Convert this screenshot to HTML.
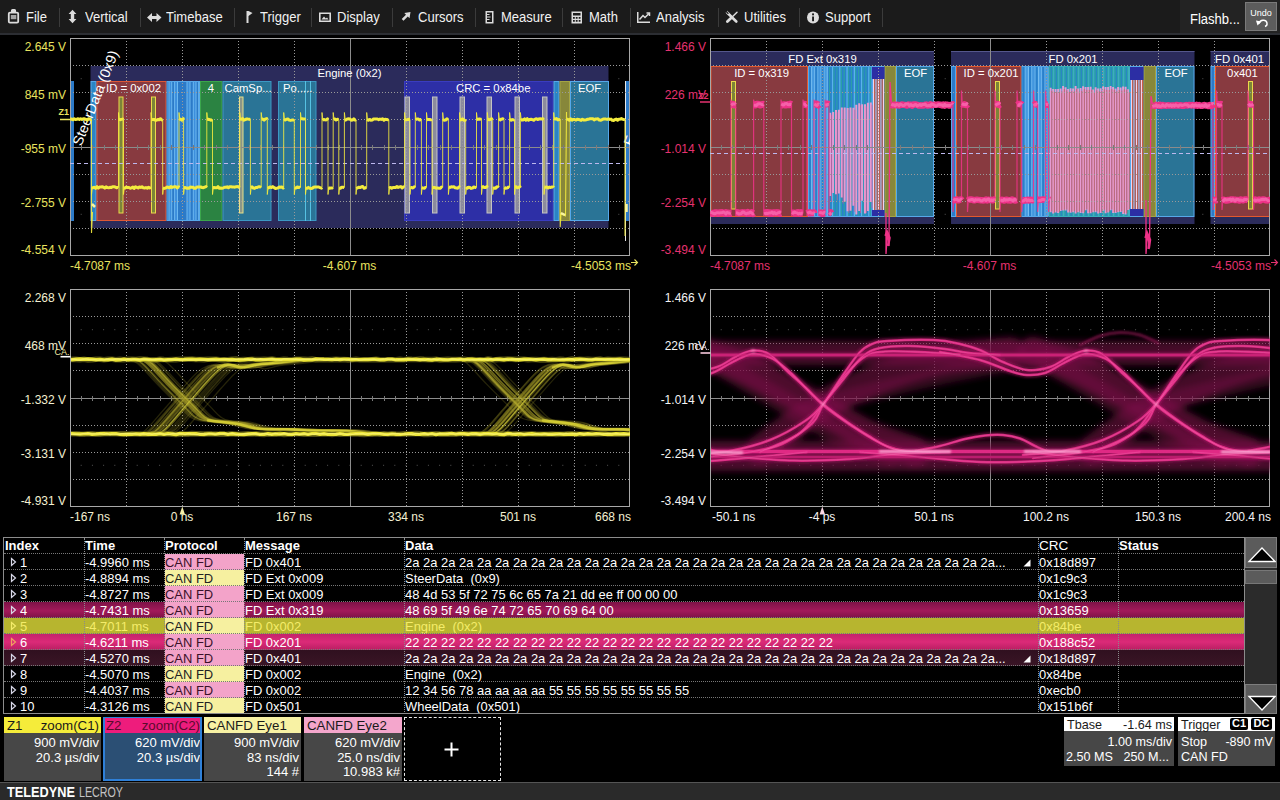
<!DOCTYPE html>
<html lang="en"><head><meta charset="utf-8"><title>Teledyne LeCroy - CAN FD Decode</title>
<style>
*{box-sizing:border-box;margin:0;padding:0}
html,body{width:1280px;height:800px;overflow:hidden;background:#000}
body{position:relative;font-family:"Liberation Sans",Arial,sans-serif;color:#fff;font-size:13px}
#menubar{position:absolute;left:0;top:0;width:1280px;height:35px;background:#1b1b1b;border-bottom:2px solid #2c2e33}
#menubar .mi{position:absolute;top:0;height:33px;line-height:34px;font-size:14px;color:#f2f2f2;white-space:nowrap;transform-origin:0 50%;transform:scaleX(.93)}
#menubar .sep{position:absolute;top:8px;width:1px;height:19px;background:#3b3b3b}
#menubar svg{position:absolute}
#mright{position:absolute;left:1180px;top:0;width:100px;height:33px;background:#232323}
#flash{position:absolute;left:1190px;top:0;line-height:38px;height:33px;font-size:14px;color:#fff;transform-origin:0 50%;transform:scaleX(.93)}
#undo{position:absolute;left:1245px;top:2px;width:32px;height:29px;background:#5c5c5c;border:1px solid #7a7a7a;font-size:9px;line-height:11px;text-align:center;color:#fff;padding-top:5px}
#plots{position:absolute;left:0;top:35px}
#tbl{position:absolute;left:3px;top:537px;width:1242px;height:177px;border:1px solid #8c8c8c;background:#000;overflow:hidden}
.row{position:absolute;left:0;width:1240px;height:16px}
.row span{position:absolute;top:0;height:16px;line-height:17px;font-size:12.95px;white-space:nowrap;overflow:hidden;color:#fff}
.hdr span{font-weight:bold;line-height:16px;font-size:13px}
.vl{position:absolute;top:0;width:0;height:176px;border-left:1px dotted #8a8a8a}
.hl{position:absolute;left:0;height:0;width:1240px;border-top:1px dotted #777}
.pk{background:#f3a3c9;color:#3a1028 !important}
.yl{background:#f6f0a0;color:#222 !important}
#sb{position:absolute;left:1245px;top:537px;width:32px;height:177px;background:#2b2b2b}
#sb .btn{position:absolute;left:0;width:32px;background:#5b5b5b;border:1px solid #7d7d7d}
#sb .thumb{position:absolute;left:0;top:33px;width:32px;height:14px;background:#5b5b5b;border:1px solid #777}
.box{position:absolute;top:717px;height:64px;background:#474747;font-size:13px;color:#fff}
.box .h{position:absolute;left:0;top:0;right:0;height:16px;line-height:17px;font-size:13.3px;color:#1a1a1a;white-space:nowrap}
.box .h i{font-style:normal;position:absolute;left:3px}
.box .h b{font-weight:normal;position:absolute;right:2px}
.box .l{position:absolute;right:2px;height:15px;line-height:15px;white-space:nowrap}
#footer{position:absolute;left:0;top:782px;width:1280px;height:18px;background:#2a2a2a;border-top:1px solid #555}
</style></head><body>

<div id="menubar">
<div class="mi" style="left:26px">File</div>
<div class="mi" style="left:85px">Vertical</div>
<div class="mi" style="left:166px">Timebase</div>
<div class="mi" style="left:260px">Trigger</div>
<div class="mi" style="left:337px">Display</div>
<div class="mi" style="left:418px">Cursors</div>
<div class="mi" style="left:501px">Measure</div>
<div class="mi" style="left:589px">Math</div>
<div class="mi" style="left:656px">Analysis</div>
<div class="mi" style="left:744px">Utilities</div>
<div class="mi" style="left:825px">Support</div>
<div class="sep" style="left:59px"></div>
<div class="sep" style="left:140px"></div>
<div class="sep" style="left:234px"></div>
<div class="sep" style="left:311px"></div>
<div class="sep" style="left:392px"></div>
<div class="sep" style="left:475px"></div>
<div class="sep" style="left:562px"></div>
<div class="sep" style="left:630px"></div>
<div class="sep" style="left:718px"></div>
<div class="sep" style="left:799px"></div>
<div class="sep" style="left:882px"></div>
<svg style="left:0;top:0" width="900" height="34" viewBox="0 0 900 34">
<g fill="none" stroke="#dcdcdc" stroke-width="1.6">
<!-- file (clipboard) -->
<rect x="8.800" y="12.600" width="9.400" height="10" rx="1.200" stroke-width="1.800"/><path d="M11 12.200v-2.200c0 -1.500 5 -1.500 5 0v2.200z" fill="#dcdcdc" stroke="none"/>
<rect x="10.800" y="15" width="5.500" height="4.200" fill="#a4a4a4" stroke="none"/>
</g>
<g fill="#dcdcdc">
<!-- vertical arrow -->
<path d="M72.500 9.800l3.900 4.300h-2.200v4.900h2.200l-3.900 4.300l-3.900 -4.300h2.200v-4.900h-2.200z"/>
<!-- horizontal arrow -->
<path d="M147 17.500l5 -4.500v3h4.500v-3l5 4.500l-5 4.500v-3h-4.500v3z"/>
<!-- trigger flag -->
<path d="M246.500 11h2v12h-2z M248.500 11l4 2l-4 3z"/>
<!-- display -->
<path d="M319 12.500h12v9.500h-12z M320.600 14.100v6.300h8.800v-6.300z" fill-rule="evenodd"/>
<path d="M321.500 19.500l2.500 -3l1.800 2l1.200 -1l1.500 2z"/>
<!-- cursors -->
<path d="M410.500 12l-1 6.200l-1.700 -1.700l-4.300 4.300l-1.800 -1.800l4.300 -4.300l-1.700 -1.700z"/>
<!-- measure -->
<path d="M485.500 11h8v12.500h-8z M487 12.500v9.500h5v-9.500z" fill-rule="evenodd"/>
<path d="M487 14h2.500v1h-2.500z M487 16.500h3.500v1h-3.500z M487 19h2.500v1h-2.500z"/>
<!-- math (calculator) -->
<path d="M571.500 11.500h10.500v12h-10.500z M573 13v2.500h7.500v-2.500z M573 17v1.800h1.800v-1.800z M575.800 17v1.800h1.800v-1.800z M578.700 17v1.800h1.800v-1.800z M573 20v1.800h1.800v-1.800z M575.800 20v1.800h1.800v-1.800z M578.700 20v1.800h1.800v-1.800z" fill-rule="evenodd"/>
<!-- analysis -->
<path d="M637 12h1.500v9.500h11.500v1.500h-13z"/>
<!-- support -->
<circle cx="813" cy="17.500" r="6"/>
</g>
<path d="M639.500 19.500l3.500 -4l2 2l4 -4" fill="none" stroke="#dcdcdc" stroke-width="1.500"/>
<path d="M646.500 13h3v3" fill="none" stroke="#dcdcdc" stroke-width="1.500"/>
<!-- utilities: crossed tools -->
<g stroke="#dcdcdc" stroke-linecap="round" fill="none"><path d="M727.800 13.300l8.500 8.200" stroke-width="2.600"/><path d="M726.600 13.600l1.600 -1.800" stroke-width="2.800" stroke-linecap="butt"/>
<path d="M737 12.300l-4.600 4.400" stroke-width="1.500"/><path d="M731.600 17.600l-4.200 4" stroke-width="2.800"/></g>
<path d="M726 11.300l2.400 2.400" stroke="#1b1b1b" stroke-width="1.300"/>
<!-- support i -->
<rect x="812.100" y="16.500" width="1.900" height="4.700" fill="#1b1b1b"/><rect x="812.100" y="13.400" width="1.900" height="1.900" fill="#1b1b1b"/>
</svg>
<div id="mright"></div><div id="flash">Flashb...</div>
<div id="undo">Undo<svg style="left:9px;top:13px" width="14" height="12" viewBox="0 0 14 12"><path d="M4 7.500c1 -4 7 -4.500 8 -.500c.300 1.800 -.600 3 -2 3.500" fill="none" stroke="#fff" stroke-width="1.400"/><path d="M1 4.500l5.500 1l-4 4z" fill="#fff"/></svg></div>
</div>
<svg id="plots" width="1280" height="502" viewBox="0 35 1280 502" font-family='"Liberation Sans", Arial, sans-serif' font-size="12">
<defs>
<filter id="bl1" filterUnits="userSpaceOnUse" x="640" y="280" width="640" height="240"><feGaussianBlur stdDeviation="0.6"/></filter>
<filter id="bl2" filterUnits="userSpaceOnUse" x="640" y="280" width="640" height="240"><feGaussianBlur stdDeviation="1.3"/></filter>
<filter id="bl3" filterUnits="userSpaceOnUse" x="640" y="280" width="640" height="240"><feGaussianBlur stdDeviation="3"/></filter>
</defs>
<clipPath id="c1"><rect x="70" y="38" width="560" height="218"/></clipPath>
<g id="p1">
<text x="66" y="51.0" text-anchor="end" fill="#e9e35f">2.645 V</text><text x="66" y="99.2" text-anchor="end" fill="#e9e35f">845 mV</text><text x="66" y="153.0" text-anchor="end" fill="#e9e35f">-955 mV</text><text x="66" y="207.2" text-anchor="end" fill="#e9e35f">-2.755 V</text><text x="66" y="253.5" text-anchor="end" fill="#e9e35f">-4.554 V</text>
<text x="70" y="270" fill="#e9e35f">-4.7087 ms</text><text x="349.500" y="270" text-anchor="middle" fill="#e9e35f">-4.607 ms</text><text x="631" y="270" text-anchor="end" fill="#e9e35f">-4.5053 ms</text>
<path d="M631 262.500h6.500m-3 -3l3 3l-3 3" stroke="#e9e35f" fill="none" stroke-width="1.100"/>
<g fill="#555"><rect x="80.7" y="78.2" width="1" height="1"/><rect x="91.9" y="78.2" width="1" height="1"/><rect x="103.1" y="78.2" width="1" height="1"/><rect x="114.3" y="78.2" width="1" height="1"/><rect x="125.5" y="78.2" width="1" height="1"/><rect x="136.7" y="78.2" width="1" height="1"/><rect x="147.9" y="78.2" width="1" height="1"/><rect x="159.1" y="78.2" width="1" height="1"/><rect x="170.3" y="78.2" width="1" height="1"/><rect x="181.5" y="78.2" width="1" height="1"/><rect x="192.7" y="78.2" width="1" height="1"/><rect x="203.9" y="78.2" width="1" height="1"/><rect x="215.1" y="78.2" width="1" height="1"/><rect x="226.3" y="78.2" width="1" height="1"/><rect x="237.5" y="78.2" width="1" height="1"/><rect x="248.7" y="78.2" width="1" height="1"/><rect x="259.9" y="78.2" width="1" height="1"/><rect x="271.1" y="78.2" width="1" height="1"/><rect x="282.3" y="78.2" width="1" height="1"/><rect x="293.5" y="78.2" width="1" height="1"/><rect x="304.7" y="78.2" width="1" height="1"/><rect x="315.9" y="78.2" width="1" height="1"/><rect x="327.1" y="78.2" width="1" height="1"/><rect x="338.3" y="78.2" width="1" height="1"/><rect x="349.5" y="78.2" width="1" height="1"/><rect x="360.7" y="78.2" width="1" height="1"/><rect x="371.9" y="78.2" width="1" height="1"/><rect x="383.1" y="78.2" width="1" height="1"/><rect x="394.3" y="78.2" width="1" height="1"/><rect x="405.5" y="78.2" width="1" height="1"/><rect x="416.7" y="78.2" width="1" height="1"/><rect x="427.9" y="78.2" width="1" height="1"/><rect x="439.1" y="78.2" width="1" height="1"/><rect x="450.3" y="78.2" width="1" height="1"/><rect x="461.5" y="78.2" width="1" height="1"/><rect x="472.7" y="78.2" width="1" height="1"/><rect x="483.9" y="78.2" width="1" height="1"/><rect x="495.1" y="78.2" width="1" height="1"/><rect x="506.3" y="78.2" width="1" height="1"/><rect x="517.5" y="78.2" width="1" height="1"/><rect x="528.7" y="78.2" width="1" height="1"/><rect x="539.9" y="78.2" width="1" height="1"/><rect x="551.1" y="78.2" width="1" height="1"/><rect x="562.3" y="78.2" width="1" height="1"/><rect x="573.5" y="78.2" width="1" height="1"/><rect x="584.7" y="78.2" width="1" height="1"/><rect x="595.9" y="78.2" width="1" height="1"/><rect x="607.1" y="78.2" width="1" height="1"/><rect x="618.3" y="78.2" width="1" height="1"/><rect x="80.7" y="213.8" width="1" height="1"/><rect x="91.9" y="213.8" width="1" height="1"/><rect x="103.1" y="213.8" width="1" height="1"/><rect x="114.3" y="213.8" width="1" height="1"/><rect x="125.5" y="213.8" width="1" height="1"/><rect x="136.7" y="213.8" width="1" height="1"/><rect x="147.9" y="213.8" width="1" height="1"/><rect x="159.1" y="213.8" width="1" height="1"/><rect x="170.3" y="213.8" width="1" height="1"/><rect x="181.5" y="213.8" width="1" height="1"/><rect x="192.7" y="213.8" width="1" height="1"/><rect x="203.9" y="213.8" width="1" height="1"/><rect x="215.1" y="213.8" width="1" height="1"/><rect x="226.3" y="213.8" width="1" height="1"/><rect x="237.5" y="213.8" width="1" height="1"/><rect x="248.7" y="213.8" width="1" height="1"/><rect x="259.9" y="213.8" width="1" height="1"/><rect x="271.1" y="213.8" width="1" height="1"/><rect x="282.3" y="213.8" width="1" height="1"/><rect x="293.5" y="213.8" width="1" height="1"/><rect x="304.7" y="213.8" width="1" height="1"/><rect x="315.9" y="213.8" width="1" height="1"/><rect x="327.1" y="213.8" width="1" height="1"/><rect x="338.3" y="213.8" width="1" height="1"/><rect x="349.5" y="213.8" width="1" height="1"/><rect x="360.7" y="213.8" width="1" height="1"/><rect x="371.9" y="213.8" width="1" height="1"/><rect x="383.1" y="213.8" width="1" height="1"/><rect x="394.3" y="213.8" width="1" height="1"/><rect x="405.5" y="213.8" width="1" height="1"/><rect x="416.7" y="213.8" width="1" height="1"/><rect x="427.9" y="213.8" width="1" height="1"/><rect x="439.1" y="213.8" width="1" height="1"/><rect x="450.3" y="213.8" width="1" height="1"/><rect x="461.5" y="213.8" width="1" height="1"/><rect x="472.7" y="213.8" width="1" height="1"/><rect x="483.9" y="213.8" width="1" height="1"/><rect x="495.1" y="213.8" width="1" height="1"/><rect x="506.3" y="213.8" width="1" height="1"/><rect x="517.5" y="213.8" width="1" height="1"/><rect x="528.7" y="213.8" width="1" height="1"/><rect x="539.9" y="213.8" width="1" height="1"/><rect x="551.1" y="213.8" width="1" height="1"/><rect x="562.3" y="213.8" width="1" height="1"/><rect x="573.5" y="213.8" width="1" height="1"/><rect x="584.7" y="213.8" width="1" height="1"/><rect x="595.9" y="213.8" width="1" height="1"/><rect x="607.1" y="213.8" width="1" height="1"/><rect x="618.3" y="213.8" width="1" height="1"/></g>
<g clip-path="url(#c1)">
<rect x="90.500" y="66" width="518" height="162" fill="#2b2b5b"/>
<rect x="70.5" y="81" width="3.5" height="140" fill="#2c7ac8"/>
<rect x="91.0" y="81.5" width="5.0" height="139" fill="#2a84c4" stroke="#56a8ea" stroke-width="1"/>
<rect x="97.0" y="81.5" width="69.0" height="139" fill="#883a40" stroke="#de5836" stroke-width="1"/>
<rect x="167.0" y="81.5" width="32.5" height="139" fill="#2c7ac8" stroke="#56a8ea" stroke-width="1"/>
<rect x="169" y="82" width="2.6999999999999886" height="138" fill="#3c8edc"/>
<rect x="174.6" y="82" width="2.9000000000000057" height="138" fill="#3c8edc"/>
<rect x="187" y="82" width="3" height="138" fill="#3c8edc"/>
<rect x="193.3" y="82" width="2.6999999999999886" height="138" fill="#3c8edc"/>
<path d="M169 82V220" stroke="#6cb8f0" stroke-width="1"/>
<path d="M171.7 82V220" stroke="#6cb8f0" stroke-width="1"/>
<path d="M174.6 82V220" stroke="#6cb8f0" stroke-width="1"/>
<path d="M177.5 82V220" stroke="#6cb8f0" stroke-width="1"/>
<path d="M187 82V220" stroke="#6cb8f0" stroke-width="1"/>
<path d="M190 82V220" stroke="#6cb8f0" stroke-width="1"/>
<path d="M193.3 82V220" stroke="#6cb8f0" stroke-width="1"/>
<path d="M196 82V220" stroke="#6cb8f0" stroke-width="1"/>
<path d="M198.7 82V220" stroke="#6cb8f0" stroke-width="1"/>
<rect x="200.5" y="81.5" width="21.5" height="139" fill="#2b8342" stroke="#3aa64c" stroke-width="1"/>
<rect x="223.0" y="81.5" width="48.0" height="139" fill="#2a7496" stroke="#3c98c4" stroke-width="1"/>
<rect x="278.5" y="81.5" width="37.5" height="139" fill="#2a7496" stroke="#3c98c4" stroke-width="1"/>
<path d="M305.500 81V221M310.500 81V221" stroke="#56c2e2" stroke-width="1"/>
<rect x="404.5" y="81.5" width="148.5" height="139" fill="#2d2fa6" stroke="#3a3cc0" stroke-width="1"/>
<rect x="554.0" y="81.5" width="5.0" height="139" fill="#2a84c4" stroke="#56a8ea" stroke-width="1"/>
<rect x="560.0" y="81.5" width="9.5" height="139" fill="#87873a" stroke="#a4a444" stroke-width="1"/>
<rect x="570.5" y="81.5" width="38" height="139" fill="#2a7496" stroke="#56a8ea" stroke-width="1"/>
<rect x="625.5" y="81" width="4.5" height="140" fill="#2c7ac8"/>
<path d="M625.500 81V241" stroke="#e8e8e8" stroke-width="1"/>
<rect x="119.0" y="97.0" width="4.0" height="116.0" fill="#7c8438" stroke="#ecd94a" stroke-width="1"/>
<rect x="151.5" y="97.0" width="4" height="116.0" fill="#7c8438" stroke="#ecd94a" stroke-width="1"/>
<rect x="239.5" y="97.0" width="3.5" height="116.0" fill="#8b9688" stroke="#e6e08a" stroke-width="1"/>
<rect x="405.0" y="97.0" width="4.5" height="116.0" fill="#8b8b9d" stroke="#c4c4c4" stroke-width="1"/>
<rect x="432.5" y="97.0" width="4.5" height="116.0" fill="#8b8b9d" stroke="#c4c4c4" stroke-width="1"/>
<rect x="460.0" y="97.0" width="4.5" height="116.0" fill="#8b8b9d" stroke="#c4c4c4" stroke-width="1"/>
<rect x="487.0" y="97.0" width="4.5" height="116.0" fill="#8b8b9d" stroke="#c4c4c4" stroke-width="1"/>
<rect x="515.0" y="97.0" width="4.5" height="116.0" fill="#8b8b9d" stroke="#c4c4c4" stroke-width="1"/>
<rect x="542.5" y="97.0" width="4.5" height="116.0" fill="#8b8b9d" stroke="#c4c4c4" stroke-width="1"/>
</g>
<g stroke="#9a9a9a" stroke-width="1" fill="none" shape-rendering="crispEdges">
<path d="M126.5 38V255" stroke-dasharray="1 2"/>
<path d="M182.5 38V255" stroke-dasharray="1 2"/>
<path d="M238.5 38V255" stroke-dasharray="1 2"/>
<path d="M294.5 38V255" stroke-dasharray="1 2"/>
<path d="M406.5 38V255" stroke-dasharray="1 2"/>
<path d="M462.5 38V255" stroke-dasharray="1 2"/>
<path d="M518.5 38V255" stroke-dasharray="1 2"/>
<path d="M574.5 38V255" stroke-dasharray="1 2"/>
<path d="M70 65.5H630" stroke-dasharray="1 2"/>
<path d="M70 92.5H630" stroke-dasharray="1 2"/>
<path d="M70 119.5H630" stroke-dasharray="1 2"/>
<path d="M70 174.5H630" stroke-dasharray="1 2"/>
<path d="M70 201.5H630" stroke-dasharray="1 2"/>
<path d="M70 228.5H630" stroke-dasharray="1 2"/>
</g>
<g stroke="#8c8c8c" stroke-width="1" fill="none" shape-rendering="crispEdges">
<path d="M350.5 38V255M70 147.5H630"/>
<path d="M81.5 145v5M92.5 145v5M104.5 145v5M115.5 145v5M137.5 145v5M148.5 145v5M160.5 145v5M171.5 145v5M193.5 145v5M204.5 145v5M216.5 145v5M227.5 145v5M249.5 145v5M260.5 145v5M272.5 145v5M283.5 145v5M305.5 145v5M316.5 145v5M328.5 145v5M339.5 145v5M361.5 145v5M372.5 145v5M384.5 145v5M395.5 145v5M417.5 145v5M428.5 145v5M440.5 145v5M451.5 145v5M473.5 145v5M484.5 145v5M496.5 145v5M507.5 145v5M529.5 145v5M540.5 145v5M552.5 145v5M563.5 145v5M585.5 145v5M596.5 145v5M608.5 145v5M619.5 145v5" stroke="#7a7a7a"/>
</g>
<rect x="70.5" y="38.5" width="559" height="217" fill="none" stroke="#a8a8a8" stroke-width="1" shape-rendering="crispEdges"/>
<path d="M70 163.500H630" stroke="#bdb8ee" stroke-width="1" stroke-dasharray="4 3" shape-rendering="crispEdges"/>
<g fill="#fff" font-size="11.300" clip-path="url(#c1)">
<text x="349.500" y="77" text-anchor="middle">Engine (0x2)</text>
<text x="106" y="91.500">ID = 0x002</text><text x="211" y="91.500" text-anchor="middle">4</text><text x="224.500" y="91.500">CamSp...</text><text x="283" y="91.500">Po.....</text><text x="456" y="91.500">CRC = 0x84be</text><text x="578" y="91.500">EOF</text>
<text transform="translate(81.300,146.700) rotate(-68.300)" font-size="14.300" fill="#fff">SteerData (0x9)</text>
<text transform="translate(632.500,147) rotate(-68.300)" font-size="14.300" fill="#fff">E</text>
</g>
<g clip-path="url(#c1)">
<path d="M70 119.5H91.5V194.5L92.3 187.5H118.5V112.5L119.3 119.5H123.5V194.5L124.3 187.5H151V112.5L151.8 119.5H162.7V194.5L163.5 187.5H179V112.5L179.8 119.5H183.6V194.5L184.4 187.5H206.8V112.5L207.60000000000002 119.5H212.5V194.5L213.3 187.5H239.8V112.5L240.60000000000002 119.5H250.4V194.5L251.20000000000002 187.5H261.2V112.5L262.0 119.5H267.3V194.5L268.1 187.5H283.7V112.5L284.5 119.5H294.3V194.5L295.1 187.5H300.5V112.5L301.3 119.5H305.5V194.5L306.3 187.5H322V112.5L322.8 119.5H328V194.5L328.8 187.5H333.2V112.5L334.0 119.5H338.8V194.5L339.6 187.5H344.4V112.5L345.2 119.5H356V194.5L356.8 187.5H366.7V112.5L367.5 119.5H388.8V194.5L389.6 187.5H404.5V112.5L405.3 119.5H410V194.5L410.8 187.5H415.3V112.5L416.1 119.5H421.4V194.5L422.2 187.5H426.5V112.5L427.3 119.5H432V194.5L432.8 187.5H442.7V112.5L443.5 119.5H448.4V194.5L449.2 187.5H459.6V112.5L460.40000000000003 119.5H465.7V194.5L466.5 187.5H476.5V112.5L477.3 119.5H481.5V194.5L482.3 187.5H487.3V112.5L488.1 119.5H492.7V194.5L493.5 187.5H498.6V112.5L499.40000000000003 119.5H504V194.5L504.8 187.5H509.6V112.5L510.40000000000003 119.5H514.5V194.5L515.3 187.5H520.4V112.5L521.1999999999999 119.5H544V194.5L544.8 187.5H553.7V112.5L554.5 119.5H560.2" fill="none" stroke="#f4ec3e" stroke-width="1" opacity=".85"/><path d="M70.3 119.2 L71.6 118.9 L72.9 119.8 L74.2 118.7 L75.5 119.6 L76.8 119.3 L78.1 118.7 L79.4 119.5 L80.7 118.7 L82.0 119.4 L83.3 118.7 L84.6 118.8 L85.9 119.4 L87.2 120.1 L88.5 118.8 L89.8 119.0 L91.1 119.7 L91.3 119.5M91.8 188.3 L93.1 187.6 L94.4 187.3 L95.7 188.4 L97.0 186.7 L98.3 188.1 L99.6 187.1 L100.9 186.9 L102.2 186.8 L103.5 187.2 L104.8 188.1 L106.1 186.9 L107.4 187.6 L108.7 187.8 L110.0 187.3 L111.3 187.6 L112.6 186.7 L113.9 186.7 L115.2 187.0 L116.5 187.8 L117.8 187.4 L118.3 187.5M118.8 119.2 L120.1 119.7 L121.4 119.4 L122.7 119.1 L123.3 119.5M123.8 188.0 L125.1 187.9 L126.4 187.0 L127.7 187.6 L129.0 187.5 L130.3 188.2 L131.6 187.9 L132.9 187.1 L134.2 188.4 L135.5 186.8 L136.8 187.4 L138.1 188.0 L139.4 186.9 L140.7 187.5 L142.0 186.7 L143.3 187.8 L144.6 188.0 L145.9 187.6 L147.2 188.2 L148.5 187.2 L149.8 187.9 L150.8 187.5M151.3 119.7 L152.6 119.6 L153.9 119.4 L155.2 120.1 L156.5 120.3 L157.8 119.5 L159.1 119.8 L160.4 118.7 L161.7 119.9 L162.5 119.5M163.0 187.8 L164.3 188.4 L165.6 188.1 L166.9 187.1 L168.2 187.3 L169.5 187.8 L170.8 186.6 L172.1 187.4 L173.4 186.9 L174.7 186.8 L176.0 186.7 L177.3 188.0 L178.6 186.8 L178.8 187.5M179.3 119.0 L180.6 119.3 L181.9 120.2 L183.2 118.7 L183.4 119.5M183.9 187.4 L185.2 187.6 L186.5 188.2 L187.8 188.1 L189.1 188.2 L190.4 187.1 L191.7 187.3 L193.0 187.2 L194.3 188.2 L195.6 188.3 L196.9 186.9 L198.2 186.9 L199.5 187.0 L200.8 187.0 L202.1 187.5 L203.4 187.7 L204.7 187.1 L206.0 186.6 L206.6 187.5M207.1 119.4 L208.4 119.3 L209.7 119.6 L211.0 120.3 L212.3 119.5M212.8 187.8 L214.1 187.5 L215.4 187.7 L216.7 187.8 L218.0 186.7 L219.3 188.2 L220.6 188.0 L221.9 188.2 L223.2 188.0 L224.5 187.3 L225.8 187.3 L227.1 186.8 L228.4 187.7 L229.7 186.7 L231.0 186.7 L232.3 187.0 L233.6 186.9 L234.9 187.2 L236.2 186.7 L237.5 186.6 L238.8 186.9 L239.6 187.5M240.1 118.8 L241.4 119.3 L242.7 118.6 L244.0 120.2 L245.3 119.7 L246.6 118.9 L247.9 119.1 L249.2 119.2 L250.2 119.5M250.7 187.3 L252.0 186.8 L253.3 188.1 L254.6 188.4 L255.9 187.4 L257.2 187.5 L258.5 186.8 L259.8 186.8 L261.0 187.5M261.5 119.2 L262.8 119.1 L264.1 120.1 L265.4 118.9 L266.7 118.6 L267.1 119.5M267.6 188.3 L268.9 187.6 L270.2 186.9 L271.5 187.6 L272.8 186.6 L274.1 187.6 L275.4 188.4 L276.7 188.2 L278.0 187.9 L279.3 187.1 L280.6 187.3 L281.9 186.9 L283.2 188.0 L283.5 187.5M284.0 119.6 L285.3 120.0 L286.6 119.2 L287.9 119.0 L289.2 120.1 L290.5 120.4 L291.8 120.1 L293.1 120.1 L294.1 119.5M294.6 188.1 L295.9 187.9 L297.2 187.0 L298.5 187.5 L299.8 187.2 L300.3 187.5M300.8 118.7 L302.1 118.7 L303.4 119.1 L304.7 119.1 L305.3 119.5M305.8 187.8 L307.1 188.3 L308.4 187.4 L309.7 188.3 L311.0 188.4 L312.3 188.3 L313.6 187.3 L314.9 187.0 L316.2 187.0 L317.5 187.0 L318.8 187.0 L320.1 187.7 L321.4 188.2 L321.8 187.5M322.3 120.1 L323.6 119.5 L324.9 119.8 L326.2 120.0 L327.5 118.8 L327.8 119.5M328.3 187.8 L329.6 188.2 L330.9 188.0 L332.2 188.0 L333.0 187.5M333.5 119.5 L334.8 118.9 L336.1 120.0 L337.4 119.2 L338.6 119.5M339.1 188.0 L340.4 188.3 L341.7 187.3 L343.0 187.3 L344.2 187.5M344.7 120.3 L346.0 119.9 L347.3 118.9 L348.6 118.8 L349.9 118.9 L351.2 120.2 L352.5 120.1 L353.8 118.9 L355.1 120.1 L355.8 119.5M356.3 188.4 L357.6 187.8 L358.9 187.2 L360.2 187.6 L361.5 186.8 L362.8 186.6 L364.1 188.3 L365.4 187.8 L366.5 187.5M367.0 119.5 L368.3 120.3 L369.6 119.4 L370.9 120.2 L372.2 120.1 L373.5 119.0 L374.8 119.1 L376.1 119.1 L377.4 119.0 L378.7 119.7 L380.0 119.1 L381.3 119.4 L382.6 118.8 L383.9 120.2 L385.2 119.2 L386.5 119.4 L387.8 119.7 L388.6 119.5M389.1 188.2 L390.4 187.4 L391.7 188.3 L393.0 187.5 L394.3 187.6 L395.6 187.5 L396.9 186.6 L398.2 187.4 L399.5 186.9 L400.8 186.6 L402.1 188.0 L403.4 186.9 L404.3 187.5M404.8 119.5 L406.1 119.9 L407.4 119.6 L408.7 119.2 L409.8 119.5M410.3 187.5 L411.6 187.6 L412.9 188.0 L414.2 186.8 L415.1 187.5M415.6 119.6 L416.9 119.0 L418.2 119.1 L419.5 120.0 L420.8 119.5 L421.2 119.5M421.7 187.6 L423.0 188.0 L424.3 188.2 L425.6 187.4 L426.3 187.5M426.8 119.7 L428.1 119.5 L429.4 119.5 L430.7 119.8 L431.8 119.5M432.3 187.4 L433.6 187.6 L434.9 187.5 L436.2 188.3 L437.5 187.9 L438.8 188.2 L440.1 188.3 L441.4 187.1 L442.5 187.5M443.0 119.6 L444.3 120.3 L445.6 120.1 L446.9 118.8 L448.2 119.5M448.7 186.8 L450.0 187.4 L451.3 186.7 L452.6 187.0 L453.9 186.7 L455.2 187.8 L456.5 188.0 L457.8 188.2 L459.1 186.9 L459.4 187.5M459.9 119.9 L461.2 119.8 L462.5 118.9 L463.8 120.2 L465.1 120.3 L465.5 119.5M466.0 187.0 L467.3 188.3 L468.6 187.3 L469.9 187.5 L471.2 188.4 L472.5 188.1 L473.8 186.9 L475.1 187.4 L476.3 187.5M476.8 119.5 L478.1 119.2 L479.4 119.0 L480.7 119.2 L481.3 119.5M481.8 187.9 L483.1 186.6 L484.4 187.6 L485.7 187.4 L487.0 186.6 L487.1 187.5M487.6 119.2 L488.9 119.7 L490.2 119.5 L491.5 118.7 L492.5 119.5M493.0 188.4 L494.3 188.0 L495.6 188.3 L496.9 186.8 L498.2 187.1 L498.4 187.5M498.9 118.7 L500.2 120.0 L501.5 119.1 L502.8 118.8 L503.8 119.5M504.3 187.4 L505.6 188.2 L506.9 188.1 L508.2 187.1 L509.4 187.5M509.9 118.9 L511.2 120.3 L512.5 119.6 L513.8 119.9 L514.3 119.5M514.8 186.8 L516.1 186.7 L517.4 187.8 L518.7 187.4 L520.0 186.7 L520.2 187.5M520.7 120.3 L522.0 119.7 L523.3 120.0 L524.6 118.8 L525.9 120.1 L527.2 118.7 L528.5 120.2 L529.8 119.4 L531.1 119.2 L532.4 119.6 L533.7 120.3 L535.0 119.1 L536.3 118.8 L537.6 119.5 L538.9 119.0 L540.2 118.8 L541.5 118.9 L542.8 118.7 L543.8 119.5M544.3 187.0 L545.6 187.2 L546.9 187.1 L548.2 188.0 L549.5 187.1 L550.8 187.5 L552.1 186.9 L553.4 187.2 L553.5 187.5M554.0 118.6 L555.3 119.1 L556.6 118.6 L557.9 119.9 L559.2 119.6 L560.0 119.5" fill="none" stroke="#f4ec3e" stroke-width="3" stroke-linejoin="round"/>
<path d="M566.5 119.5H625" fill="none" stroke="#f4ec3e" stroke-width="1" opacity=".85"/><path d="M566.8 118.9 L568.1 119.5 L569.4 120.3 L570.7 118.8 L572.0 120.1 L573.3 119.4 L574.6 119.5 L575.9 120.1 L577.2 119.3 L578.5 119.5 L579.8 119.8 L581.1 120.4 L582.4 119.2 L583.7 120.1 L585.0 119.9 L586.3 119.7 L587.6 119.3 L588.9 119.2 L590.2 118.7 L591.5 118.8 L592.8 118.7 L594.1 119.9 L595.4 119.1 L596.7 118.9 L598.0 118.8 L599.3 120.1 L600.6 120.2 L601.9 119.8 L603.2 119.1 L604.5 119.0 L605.8 119.1 L607.1 119.4 L608.4 118.9 L609.7 119.4 L611.0 119.1 L612.3 120.3 L613.6 120.4 L614.9 119.6 L616.2 119.0 L617.5 120.3 L618.8 119.2 L620.1 119.2 L621.4 118.6 L622.7 119.3 L624.0 119.5 L624.8 119.5" fill="none" stroke="#f4ec3e" stroke-width="3" stroke-linejoin="round"/>
<path d="M91.500 187V233L92.500 212M560.200 119V227L561 214L565.500 216L566.500 112V119M625 119V236" stroke="#f4ec3e" stroke-width="1.100" fill="none" opacity=".9"/>
<path d="M92 204l3 3M561 213l4 2M626.500 204v8" stroke="#f8f4a0" stroke-width="2.500" fill="none"/>
</g>
<text x="58.500" y="115" font-size="9" font-weight="bold" fill="#e9e35f">Z1</text><path d="M60 119.500h11" stroke="#e9e35f" stroke-width="1.500"/>
</g>
<clipPath id="c2"><rect x="710" y="38" width="560" height="218"/></clipPath>
<g id="p2">
<text x="706" y="51.0" text-anchor="end" fill="#e5326f">1.466 V</text><text x="706" y="99.2" text-anchor="end" fill="#e5326f">226 mV</text><text x="706" y="153.0" text-anchor="end" fill="#e5326f">-1.014 V</text><text x="706" y="207.2" text-anchor="end" fill="#e5326f">-2.254 V</text><text x="706" y="253.5" text-anchor="end" fill="#e5326f">-3.494 V</text>
<text x="710" y="270" fill="#e5326f">-4.7087 ms</text><text x="989.500" y="270" text-anchor="middle" fill="#e5326f">-4.607 ms</text><text x="1271" y="270" text-anchor="end" fill="#e5326f">-4.5053 ms</text>
<path d="M1271 262.500h6.500m-3 -3l3 3l-3 3" stroke="#e5326f" fill="none" stroke-width="1.100"/>
<g fill="#555"><rect x="720.7" y="78.2" width="1" height="1"/><rect x="731.9" y="78.2" width="1" height="1"/><rect x="743.1" y="78.2" width="1" height="1"/><rect x="754.3" y="78.2" width="1" height="1"/><rect x="765.5" y="78.2" width="1" height="1"/><rect x="776.7" y="78.2" width="1" height="1"/><rect x="787.9" y="78.2" width="1" height="1"/><rect x="799.1" y="78.2" width="1" height="1"/><rect x="810.3" y="78.2" width="1" height="1"/><rect x="821.5" y="78.2" width="1" height="1"/><rect x="832.7" y="78.2" width="1" height="1"/><rect x="843.9" y="78.2" width="1" height="1"/><rect x="855.1" y="78.2" width="1" height="1"/><rect x="866.3" y="78.2" width="1" height="1"/><rect x="877.5" y="78.2" width="1" height="1"/><rect x="888.7" y="78.2" width="1" height="1"/><rect x="899.9" y="78.2" width="1" height="1"/><rect x="911.1" y="78.2" width="1" height="1"/><rect x="922.3" y="78.2" width="1" height="1"/><rect x="933.5" y="78.2" width="1" height="1"/><rect x="944.7" y="78.2" width="1" height="1"/><rect x="955.9" y="78.2" width="1" height="1"/><rect x="967.1" y="78.2" width="1" height="1"/><rect x="978.3" y="78.2" width="1" height="1"/><rect x="989.5" y="78.2" width="1" height="1"/><rect x="1000.7" y="78.2" width="1" height="1"/><rect x="1011.9" y="78.2" width="1" height="1"/><rect x="1023.1" y="78.2" width="1" height="1"/><rect x="1034.3" y="78.2" width="1" height="1"/><rect x="1045.5" y="78.2" width="1" height="1"/><rect x="1056.7" y="78.2" width="1" height="1"/><rect x="1067.9" y="78.2" width="1" height="1"/><rect x="1079.1" y="78.2" width="1" height="1"/><rect x="1090.3" y="78.2" width="1" height="1"/><rect x="1101.5" y="78.2" width="1" height="1"/><rect x="1112.7" y="78.2" width="1" height="1"/><rect x="1123.9" y="78.2" width="1" height="1"/><rect x="1135.1" y="78.2" width="1" height="1"/><rect x="1146.3" y="78.2" width="1" height="1"/><rect x="1157.5" y="78.2" width="1" height="1"/><rect x="1168.7" y="78.2" width="1" height="1"/><rect x="1179.9" y="78.2" width="1" height="1"/><rect x="1191.1" y="78.2" width="1" height="1"/><rect x="1202.3" y="78.2" width="1" height="1"/><rect x="1213.5" y="78.2" width="1" height="1"/><rect x="1224.7" y="78.2" width="1" height="1"/><rect x="1235.9" y="78.2" width="1" height="1"/><rect x="1247.1" y="78.2" width="1" height="1"/><rect x="1258.3" y="78.2" width="1" height="1"/><rect x="720.7" y="213.8" width="1" height="1"/><rect x="731.9" y="213.8" width="1" height="1"/><rect x="743.1" y="213.8" width="1" height="1"/><rect x="754.3" y="213.8" width="1" height="1"/><rect x="765.5" y="213.8" width="1" height="1"/><rect x="776.7" y="213.8" width="1" height="1"/><rect x="787.9" y="213.8" width="1" height="1"/><rect x="799.1" y="213.8" width="1" height="1"/><rect x="810.3" y="213.8" width="1" height="1"/><rect x="821.5" y="213.8" width="1" height="1"/><rect x="832.7" y="213.8" width="1" height="1"/><rect x="843.9" y="213.8" width="1" height="1"/><rect x="855.1" y="213.8" width="1" height="1"/><rect x="866.3" y="213.8" width="1" height="1"/><rect x="877.5" y="213.8" width="1" height="1"/><rect x="888.7" y="213.8" width="1" height="1"/><rect x="899.9" y="213.8" width="1" height="1"/><rect x="911.1" y="213.8" width="1" height="1"/><rect x="922.3" y="213.8" width="1" height="1"/><rect x="933.5" y="213.8" width="1" height="1"/><rect x="944.7" y="213.8" width="1" height="1"/><rect x="955.9" y="213.8" width="1" height="1"/><rect x="967.1" y="213.8" width="1" height="1"/><rect x="978.3" y="213.8" width="1" height="1"/><rect x="989.5" y="213.8" width="1" height="1"/><rect x="1000.7" y="213.8" width="1" height="1"/><rect x="1011.9" y="213.8" width="1" height="1"/><rect x="1023.1" y="213.8" width="1" height="1"/><rect x="1034.3" y="213.8" width="1" height="1"/><rect x="1045.5" y="213.8" width="1" height="1"/><rect x="1056.7" y="213.8" width="1" height="1"/><rect x="1067.9" y="213.8" width="1" height="1"/><rect x="1079.1" y="213.8" width="1" height="1"/><rect x="1090.3" y="213.8" width="1" height="1"/><rect x="1101.5" y="213.8" width="1" height="1"/><rect x="1112.7" y="213.8" width="1" height="1"/><rect x="1123.9" y="213.8" width="1" height="1"/><rect x="1135.1" y="213.8" width="1" height="1"/><rect x="1146.3" y="213.8" width="1" height="1"/><rect x="1157.5" y="213.8" width="1" height="1"/><rect x="1168.7" y="213.8" width="1" height="1"/><rect x="1179.9" y="213.8" width="1" height="1"/><rect x="1191.1" y="213.8" width="1" height="1"/><rect x="1202.3" y="213.8" width="1" height="1"/><rect x="1213.5" y="213.8" width="1" height="1"/><rect x="1224.7" y="213.8" width="1" height="1"/><rect x="1235.9" y="213.8" width="1" height="1"/><rect x="1247.1" y="213.8" width="1" height="1"/><rect x="1258.3" y="213.8" width="1" height="1"/></g>
<g clip-path="url(#c2)">
<rect x="710.5" y="51" width="223.5" height="173" fill="#2b2b5b"/>
<path d="M710.5 51.500H934" stroke="#55578c" stroke-width="1"/>
<rect x="951" y="51" width="243.5" height="173" fill="#2b2b5b"/>
<path d="M951 51.500H1194.5" stroke="#55578c" stroke-width="1"/>
<rect x="1210.5" y="51" width="59.5" height="173" fill="#2b2b5b"/>
<path d="M1210.5 51.500H1270" stroke="#55578c" stroke-width="1"/>
<rect x="711.0" y="66.5" width="96.5" height="150" fill="#883a40" stroke="#e4582e" stroke-width="1"/>
<rect x="808.5" y="66.5" width="63" height="150" fill="#2a80cc" stroke="#56a8ea" stroke-width="1"/>
<rect x="872.5" y="66.5" width="11.5" height="150" fill="#2a80cc" stroke="#56a8ea" stroke-width="1"/>
<rect x="885.0" y="66.5" width="10.5" height="150" fill="#87873a" stroke="#a4a444" stroke-width="1"/>
<rect x="896.5" y="66.5" width="37" height="150" fill="#2a7496" stroke="#56a8ea" stroke-width="1"/>
<rect x="951.5" y="66.5" width="4" height="150" fill="#2c7ac8" stroke="#56a8ea" stroke-width="1"/>
<rect x="956.5" y="66.5" width="64.5" height="150" fill="#883a40" stroke="#e4582e" stroke-width="1"/>
<rect x="1022.0" y="66.5" width="26.0" height="150" fill="#2a80cc" stroke="#56a8ea" stroke-width="1"/>
<rect x="1049.0" y="66.5" width="80.5" height="150" fill="#2a9aa8" stroke="#36b0bc" stroke-width="1"/>
<rect x="1130.5" y="66.5" width="12.5" height="150" fill="#2a80cc" stroke="#56a8ea" stroke-width="1"/>
<rect x="1144.0" y="66.5" width="11.5" height="150" fill="#87873a" stroke="#a4a444" stroke-width="1"/>
<rect x="1156.5" y="66.5" width="37.5" height="150" fill="#2a7496" stroke="#56a8ea" stroke-width="1"/>
<rect x="1211.0" y="66.5" width="3.5" height="150" fill="#2c7ac8" stroke="#56a8ea" stroke-width="1"/>
<rect x="1215.5" y="66.5" width="54" height="150" fill="#883a40" stroke="#e4582e" stroke-width="1"/>
<rect x="809.0" y="67" width="1.1" height="149" fill="#2a80cc"/><rect x="810.0" y="67" width="1.1" height="149" fill="#2a80cc"/><rect x="811.1" y="67" width="1.1" height="149" fill="#76bef2"/><rect x="812.1" y="67" width="1.1" height="149" fill="#4a9ee4"/><rect x="813.2" y="67" width="1.1" height="149" fill="#4a9ee4"/><rect x="814.2" y="67" width="1.1" height="149" fill="#76bef2"/><rect x="815.3" y="67" width="1.1" height="149" fill="#2a80cc"/><rect x="816.3" y="67" width="1.1" height="149" fill="#2a80cc"/><rect x="817.4" y="67" width="1.1" height="149" fill="#76bef2"/><rect x="818.4" y="67" width="1.1" height="149" fill="#4a9ee4"/><rect x="819.5" y="67" width="1.1" height="149" fill="#4a9ee4"/><rect x="820.5" y="67" width="1.1" height="149" fill="#76bef2"/><rect x="821.6" y="67" width="1.1" height="149" fill="#2a80cc"/><rect x="822.6" y="67" width="1.1" height="149" fill="#2a80cc"/><rect x="823.7" y="67" width="1.1" height="149" fill="#76bef2"/><rect x="824.7" y="67" width="1.1" height="149" fill="#4a9ee4"/><rect x="825.8" y="67" width="1.1" height="149" fill="#4a9ee4"/><rect x="826.8" y="67" width="1.1" height="149" fill="#76bef2"/><rect x="827.9" y="67" width="1.1" height="149" fill="#2a80cc"/>
<rect x="829.0" y="67" width="1.4" height="149" fill="#2a9ea8"/><rect x="830.5" y="67" width="1.4" height="149" fill="#2a80cc"/><rect x="831.9" y="67" width="1.4" height="149" fill="#5ab2ec"/><rect x="833.4" y="67" width="1.4" height="149" fill="#2a9ea8"/><rect x="834.8" y="67" width="1.4" height="149" fill="#2a80cc"/><rect x="836.3" y="67" width="1.4" height="149" fill="#2a9ea8"/><rect x="837.7" y="67" width="1.4" height="149" fill="#2a80cc"/><rect x="839.2" y="67" width="1.4" height="149" fill="#5ab2ec"/><rect x="840.6" y="67" width="1.4" height="149" fill="#2a9ea8"/><rect x="842.1" y="67" width="1.4" height="149" fill="#2a80cc"/><rect x="843.5" y="67" width="1.4" height="149" fill="#2a9ea8"/><rect x="845.0" y="67" width="1.4" height="149" fill="#2a80cc"/><rect x="846.4" y="67" width="1.4" height="149" fill="#5ab2ec"/><rect x="847.9" y="67" width="1.4" height="149" fill="#2a9ea8"/><rect x="849.3" y="67" width="1.4" height="149" fill="#2a80cc"/><rect x="850.8" y="67" width="1.4" height="149" fill="#2a9ea8"/><rect x="852.2" y="67" width="1.4" height="149" fill="#2a80cc"/><rect x="853.7" y="67" width="1.4" height="149" fill="#5ab2ec"/><rect x="855.1" y="67" width="1.4" height="149" fill="#2a9ea8"/><rect x="856.6" y="67" width="1.4" height="149" fill="#2a80cc"/><rect x="858.0" y="67" width="1.4" height="149" fill="#2a9ea8"/><rect x="859.5" y="67" width="1.4" height="149" fill="#2a80cc"/><rect x="860.9" y="67" width="1.4" height="149" fill="#5ab2ec"/><rect x="862.4" y="67" width="1.4" height="149" fill="#2a9ea8"/><rect x="863.8" y="67" width="1.4" height="149" fill="#2a80cc"/><rect x="865.3" y="67" width="1.4" height="149" fill="#2a9ea8"/><rect x="866.7" y="67" width="1.4" height="149" fill="#2a80cc"/><rect x="868.2" y="67" width="1.4" height="149" fill="#5ab2ec"/><rect x="869.6" y="67" width="1.4" height="149" fill="#2a9ea8"/><rect x="871.1" y="67" width="0.4" height="149" fill="#2a80cc"/>
<path d="M830.2 112.7V196.0M833.1 111.9V193.1M836.0 110.1V194.3M838.9 109.8V193.6M841.8 107.5V197.6M844.7 107.5V201.8M847.6 107.9V211.3M850.5 107.6V210.7M853.4 107.7V205.8M856.3 104.7V214.5M859.2 103.2V210.9M862.1 104.3V200.7M865.0 104.3V213.4M867.9 102.7V211.0M870.8 102.6V202.1" stroke="#e59ad0" stroke-width="2" fill="none"/>
<path d="M831.5 114.7V202.0M837.3 112.1V200.3M843.1 109.5V203.6M848.9 109.9V213.0M854.7 109.7V211.8M860.5 105.2V213.0M866.3 106.3V213.0M872.1 104.6V208.1" stroke="#e4508c" stroke-width=".8" fill="none" opacity=".8"/>
<rect x="872" y="67" width="12.5" height="12" fill="#2c2ea4"/>
<rect x="872" y="210" width="12.5" height="6" fill="#2c2ea4"/>
<path d="M873.5 79V210" stroke="#f0d4ec" stroke-width="1"/>
<path d="M876 79V210" stroke="#f0d4ec" stroke-width="1"/>
<path d="M878.5 79V210" stroke="#f0d4ec" stroke-width="1"/>
<path d="M881 79V210" stroke="#f0d4ec" stroke-width="1"/>
<path d="M883.5 79V210" stroke="#f0d4ec" stroke-width="1"/>
<path d="M874.7 79V210" stroke="#de5836" stroke-width="1"/>
<path d="M877.2 79V210" stroke="#de5836" stroke-width="1"/>
<path d="M879.7 79V210" stroke="#de5836" stroke-width="1"/>
<path d="M882.2 79V210" stroke="#de5836" stroke-width="1"/>
<rect x="1022.5" y="67" width="1.1" height="149" fill="#2a80cc"/><rect x="1023.6" y="67" width="1.1" height="149" fill="#2a80cc"/><rect x="1024.7" y="67" width="1.1" height="149" fill="#76bef2"/><rect x="1025.8" y="67" width="1.1" height="149" fill="#4a9ee4"/><rect x="1026.9" y="67" width="1.1" height="149" fill="#4a9ee4"/><rect x="1028.0" y="67" width="1.1" height="149" fill="#76bef2"/><rect x="1029.1" y="67" width="1.1" height="149" fill="#2a80cc"/><rect x="1030.2" y="67" width="1.1" height="149" fill="#2a80cc"/><rect x="1031.3" y="67" width="1.1" height="149" fill="#76bef2"/><rect x="1032.4" y="67" width="1.1" height="149" fill="#4a9ee4"/><rect x="1033.5" y="67" width="1.1" height="149" fill="#4a9ee4"/><rect x="1034.6" y="67" width="1.1" height="149" fill="#76bef2"/><rect x="1035.7" y="67" width="1.1" height="149" fill="#2a80cc"/><rect x="1036.8" y="67" width="1.1" height="149" fill="#2a80cc"/><rect x="1037.9" y="67" width="1.1" height="149" fill="#76bef2"/><rect x="1039.0" y="67" width="1.1" height="149" fill="#4a9ee4"/><rect x="1040.1" y="67" width="1.1" height="149" fill="#4a9ee4"/><rect x="1041.2" y="67" width="1.1" height="149" fill="#76bef2"/><rect x="1042.3" y="67" width="1.1" height="149" fill="#2a80cc"/><rect x="1043.4" y="67" width="1.1" height="149" fill="#2a80cc"/><rect x="1044.5" y="67" width="1.1" height="149" fill="#76bef2"/><rect x="1045.6" y="67" width="1.1" height="149" fill="#4a9ee4"/><rect x="1046.7" y="67" width="1.1" height="149" fill="#4a9ee4"/><rect x="1047.8" y="67" width="0.7" height="149" fill="#76bef2"/>
<rect x="1049.5" y="67" width="1.2" height="149" fill="#2aa2aa"/><rect x="1050.8" y="67" width="1.2" height="149" fill="#2a86c4"/><rect x="1052.0" y="67" width="1.2" height="149" fill="#2aa2aa"/><rect x="1053.2" y="67" width="1.2" height="149" fill="#46b0c8"/><rect x="1054.5" y="67" width="1.2" height="149" fill="#2aa2aa"/><rect x="1055.8" y="67" width="1.2" height="149" fill="#2a86c4"/><rect x="1057.0" y="67" width="1.2" height="149" fill="#2aa2aa"/><rect x="1058.2" y="67" width="1.2" height="149" fill="#46b0c8"/><rect x="1059.5" y="67" width="1.2" height="149" fill="#2aa2aa"/><rect x="1060.8" y="67" width="1.2" height="149" fill="#2a86c4"/><rect x="1062.0" y="67" width="1.2" height="149" fill="#2aa2aa"/><rect x="1063.2" y="67" width="1.2" height="149" fill="#46b0c8"/><rect x="1064.5" y="67" width="1.2" height="149" fill="#2aa2aa"/><rect x="1065.8" y="67" width="1.2" height="149" fill="#2a86c4"/><rect x="1067.0" y="67" width="1.2" height="149" fill="#2aa2aa"/><rect x="1068.2" y="67" width="1.2" height="149" fill="#46b0c8"/><rect x="1069.5" y="67" width="1.2" height="149" fill="#2aa2aa"/><rect x="1070.8" y="67" width="1.2" height="149" fill="#2a86c4"/><rect x="1072.0" y="67" width="1.2" height="149" fill="#2aa2aa"/><rect x="1073.2" y="67" width="1.2" height="149" fill="#46b0c8"/><rect x="1074.5" y="67" width="1.2" height="149" fill="#2aa2aa"/><rect x="1075.8" y="67" width="1.2" height="149" fill="#2a86c4"/><rect x="1077.0" y="67" width="1.2" height="149" fill="#2aa2aa"/><rect x="1078.2" y="67" width="1.2" height="149" fill="#46b0c8"/><rect x="1079.5" y="67" width="1.2" height="149" fill="#2aa2aa"/><rect x="1080.8" y="67" width="1.2" height="149" fill="#2a86c4"/><rect x="1082.0" y="67" width="1.2" height="149" fill="#2aa2aa"/><rect x="1083.2" y="67" width="1.2" height="149" fill="#46b0c8"/><rect x="1084.5" y="67" width="1.2" height="149" fill="#2aa2aa"/><rect x="1085.8" y="67" width="1.2" height="149" fill="#2a86c4"/><rect x="1087.0" y="67" width="1.2" height="149" fill="#2aa2aa"/><rect x="1088.2" y="67" width="1.2" height="149" fill="#46b0c8"/><rect x="1089.5" y="67" width="1.2" height="149" fill="#2aa2aa"/><rect x="1090.8" y="67" width="1.2" height="149" fill="#2a86c4"/><rect x="1092.0" y="67" width="1.2" height="149" fill="#2aa2aa"/><rect x="1093.2" y="67" width="1.2" height="149" fill="#46b0c8"/><rect x="1094.5" y="67" width="1.2" height="149" fill="#2aa2aa"/><rect x="1095.8" y="67" width="1.2" height="149" fill="#2a86c4"/><rect x="1097.0" y="67" width="1.2" height="149" fill="#2aa2aa"/><rect x="1098.2" y="67" width="1.2" height="149" fill="#46b0c8"/><rect x="1099.5" y="67" width="1.2" height="149" fill="#2aa2aa"/><rect x="1100.8" y="67" width="1.2" height="149" fill="#2a86c4"/><rect x="1102.0" y="67" width="1.2" height="149" fill="#2aa2aa"/><rect x="1103.2" y="67" width="1.2" height="149" fill="#46b0c8"/><rect x="1104.5" y="67" width="1.2" height="149" fill="#2aa2aa"/><rect x="1105.8" y="67" width="1.2" height="149" fill="#2a86c4"/><rect x="1107.0" y="67" width="1.2" height="149" fill="#2aa2aa"/><rect x="1108.2" y="67" width="1.2" height="149" fill="#46b0c8"/><rect x="1109.5" y="67" width="1.2" height="149" fill="#2aa2aa"/><rect x="1110.8" y="67" width="1.2" height="149" fill="#2a86c4"/><rect x="1112.0" y="67" width="1.2" height="149" fill="#2aa2aa"/><rect x="1113.2" y="67" width="1.2" height="149" fill="#46b0c8"/><rect x="1114.5" y="67" width="1.2" height="149" fill="#2aa2aa"/><rect x="1115.8" y="67" width="1.2" height="149" fill="#2a86c4"/><rect x="1117.0" y="67" width="1.2" height="149" fill="#2aa2aa"/><rect x="1118.2" y="67" width="1.2" height="149" fill="#46b0c8"/><rect x="1119.5" y="67" width="1.2" height="149" fill="#2aa2aa"/><rect x="1120.8" y="67" width="1.2" height="149" fill="#2a86c4"/><rect x="1122.0" y="67" width="1.2" height="149" fill="#2aa2aa"/><rect x="1123.2" y="67" width="1.2" height="149" fill="#46b0c8"/><rect x="1124.5" y="67" width="1.2" height="149" fill="#2aa2aa"/><rect x="1125.8" y="67" width="1.2" height="149" fill="#2a86c4"/><rect x="1127.0" y="67" width="1.2" height="149" fill="#2aa2aa"/><rect x="1128.2" y="67" width="1.2" height="149" fill="#46b0c8"/>
<path d="M1050.6 87.8V212.3M1053.1 88.9V213.6M1055.6 88.9V212.6M1058.1 89.1V213.1M1060.6 88.4V211.0M1063.1 86.1V210.6M1065.6 87.3V210.5M1068.1 88.9V212.5M1070.6 88.2V212.8M1073.1 88.4V212.2M1075.6 86.0V213.6M1078.1 88.6V212.3M1080.6 87.9V213.0M1083.1 86.2V213.3M1085.6 86.9V210.3M1088.1 86.9V213.3M1090.6 86.7V213.3M1093.1 89.4V212.2M1095.6 87.3V212.2M1098.1 88.4V213.5M1100.6 88.2V212.9M1103.1 86.3V210.7M1105.6 86.9V213.3M1108.1 87.1V212.6M1110.6 86.0V210.3M1113.1 86.9V213.0M1115.6 88.4V213.0M1118.1 87.0V212.3M1120.6 87.6V212.1M1123.1 86.4V214.0M1125.6 86.7V214.4M1128.1 89.3V210.1" stroke="#e59cd2" stroke-width="1.900" fill="none"/>
<path d="M1051.8 90.8V211.3M1054.3 91.9V212.6M1056.8 91.9V211.6M1059.3 92.1V212.1M1061.8 91.4V210.0M1064.3 89.1V209.6M1066.8 90.3V209.5M1069.3 91.9V211.5M1071.8 91.2V211.8M1074.3 91.4V211.2M1076.8 89.0V212.6M1079.3 91.6V211.3M1081.8 90.9V212.0M1084.3 89.2V212.3M1086.8 89.9V209.3M1089.3 89.9V212.3M1091.8 89.7V212.3M1094.3 92.4V211.2M1096.8 90.3V211.2M1099.3 91.4V212.5M1101.8 91.2V211.9M1104.3 89.3V209.7M1106.8 89.9V212.3M1109.3 90.1V211.6M1111.8 89.0V209.3M1114.3 89.9V212.0M1116.8 91.4V212.0M1119.3 90.0V211.3M1121.8 90.6V211.1M1124.3 89.4V213.0M1126.8 89.7V213.4M1129.3 92.3V209.1" stroke="#e0505a" stroke-width=".9" fill="none" opacity=".9"/>
<rect x="1130" y="67" width="13.5" height="13" fill="#2c2ea4"/>
<rect x="1130" y="209" width="13.5" height="7" fill="#2c2ea4"/>
<path d="M1131.5 80V209" stroke="#f0d4ec" stroke-width="1"/>
<path d="M1134 80V209" stroke="#f0d4ec" stroke-width="1"/>
<path d="M1136.5 80V209" stroke="#f0d4ec" stroke-width="1"/>
<path d="M1139 80V209" stroke="#f0d4ec" stroke-width="1"/>
<path d="M1141.5 80V209" stroke="#f0d4ec" stroke-width="1"/>
<path d="M1132.7 80V209" stroke="#de5836" stroke-width="1"/>
<path d="M1135.2 80V209" stroke="#de5836" stroke-width="1"/>
<path d="M1137.7 80V209" stroke="#de5836" stroke-width="1"/>
<path d="M1140.2 80V209" stroke="#de5836" stroke-width="1"/>
<path d="M1142.6 80V209" stroke="#de5836" stroke-width="1"/>
<rect x="731.5" y="81.5" width="4" height="127.5" fill="#7c8438" stroke="#ecd94a" stroke-width="1"/>
<rect x="995.5" y="81.5" width="4" height="127.5" fill="#7c8438" stroke="#ecd94a" stroke-width="1"/>
<rect x="1248.5" y="81.5" width="4" height="127.5" fill="#7c8438" stroke="#ecd94a" stroke-width="1"/>
</g>
<g stroke="#9a9a9a" stroke-width="1" fill="none" shape-rendering="crispEdges">
<path d="M766.5 38V255" stroke-dasharray="1 2"/>
<path d="M822.5 38V255" stroke-dasharray="1 2"/>
<path d="M878.5 38V255" stroke-dasharray="1 2"/>
<path d="M934.5 38V255" stroke-dasharray="1 2"/>
<path d="M1046.5 38V255" stroke-dasharray="1 2"/>
<path d="M1102.5 38V255" stroke-dasharray="1 2"/>
<path d="M1158.5 38V255" stroke-dasharray="1 2"/>
<path d="M1214.5 38V255" stroke-dasharray="1 2"/>
<path d="M710 65.5H1270" stroke-dasharray="1 2"/>
<path d="M710 92.5H1270" stroke-dasharray="1 2"/>
<path d="M710 119.5H1270" stroke-dasharray="1 2"/>
<path d="M710 174.5H1270" stroke-dasharray="1 2"/>
<path d="M710 201.5H1270" stroke-dasharray="1 2"/>
<path d="M710 228.5H1270" stroke-dasharray="1 2"/>
</g>
<g stroke="#8c8c8c" stroke-width="1" fill="none" shape-rendering="crispEdges">
<path d="M990.5 38V255M710 147.5H1270"/>
<path d="M721.5 145v5M732.5 145v5M744.5 145v5M755.5 145v5M777.5 145v5M788.5 145v5M800.5 145v5M811.5 145v5M833.5 145v5M844.5 145v5M856.5 145v5M867.5 145v5M889.5 145v5M900.5 145v5M912.5 145v5M923.5 145v5M945.5 145v5M956.5 145v5M968.5 145v5M979.5 145v5M1001.5 145v5M1012.5 145v5M1024.5 145v5M1035.5 145v5M1057.5 145v5M1068.5 145v5M1080.5 145v5M1091.5 145v5M1113.5 145v5M1124.5 145v5M1136.5 145v5M1147.5 145v5M1169.5 145v5M1180.5 145v5M1192.5 145v5M1203.5 145v5M1225.5 145v5M1236.5 145v5M1248.5 145v5M1259.5 145v5" stroke="#7a7a7a"/>
</g>
<rect x="710.5" y="38.5" width="559" height="217" fill="none" stroke="#a8a8a8" stroke-width="1" shape-rendering="crispEdges"/>
<path d="M710 153.500H1270" stroke="#bdb8ee" stroke-width="1" stroke-dasharray="4 3" shape-rendering="crispEdges"/>
<g fill="#fff" font-size="11.300" clip-path="url(#c2)">
<text x="822.500" y="62.500" text-anchor="middle">FD Ext 0x319</text><text x="1073" y="62.500" text-anchor="middle">FD 0x201</text><text x="1239.500" y="62.500" text-anchor="middle">FD 0x401</text>
<text x="734.200" y="77">ID = 0x319</text><text x="904" y="77">EOF</text><text x="963.500" y="77">ID = 0x201</text><text x="1164.500" y="77">EOF</text><text x="1242.500" y="77" text-anchor="middle">0x401</text>
</g>
<g clip-path="url(#c2)">
<path d="M710 213H731V99.5L731.8 104.5H735.7V216L736.5 213H753.6V99.5L754.4 104.5H763.8V216L764.5999999999999 213H781V99.5L781.8 104.5H791.5V216L792.3 213H803V99.5L803.8 104.5H807V216L807.8 213H814V99.5L814.8 104.5H818.8V216L819.5999999999999 213H825V99.5L825.8 104.5H829V216L829.8 213H831" fill="none" stroke="#ee3288" stroke-width="1.2" opacity=".85"/><path d="M710.3 213.0 L711.6 213.4 L712.9 213.6 L714.2 212.9 L715.5 212.7 L716.8 212.7 L718.1 213.5 L719.4 212.7 L720.7 213.1 L722.0 212.6 L723.3 213.0 L724.6 213.5 L725.9 212.6 L727.2 213.4 L728.5 213.0 L729.8 213.5 L730.8 213.0M731.3 104.7 L732.6 104.2 L733.9 105.0 L735.2 104.5 L735.5 104.5M736.0 212.4 L737.3 212.4 L738.6 213.0 L739.9 212.9 L741.2 212.8 L742.5 212.6 L743.8 212.8 L745.1 212.8 L746.4 213.4 L747.7 212.4 L749.0 213.3 L750.3 213.4 L751.6 212.5 L752.9 213.5 L753.4 213.0M753.9 104.8 L755.2 105.0 L756.5 104.2 L757.8 104.3 L759.1 104.4 L760.4 105.1 L761.7 104.6 L763.0 104.3 L763.6 104.5M764.1 212.9 L765.4 212.7 L766.7 212.5 L768.0 212.5 L769.3 213.4 L770.6 212.7 L771.9 213.5 L773.2 212.7 L774.5 212.7 L775.8 213.0 L777.1 212.6 L778.4 212.8 L779.7 213.5 L780.8 213.0M781.3 105.0 L782.6 104.9 L783.9 104.7 L785.2 105.0 L786.5 105.0 L787.8 104.6 L789.1 104.8 L790.4 104.0 L791.3 104.5M791.8 213.3 L793.1 212.9 L794.4 213.3 L795.7 213.2 L797.0 212.7 L798.3 212.5 L799.6 213.5 L800.9 212.6 L802.2 213.0 L802.8 213.0M803.3 104.3 L804.6 104.3 L805.9 104.8 L806.8 104.5M807.3 213.6 L808.6 212.7 L809.9 213.2 L811.2 212.8 L812.5 213.1 L813.8 212.9 L813.8 213.0M814.3 104.1 L815.6 104.1 L816.9 104.1 L818.2 105.0 L818.6 104.5M819.1 213.0 L820.4 212.7 L821.7 213.5 L823.0 213.6 L824.3 212.9 L824.8 213.0M825.3 104.1 L826.6 104.1 L827.9 104.0 L828.8 104.5M829.3 212.8 L830.6 212.5 L830.8 213.0" fill="none" stroke="#ee3288" stroke-width="7" stroke-linejoin="round"/>
<path d="M710 213H731V97.5L731.8 104.5H735.7V220L736.5 213H753.6V97.5L754.4 104.5H763.8V220L764.5999999999999 213H781V97.5L781.8 104.5H791.5V220L792.3 213H803V97.5L803.8 104.5H807V220L807.8 213H814V97.5L814.8 104.5H818.8V220L819.5999999999999 213H825V97.5L825.8 104.5H829V220L829.8 213H831" fill="none" stroke="none" stroke-width="1" opacity=".85"/><path d="M710.3 212.5 L711.6 212.5 L712.9 213.1 L714.2 213.8 L715.5 213.5 L716.8 212.8 L718.1 212.8 L719.4 213.0 L720.7 212.8 L722.0 212.7 L723.3 212.1 L724.6 212.6 L725.9 213.9 L727.2 212.3 L728.5 213.0 L729.8 213.3 L730.8 213.0M731.3 105.2 L732.6 103.9 L733.9 104.0 L735.2 104.0 L735.5 104.5M736.0 212.8 L737.3 212.9 L738.6 213.9 L739.9 213.7 L741.2 213.7 L742.5 212.0 L743.8 212.1 L745.1 213.4 L746.4 213.8 L747.7 212.9 L749.0 213.2 L750.3 212.0 L751.6 212.8 L752.9 213.9 L753.4 213.0M753.9 105.2 L755.2 105.2 L756.5 105.4 L757.8 104.0 L759.1 103.7 L760.4 103.8 L761.7 104.5 L763.0 104.9 L763.6 104.5M764.1 213.9 L765.4 213.4 L766.7 213.3 L768.0 213.5 L769.3 212.9 L770.6 213.1 L771.9 212.1 L773.2 213.6 L774.5 212.5 L775.8 213.8 L777.1 213.3 L778.4 212.6 L779.7 212.3 L780.8 213.0M781.3 104.0 L782.6 104.8 L783.9 104.9 L785.2 103.7 L786.5 103.6 L787.8 104.5 L789.1 104.7 L790.4 104.3 L791.3 104.5M791.8 212.4 L793.1 213.2 L794.4 212.0 L795.7 212.6 L797.0 212.9 L798.3 213.9 L799.6 213.3 L800.9 213.8 L802.2 213.0 L802.8 213.0M803.3 104.0 L804.6 104.0 L805.9 105.4 L806.8 104.5M807.3 213.4 L808.6 212.6 L809.9 212.0 L811.2 213.0 L812.5 213.3 L813.8 212.8 L813.8 213.0M814.3 104.0 L815.6 104.8 L816.9 105.4 L818.2 104.0 L818.6 104.5M819.1 212.1 L820.4 212.7 L821.7 212.8 L823.0 213.4 L824.3 212.4 L824.8 213.0M825.3 105.1 L826.6 105.0 L827.9 104.5 L828.8 104.5M829.3 212.4 L830.6 213.9 L830.8 213.0" fill="none" stroke="#f660a8" stroke-width="3" stroke-linejoin="round"/>
<path d="M886 213V254L887.500 232L889 246L890 82L891.500 104" stroke="#ee3288" stroke-width="1.300" fill="none"/>
<path d="M885.500 236L887 232L889.500 238L888 246" stroke="#ee3288" stroke-width="2.500" fill="none"/>
<path d="M891 105H952" fill="none" stroke="#ee3288" stroke-width="1" opacity=".85"/><path d="M891.3 104.8 L892.6 105.4 L893.9 104.7 L895.2 104.7 L896.5 105.3 L897.8 104.8 L899.1 105.5 L900.4 105.0 L901.7 104.6 L903.0 104.7 L904.3 104.9 L905.6 105.2 L906.9 105.5 L908.2 104.6 L909.5 104.9 L910.8 104.7 L912.1 105.6 L913.4 104.6 L914.7 104.5 L916.0 104.5 L917.3 104.9 L918.6 105.5 L919.9 105.5 L921.2 105.3 L922.5 105.6 L923.8 105.5 L925.1 104.8 L926.4 104.6 L927.7 105.5 L929.0 105.3 L930.3 104.4 L931.6 105.2 L932.9 104.9 L934.2 104.8 L935.5 104.8 L936.8 104.6 L938.1 104.4 L939.4 104.7 L940.7 104.8 L942.0 105.5 L943.3 104.5 L944.6 105.6 L945.9 104.6 L947.2 104.8 L948.5 105.4 L949.8 105.4 L951.1 104.9 L951.8 105.0" fill="none" stroke="#ee3288" stroke-width="6.5" stroke-linejoin="round"/>
<path d="M891 105H952" fill="none" stroke="none" stroke-width="1" opacity=".85"/><path d="M891.3 104.1 L892.6 104.9 L893.9 104.7 L895.2 105.8 L896.5 104.4 L897.8 104.7 L899.1 105.8 L900.4 104.1 L901.7 104.8 L903.0 105.6 L904.3 105.5 L905.6 104.1 L906.9 104.1 L908.2 104.1 L909.5 105.8 L910.8 104.5 L912.1 105.5 L913.4 105.8 L914.7 104.7 L916.0 104.5 L917.3 105.9 L918.6 105.2 L919.9 104.5 L921.2 105.4 L922.5 104.6 L923.8 104.6 L925.1 104.0 L926.4 105.5 L927.7 105.8 L929.0 105.3 L930.3 105.9 L931.6 104.0 L932.9 104.5 L934.2 105.0 L935.5 105.9 L936.8 105.9 L938.1 104.8 L939.4 104.5 L940.7 104.9 L942.0 105.0 L943.3 105.9 L944.6 104.4 L945.9 105.6 L947.2 105.5 L948.5 105.6 L949.8 105.5 L951.1 105.2 L951.8 105.0" fill="none" stroke="#f660a8" stroke-width="3" stroke-linejoin="round"/>
<path d="M951 104.5H953V212L953.8 200H961.5V90.5L962.3 104.5H967.5V212L968.3 200H995V90.5L995.8 104.5H1000V212L1000.8 200H1017V90.5L1017.8 104.5H1021.7V212L1022.5 200H1033.5V90.5L1034.3 104.5H1037.7V212L1038.5 200H1045.5V90.5L1046.3 104.5H1048.5V212L1049.3 200H1050" fill="none" stroke="#ee3288" stroke-width="1.2" opacity=".85"/><path d="M951.3 104.3 L952.6 104.3 L952.8 104.5M953.3 199.8 L954.6 200.3 L955.9 199.5 L957.2 199.6 L958.5 200.3 L959.8 199.7 L961.1 199.5 L961.3 200.0M961.8 103.9 L963.1 104.6 L964.4 104.3 L965.7 105.1 L967.0 105.0 L967.3 104.5M967.8 200.6 L969.1 199.7 L970.4 199.5 L971.7 199.5 L973.0 200.0 L974.3 200.3 L975.6 199.9 L976.9 199.7 L978.2 199.9 L979.5 200.1 L980.8 200.2 L982.1 200.3 L983.4 200.4 L984.7 200.2 L986.0 199.5 L987.3 200.4 L988.6 199.8 L989.9 200.1 L991.2 199.8 L992.5 200.3 L993.8 199.6 L994.8 200.0M995.3 104.2 L996.6 104.2 L997.9 104.1 L999.2 105.0 L999.8 104.5M1000.3 200.1 L1001.6 199.8 L1002.9 199.9 L1004.2 200.6 L1005.5 200.0 L1006.8 199.7 L1008.1 200.4 L1009.4 200.2 L1010.7 200.6 L1012.0 199.5 L1013.3 200.0 L1014.6 200.4 L1015.9 200.4 L1016.8 200.0M1017.3 105.0 L1018.6 103.9 L1019.9 104.3 L1021.2 104.0 L1021.5 104.5M1022.0 199.6 L1023.3 200.6 L1024.6 200.1 L1025.9 200.5 L1027.2 199.8 L1028.5 200.4 L1029.8 199.9 L1031.1 199.7 L1032.4 200.3 L1033.3 200.0M1033.8 105.0 L1035.1 104.0 L1036.4 104.6 L1037.5 104.5M1038.0 200.1 L1039.3 199.7 L1040.6 199.8 L1041.9 199.6 L1043.2 199.6 L1044.5 199.7 L1045.3 200.0M1045.8 104.6 L1047.1 104.7 L1048.3 104.5M1048.8 199.6 L1049.8 200.0" fill="none" stroke="#ee3288" stroke-width="6.5" stroke-linejoin="round"/>
<path d="M951 104.5H953V207L953.8 200H961.5V97.5L962.3 104.5H967.5V207L968.3 200H995V97.5L995.8 104.5H1000V207L1000.8 200H1017V97.5L1017.8 104.5H1021.7V207L1022.5 200H1033.5V97.5L1034.3 104.5H1037.7V207L1038.5 200H1045.5V97.5L1046.3 104.5H1048.5V207L1049.3 200H1050" fill="none" stroke="none" stroke-width="1" opacity=".85"/><path d="M951.3 103.5 L952.6 104.2 L952.8 104.5M953.3 200.4 L954.6 199.4 L955.9 199.6 L957.2 199.4 L958.5 200.6 L959.8 200.1 L961.1 199.1 L961.3 200.0M961.8 103.7 L963.1 104.3 L964.4 104.6 L965.7 104.8 L967.0 103.7 L967.3 104.5M967.8 199.3 L969.1 200.4 L970.4 199.8 L971.7 199.6 L973.0 199.6 L974.3 200.9 L975.6 199.6 L976.9 200.1 L978.2 199.7 L979.5 199.8 L980.8 200.7 L982.1 201.0 L983.4 199.7 L984.7 199.4 L986.0 200.5 L987.3 199.4 L988.6 199.0 L989.9 200.8 L991.2 199.8 L992.5 200.6 L993.8 199.8 L994.8 200.0M995.3 105.3 L996.6 104.4 L997.9 103.8 L999.2 103.5 L999.8 104.5M1000.3 200.1 L1001.6 200.3 L1002.9 200.8 L1004.2 199.2 L1005.5 200.2 L1006.8 199.7 L1008.1 200.0 L1009.4 199.3 L1010.7 199.6 L1012.0 200.0 L1013.3 200.9 L1014.6 199.2 L1015.9 200.0 L1016.8 200.0M1017.3 105.1 L1018.6 105.4 L1019.9 103.9 L1021.2 103.8 L1021.5 104.5M1022.0 200.9 L1023.3 201.0 L1024.6 200.0 L1025.9 199.1 L1027.2 200.9 L1028.5 199.8 L1029.8 200.8 L1031.1 200.2 L1032.4 200.6 L1033.3 200.0M1033.8 103.8 L1035.1 105.1 L1036.4 103.9 L1037.5 104.5M1038.0 199.8 L1039.3 200.7 L1040.6 200.7 L1041.9 199.4 L1043.2 199.4 L1044.5 199.8 L1045.3 200.0M1045.8 104.5 L1047.1 104.3 L1048.3 104.5M1048.8 199.2 L1049.8 200.0" fill="none" stroke="#f660a8" stroke-width="3" stroke-linejoin="round"/>
<path d="M1146 200V254L1147.500 234L1149.500 248L1151 96L1152.500 104" stroke="#ee3288" stroke-width="1.300" fill="none"/>
<path d="M1145.500 238L1147 233L1150 240L1148.500 249" stroke="#ee3288" stroke-width="2.500" fill="none"/>
<path d="M1152 105.5H1212" fill="none" stroke="#ee3288" stroke-width="1" opacity=".85"/><path d="M1152.3 105.2 L1153.6 105.8 L1154.9 106.0 L1156.2 104.9 L1157.5 105.6 L1158.8 105.8 L1160.1 104.9 L1161.4 105.9 L1162.7 105.0 L1164.0 105.6 L1165.3 105.6 L1166.6 105.7 L1167.9 105.3 L1169.2 105.4 L1170.5 105.6 L1171.8 105.4 L1173.1 105.7 L1174.4 105.4 L1175.7 105.4 L1177.0 104.9 L1178.3 105.6 L1179.6 105.5 L1180.9 105.2 L1182.2 105.8 L1183.5 105.8 L1184.8 105.4 L1186.1 105.1 L1187.4 105.5 L1188.7 105.0 L1190.0 105.1 L1191.3 105.4 L1192.6 105.0 L1193.9 105.4 L1195.2 105.5 L1196.5 104.9 L1197.8 105.7 L1199.1 105.0 L1200.4 105.8 L1201.7 105.8 L1203.0 105.5 L1204.3 105.0 L1205.6 105.5 L1206.9 105.4 L1208.2 106.0 L1209.5 105.1 L1210.8 105.9 L1211.8 105.5" fill="none" stroke="#ee3288" stroke-width="6.5" stroke-linejoin="round"/>
<path d="M1152 105.5H1212" fill="none" stroke="none" stroke-width="1" opacity=".85"/><path d="M1152.3 106.5 L1153.6 106.0 L1154.9 106.1 L1156.2 104.9 L1157.5 106.5 L1158.8 105.5 L1160.1 106.4 L1161.4 106.3 L1162.7 104.8 L1164.0 106.1 L1165.3 106.4 L1166.6 104.6 L1167.9 105.2 L1169.2 106.0 L1170.5 104.8 L1171.8 106.3 L1173.1 105.0 L1174.4 106.1 L1175.7 104.8 L1177.0 105.5 L1178.3 106.3 L1179.6 104.9 L1180.9 105.0 L1182.2 105.5 L1183.5 105.1 L1184.8 104.6 L1186.1 104.9 L1187.4 104.8 L1188.7 106.4 L1190.0 105.9 L1191.3 106.3 L1192.6 104.8 L1193.9 106.1 L1195.2 104.7 L1196.5 105.6 L1197.8 105.8 L1199.1 105.2 L1200.4 106.2 L1201.7 105.6 L1203.0 105.7 L1204.3 106.3 L1205.6 104.7 L1206.9 106.5 L1208.2 105.8 L1209.5 105.3 L1210.8 106.1 L1211.8 105.5" fill="none" stroke="#f660a8" stroke-width="3" stroke-linejoin="round"/>
<path d="M1211 104.5H1213V210L1213.8 200H1216.5V90.5L1217.3 104.5H1222V210L1222.8 200H1248V90.5L1248.8 104.5H1253.5V210L1254.3 200H1270" fill="none" stroke="#ee3288" stroke-width="1.2" opacity=".85"/><path d="M1211.3 104.2 L1212.6 105.1 L1212.8 104.5M1213.3 200.1 L1214.6 199.8 L1215.9 200.3 L1216.3 200.0M1216.8 104.4 L1218.1 104.1 L1219.4 104.8 L1220.7 104.0 L1221.8 104.5M1222.3 200.4 L1223.6 199.7 L1224.9 200.2 L1226.2 200.6 L1227.5 200.1 L1228.8 200.2 L1230.1 199.8 L1231.4 199.4 L1232.7 199.4 L1234.0 199.6 L1235.3 200.1 L1236.6 199.9 L1237.9 200.0 L1239.2 200.5 L1240.5 199.6 L1241.8 199.7 L1243.1 200.2 L1244.4 199.4 L1245.7 199.4 L1247.0 199.8 L1247.8 200.0M1248.3 104.0 L1249.6 104.3 L1250.9 104.2 L1252.2 104.6 L1253.3 104.5M1253.8 200.1 L1255.1 199.6 L1256.4 200.1 L1257.7 200.0 L1259.0 199.6 L1260.3 200.5 L1261.6 199.7 L1262.9 199.6 L1264.2 199.5 L1265.5 200.2 L1266.8 200.4 L1268.1 200.3 L1269.4 199.9 L1269.8 200.0" fill="none" stroke="#ee3288" stroke-width="6.5" stroke-linejoin="round"/>
<path d="M1211 104.5H1213V207L1213.8 200H1216.5V97.5L1217.3 104.5H1222V207L1222.8 200H1248V97.5L1248.8 104.5H1253.5V207L1254.3 200H1270" fill="none" stroke="none" stroke-width="1" opacity=".85"/><path d="M1211.3 104.0 L1212.6 103.5 L1212.8 104.5M1213.3 200.3 L1214.6 200.1 L1215.9 199.7 L1216.3 200.0M1216.8 104.8 L1218.1 104.4 L1219.4 105.4 L1220.7 105.0 L1221.8 104.5M1222.3 199.5 L1223.6 200.8 L1224.9 199.1 L1226.2 200.1 L1227.5 199.8 L1228.8 199.5 L1230.1 199.1 L1231.4 200.6 L1232.7 199.0 L1234.0 200.1 L1235.3 200.9 L1236.6 199.3 L1237.9 199.4 L1239.2 200.2 L1240.5 200.0 L1241.8 200.3 L1243.1 200.6 L1244.4 199.3 L1245.7 199.6 L1247.0 199.6 L1247.8 200.0M1248.3 103.6 L1249.6 105.3 L1250.9 105.1 L1252.2 104.9 L1253.3 104.5M1253.8 199.0 L1255.1 200.7 L1256.4 200.5 L1257.7 199.9 L1259.0 200.5 L1260.3 199.9 L1261.6 199.5 L1262.9 199.2 L1264.2 199.5 L1265.5 199.1 L1266.8 199.7 L1268.1 200.5 L1269.4 200.4 L1269.8 200.0" fill="none" stroke="#f660a8" stroke-width="3" stroke-linejoin="round"/>
</g>
<text x="698" y="98.500" font-size="9" font-weight="bold" fill="#e5326f">Z2</text><path d="M700 102h10.500" stroke="#e5326f" stroke-width="1.500"/>
</g>
<g id="p3">
<text x="66" y="302.0" text-anchor="end" fill="#f3f0d2">2.268 V</text><text x="66" y="350.2" text-anchor="end" fill="#f3f0d2">468 mV</text><text x="66" y="404.0" text-anchor="end" fill="#f3f0d2">-1.332 V</text><text x="66" y="458.2" text-anchor="end" fill="#f3f0d2">-3.131 V</text><text x="66" y="504.5" text-anchor="end" fill="#f3f0d2">-4.931 V</text>
<text x="70" y="521" text-anchor="start" fill="#f3f0d2">-167 ns</text>
<text x="182" y="521" text-anchor="middle" fill="#f3f0d2">0 ns</text>
<text x="294" y="521" text-anchor="middle" fill="#f3f0d2">167 ns</text>
<text x="406" y="521" text-anchor="middle" fill="#f3f0d2">334 ns</text>
<text x="518" y="521" text-anchor="middle" fill="#f3f0d2">501 ns</text>
<text x="631" y="521" text-anchor="end" fill="#f3f0d2">668 ns</text>
<g fill="#555"><rect x="80.7" y="329.2" width="1" height="1"/><rect x="91.9" y="329.2" width="1" height="1"/><rect x="103.1" y="329.2" width="1" height="1"/><rect x="114.3" y="329.2" width="1" height="1"/><rect x="125.5" y="329.2" width="1" height="1"/><rect x="136.7" y="329.2" width="1" height="1"/><rect x="147.9" y="329.2" width="1" height="1"/><rect x="159.1" y="329.2" width="1" height="1"/><rect x="170.3" y="329.2" width="1" height="1"/><rect x="181.5" y="329.2" width="1" height="1"/><rect x="192.7" y="329.2" width="1" height="1"/><rect x="203.9" y="329.2" width="1" height="1"/><rect x="215.1" y="329.2" width="1" height="1"/><rect x="226.3" y="329.2" width="1" height="1"/><rect x="237.5" y="329.2" width="1" height="1"/><rect x="248.7" y="329.2" width="1" height="1"/><rect x="259.9" y="329.2" width="1" height="1"/><rect x="271.1" y="329.2" width="1" height="1"/><rect x="282.3" y="329.2" width="1" height="1"/><rect x="293.5" y="329.2" width="1" height="1"/><rect x="304.7" y="329.2" width="1" height="1"/><rect x="315.9" y="329.2" width="1" height="1"/><rect x="327.1" y="329.2" width="1" height="1"/><rect x="338.3" y="329.2" width="1" height="1"/><rect x="349.5" y="329.2" width="1" height="1"/><rect x="360.7" y="329.2" width="1" height="1"/><rect x="371.9" y="329.2" width="1" height="1"/><rect x="383.1" y="329.2" width="1" height="1"/><rect x="394.3" y="329.2" width="1" height="1"/><rect x="405.5" y="329.2" width="1" height="1"/><rect x="416.7" y="329.2" width="1" height="1"/><rect x="427.9" y="329.2" width="1" height="1"/><rect x="439.1" y="329.2" width="1" height="1"/><rect x="450.3" y="329.2" width="1" height="1"/><rect x="461.5" y="329.2" width="1" height="1"/><rect x="472.7" y="329.2" width="1" height="1"/><rect x="483.9" y="329.2" width="1" height="1"/><rect x="495.1" y="329.2" width="1" height="1"/><rect x="506.3" y="329.2" width="1" height="1"/><rect x="517.5" y="329.2" width="1" height="1"/><rect x="528.7" y="329.2" width="1" height="1"/><rect x="539.9" y="329.2" width="1" height="1"/><rect x="551.1" y="329.2" width="1" height="1"/><rect x="562.3" y="329.2" width="1" height="1"/><rect x="573.5" y="329.2" width="1" height="1"/><rect x="584.7" y="329.2" width="1" height="1"/><rect x="595.9" y="329.2" width="1" height="1"/><rect x="607.1" y="329.2" width="1" height="1"/><rect x="618.3" y="329.2" width="1" height="1"/><rect x="80.7" y="464.8" width="1" height="1"/><rect x="91.9" y="464.8" width="1" height="1"/><rect x="103.1" y="464.8" width="1" height="1"/><rect x="114.3" y="464.8" width="1" height="1"/><rect x="125.5" y="464.8" width="1" height="1"/><rect x="136.7" y="464.8" width="1" height="1"/><rect x="147.9" y="464.8" width="1" height="1"/><rect x="159.1" y="464.8" width="1" height="1"/><rect x="170.3" y="464.8" width="1" height="1"/><rect x="181.5" y="464.8" width="1" height="1"/><rect x="192.7" y="464.8" width="1" height="1"/><rect x="203.9" y="464.8" width="1" height="1"/><rect x="215.1" y="464.8" width="1" height="1"/><rect x="226.3" y="464.8" width="1" height="1"/><rect x="237.5" y="464.8" width="1" height="1"/><rect x="248.7" y="464.8" width="1" height="1"/><rect x="259.9" y="464.8" width="1" height="1"/><rect x="271.1" y="464.8" width="1" height="1"/><rect x="282.3" y="464.8" width="1" height="1"/><rect x="293.5" y="464.8" width="1" height="1"/><rect x="304.7" y="464.8" width="1" height="1"/><rect x="315.9" y="464.8" width="1" height="1"/><rect x="327.1" y="464.8" width="1" height="1"/><rect x="338.3" y="464.8" width="1" height="1"/><rect x="349.5" y="464.8" width="1" height="1"/><rect x="360.7" y="464.8" width="1" height="1"/><rect x="371.9" y="464.8" width="1" height="1"/><rect x="383.1" y="464.8" width="1" height="1"/><rect x="394.3" y="464.8" width="1" height="1"/><rect x="405.5" y="464.8" width="1" height="1"/><rect x="416.7" y="464.8" width="1" height="1"/><rect x="427.9" y="464.8" width="1" height="1"/><rect x="439.1" y="464.8" width="1" height="1"/><rect x="450.3" y="464.8" width="1" height="1"/><rect x="461.5" y="464.8" width="1" height="1"/><rect x="472.7" y="464.8" width="1" height="1"/><rect x="483.9" y="464.8" width="1" height="1"/><rect x="495.1" y="464.8" width="1" height="1"/><rect x="506.3" y="464.8" width="1" height="1"/><rect x="517.5" y="464.8" width="1" height="1"/><rect x="528.7" y="464.8" width="1" height="1"/><rect x="539.9" y="464.8" width="1" height="1"/><rect x="551.1" y="464.8" width="1" height="1"/><rect x="562.3" y="464.8" width="1" height="1"/><rect x="573.5" y="464.8" width="1" height="1"/><rect x="584.7" y="464.8" width="1" height="1"/><rect x="595.9" y="464.8" width="1" height="1"/><rect x="607.1" y="464.8" width="1" height="1"/><rect x="618.3" y="464.8" width="1" height="1"/></g>
<g stroke="#9a9a9a" stroke-width="1" fill="none" shape-rendering="crispEdges">
<path d="M126.5 289V506" stroke-dasharray="1 2"/>
<path d="M182.5 289V506" stroke-dasharray="1 2"/>
<path d="M238.5 289V506" stroke-dasharray="1 2"/>
<path d="M294.5 289V506" stroke-dasharray="1 2"/>
<path d="M406.5 289V506" stroke-dasharray="1 2"/>
<path d="M462.5 289V506" stroke-dasharray="1 2"/>
<path d="M518.5 289V506" stroke-dasharray="1 2"/>
<path d="M574.5 289V506" stroke-dasharray="1 2"/>
<path d="M70 316.5H630" stroke-dasharray="1 2"/>
<path d="M70 343.5H630" stroke-dasharray="1 2"/>
<path d="M70 370.5H630" stroke-dasharray="1 2"/>
<path d="M70 425.5H630" stroke-dasharray="1 2"/>
<path d="M70 452.5H630" stroke-dasharray="1 2"/>
<path d="M70 479.5H630" stroke-dasharray="1 2"/>
</g>
<g stroke="#8c8c8c" stroke-width="1" fill="none" shape-rendering="crispEdges">
<path d="M350.5 289V506M70 398.5H630"/>
<path d="M81.5 396v5M92.5 396v5M104.5 396v5M115.5 396v5M137.5 396v5M148.5 396v5M160.5 396v5M171.5 396v5M193.5 396v5M204.5 396v5M216.5 396v5M227.5 396v5M249.5 396v5M260.5 396v5M272.5 396v5M283.5 396v5M305.5 396v5M316.5 396v5M328.5 396v5M339.5 396v5M361.5 396v5M372.5 396v5M384.5 396v5M395.5 396v5M417.5 396v5M428.5 396v5M440.5 396v5M451.5 396v5M473.5 396v5M484.5 396v5M496.5 396v5M507.5 396v5M529.5 396v5M540.5 396v5M552.5 396v5M563.5 396v5M585.5 396v5M596.5 396v5M608.5 396v5M619.5 396v5" stroke="#7a7a7a"/>
</g>
<rect x="70.5" y="289.5" width="559" height="217" fill="none" stroke="#a8a8a8" stroke-width="1" shape-rendering="crispEdges"/>
</g>
<g id="p4">
<text x="706" y="302.0" text-anchor="end" fill="#f4f4f4">1.466 V</text><text x="706" y="350.2" text-anchor="end" fill="#f4f4f4">226 mV</text><text x="706" y="404.0" text-anchor="end" fill="#f4f4f4">-1.014 V</text><text x="706" y="458.2" text-anchor="end" fill="#f4f4f4">-2.254 V</text><text x="706" y="504.5" text-anchor="end" fill="#f4f4f4">-3.494 V</text>
<text x="712" y="521" text-anchor="start" fill="#f4f4f4">-50.1 ns</text>
<text x="822" y="521" text-anchor="middle" fill="#f4f4f4">-4 ps</text>
<text x="934" y="521" text-anchor="middle" fill="#f4f4f4">50.1 ns</text>
<text x="1046" y="521" text-anchor="middle" fill="#f4f4f4">100.2 ns</text>
<text x="1158" y="521" text-anchor="middle" fill="#f4f4f4">150.3 ns</text>
<text x="1271" y="521" text-anchor="end" fill="#f4f4f4">200.4 ns</text>
<g fill="#555"><rect x="720.7" y="329.2" width="1" height="1"/><rect x="731.9" y="329.2" width="1" height="1"/><rect x="743.1" y="329.2" width="1" height="1"/><rect x="754.3" y="329.2" width="1" height="1"/><rect x="765.5" y="329.2" width="1" height="1"/><rect x="776.7" y="329.2" width="1" height="1"/><rect x="787.9" y="329.2" width="1" height="1"/><rect x="799.1" y="329.2" width="1" height="1"/><rect x="810.3" y="329.2" width="1" height="1"/><rect x="821.5" y="329.2" width="1" height="1"/><rect x="832.7" y="329.2" width="1" height="1"/><rect x="843.9" y="329.2" width="1" height="1"/><rect x="855.1" y="329.2" width="1" height="1"/><rect x="866.3" y="329.2" width="1" height="1"/><rect x="877.5" y="329.2" width="1" height="1"/><rect x="888.7" y="329.2" width="1" height="1"/><rect x="899.9" y="329.2" width="1" height="1"/><rect x="911.1" y="329.2" width="1" height="1"/><rect x="922.3" y="329.2" width="1" height="1"/><rect x="933.5" y="329.2" width="1" height="1"/><rect x="944.7" y="329.2" width="1" height="1"/><rect x="955.9" y="329.2" width="1" height="1"/><rect x="967.1" y="329.2" width="1" height="1"/><rect x="978.3" y="329.2" width="1" height="1"/><rect x="989.5" y="329.2" width="1" height="1"/><rect x="1000.7" y="329.2" width="1" height="1"/><rect x="1011.9" y="329.2" width="1" height="1"/><rect x="1023.1" y="329.2" width="1" height="1"/><rect x="1034.3" y="329.2" width="1" height="1"/><rect x="1045.5" y="329.2" width="1" height="1"/><rect x="1056.7" y="329.2" width="1" height="1"/><rect x="1067.9" y="329.2" width="1" height="1"/><rect x="1079.1" y="329.2" width="1" height="1"/><rect x="1090.3" y="329.2" width="1" height="1"/><rect x="1101.5" y="329.2" width="1" height="1"/><rect x="1112.7" y="329.2" width="1" height="1"/><rect x="1123.9" y="329.2" width="1" height="1"/><rect x="1135.1" y="329.2" width="1" height="1"/><rect x="1146.3" y="329.2" width="1" height="1"/><rect x="1157.5" y="329.2" width="1" height="1"/><rect x="1168.7" y="329.2" width="1" height="1"/><rect x="1179.9" y="329.2" width="1" height="1"/><rect x="1191.1" y="329.2" width="1" height="1"/><rect x="1202.3" y="329.2" width="1" height="1"/><rect x="1213.5" y="329.2" width="1" height="1"/><rect x="1224.7" y="329.2" width="1" height="1"/><rect x="1235.9" y="329.2" width="1" height="1"/><rect x="1247.1" y="329.2" width="1" height="1"/><rect x="1258.3" y="329.2" width="1" height="1"/><rect x="720.7" y="464.8" width="1" height="1"/><rect x="731.9" y="464.8" width="1" height="1"/><rect x="743.1" y="464.8" width="1" height="1"/><rect x="754.3" y="464.8" width="1" height="1"/><rect x="765.5" y="464.8" width="1" height="1"/><rect x="776.7" y="464.8" width="1" height="1"/><rect x="787.9" y="464.8" width="1" height="1"/><rect x="799.1" y="464.8" width="1" height="1"/><rect x="810.3" y="464.8" width="1" height="1"/><rect x="821.5" y="464.8" width="1" height="1"/><rect x="832.7" y="464.8" width="1" height="1"/><rect x="843.9" y="464.8" width="1" height="1"/><rect x="855.1" y="464.8" width="1" height="1"/><rect x="866.3" y="464.8" width="1" height="1"/><rect x="877.5" y="464.8" width="1" height="1"/><rect x="888.7" y="464.8" width="1" height="1"/><rect x="899.9" y="464.8" width="1" height="1"/><rect x="911.1" y="464.8" width="1" height="1"/><rect x="922.3" y="464.8" width="1" height="1"/><rect x="933.5" y="464.8" width="1" height="1"/><rect x="944.7" y="464.8" width="1" height="1"/><rect x="955.9" y="464.8" width="1" height="1"/><rect x="967.1" y="464.8" width="1" height="1"/><rect x="978.3" y="464.8" width="1" height="1"/><rect x="989.5" y="464.8" width="1" height="1"/><rect x="1000.7" y="464.8" width="1" height="1"/><rect x="1011.9" y="464.8" width="1" height="1"/><rect x="1023.1" y="464.8" width="1" height="1"/><rect x="1034.3" y="464.8" width="1" height="1"/><rect x="1045.5" y="464.8" width="1" height="1"/><rect x="1056.7" y="464.8" width="1" height="1"/><rect x="1067.9" y="464.8" width="1" height="1"/><rect x="1079.1" y="464.8" width="1" height="1"/><rect x="1090.3" y="464.8" width="1" height="1"/><rect x="1101.5" y="464.8" width="1" height="1"/><rect x="1112.7" y="464.8" width="1" height="1"/><rect x="1123.9" y="464.8" width="1" height="1"/><rect x="1135.1" y="464.8" width="1" height="1"/><rect x="1146.3" y="464.8" width="1" height="1"/><rect x="1157.5" y="464.8" width="1" height="1"/><rect x="1168.7" y="464.8" width="1" height="1"/><rect x="1179.9" y="464.8" width="1" height="1"/><rect x="1191.1" y="464.8" width="1" height="1"/><rect x="1202.3" y="464.8" width="1" height="1"/><rect x="1213.5" y="464.8" width="1" height="1"/><rect x="1224.7" y="464.8" width="1" height="1"/><rect x="1235.9" y="464.8" width="1" height="1"/><rect x="1247.1" y="464.8" width="1" height="1"/><rect x="1258.3" y="464.8" width="1" height="1"/></g>
<g stroke="#9a9a9a" stroke-width="1" fill="none" shape-rendering="crispEdges">
<path d="M766.5 289V506" stroke-dasharray="1 2"/>
<path d="M822.5 289V506" stroke-dasharray="1 2"/>
<path d="M878.5 289V506" stroke-dasharray="1 2"/>
<path d="M934.5 289V506" stroke-dasharray="1 2"/>
<path d="M1046.5 289V506" stroke-dasharray="1 2"/>
<path d="M1102.5 289V506" stroke-dasharray="1 2"/>
<path d="M1158.5 289V506" stroke-dasharray="1 2"/>
<path d="M1214.5 289V506" stroke-dasharray="1 2"/>
<path d="M710 316.5H1270" stroke-dasharray="1 2"/>
<path d="M710 343.5H1270" stroke-dasharray="1 2"/>
<path d="M710 370.5H1270" stroke-dasharray="1 2"/>
<path d="M710 425.5H1270" stroke-dasharray="1 2"/>
<path d="M710 452.5H1270" stroke-dasharray="1 2"/>
<path d="M710 479.5H1270" stroke-dasharray="1 2"/>
</g>
<g stroke="#8c8c8c" stroke-width="1" fill="none" shape-rendering="crispEdges">
<path d="M990.5 289V506M710 398.5H1270"/>
<path d="M721.5 396v5M732.5 396v5M744.5 396v5M755.5 396v5M777.5 396v5M788.5 396v5M800.5 396v5M811.5 396v5M833.5 396v5M844.5 396v5M856.5 396v5M867.5 396v5M889.5 396v5M900.5 396v5M912.5 396v5M923.5 396v5M945.5 396v5M956.5 396v5M968.5 396v5M979.5 396v5M1001.5 396v5M1012.5 396v5M1024.5 396v5M1035.5 396v5M1057.5 396v5M1068.5 396v5M1080.5 396v5M1091.5 396v5M1113.5 396v5M1124.5 396v5M1136.5 396v5M1147.5 396v5M1169.5 396v5M1180.5 396v5M1192.5 396v5M1203.5 396v5M1225.5 396v5M1236.5 396v5M1248.5 396v5M1259.5 396v5" stroke="#7a7a7a"/>
</g>
<rect x="710.5" y="289.5" width="559" height="217" fill="none" stroke="#a8a8a8" stroke-width="1" shape-rendering="crispEdges"/>
</g>
<clipPath id="c3"><rect x="71" y="290" width="559" height="216"/></clipPath>
<g clip-path="url(#c3)" fill="none" stroke-linecap="round">
<path d="M105.0 359.4C109.0 359.5 123.4 359.3 129.0 359.9C134.7 360.6 134.0 359.3 139.0 363.4C144.0 367.5 152.2 377.4 159.0 384.4C165.9 391.4 174.7 400.1 180.0 405.4C185.4 410.8 187.5 413.9 191.0 416.4C194.5 418.9 194.4 419.0 201.0 420.4C207.7 421.8 222.7 423.4 231.0 424.8C239.4 426.2 242.7 428.0 251.0 428.7C259.4 429.5 271.9 428.9 281.0 429.2C290.2 429.5 296.2 430.2 306.0 430.4C315.9 430.7 330.9 430.2 340.0 430.8C349.2 431.4 357.5 433.4 361.0 433.9" stroke="#a39c2c" stroke-width="1.300" opacity=".23"/>
<path d="M115.5 359.7C119.5 359.8 133.8 359.5 139.5 360.2C145.1 360.8 144.5 359.6 149.5 363.7C154.5 367.8 162.6 377.7 169.5 384.7C176.3 391.7 185.1 400.3 190.5 405.7C195.8 411.0 198.0 414.2 201.5 416.7C205.0 419.2 204.8 419.4 211.5 420.7C218.1 421.9 233.1 422.8 241.5 424.2C249.8 425.6 253.1 428.1 261.5 429.0C269.8 429.9 282.3 429.2 291.5 429.5C300.6 429.8 306.6 430.4 316.5 430.7C326.3 430.9 341.3 430.5 350.5 431.1C359.6 431.7 368.0 433.7 371.5 434.2" stroke="#a39c2c" stroke-width="1.300" opacity=".23"/>
<path d="M116.1 360.1C120.1 360.2 134.4 359.9 140.1 360.6C145.8 361.3 145.1 360.0 150.1 364.1C155.1 368.2 163.3 378.1 170.1 385.1C176.9 392.1 185.8 400.8 191.1 406.1C196.4 411.4 198.6 414.6 202.1 417.1C205.6 419.6 205.4 419.8 212.1 421.1C218.8 422.4 233.8 423.5 242.1 424.8C250.4 426.2 253.8 428.5 262.1 429.4C270.4 430.2 282.9 429.6 292.1 429.9C301.3 430.2 307.3 430.8 317.1 431.1C326.9 431.4 341.9 430.9 351.1 431.5C360.3 432.1 368.6 434.1 372.1 434.6" stroke="#a39c2c" stroke-width="1.300" opacity=".23"/>
<path d="M120.1 359.1C124.1 359.2 138.5 358.9 144.1 359.6C149.8 360.3 149.1 359.0 154.1 363.1C159.1 367.2 167.3 377.1 174.1 384.1C181.0 391.1 189.8 399.8 195.1 405.1C200.5 410.4 202.6 413.6 206.1 416.1C209.6 418.6 209.5 419.0 216.1 420.1C222.8 421.2 237.8 421.4 246.1 422.8C254.5 424.2 257.8 427.4 266.1 428.4C274.5 429.4 287.0 428.6 296.1 428.9C305.3 429.2 311.3 429.8 321.1 430.1C331.0 430.4 346.0 429.9 355.1 430.5C364.3 431.1 372.6 433.1 376.1 433.6" stroke="#a39c2c" stroke-width="1.300" opacity=".23"/>
<path d="M123.0 358.6C127.0 358.7 141.3 358.4 147.0 359.1C152.6 359.8 152.0 358.5 157.0 362.6C162.0 366.7 170.1 376.6 177.0 383.6C183.8 390.6 192.6 399.3 198.0 404.6C203.3 409.9 205.5 413.1 209.0 415.6C212.5 418.1 212.3 418.3 219.0 419.6C225.6 420.9 240.6 422.1 249.0 423.5C257.3 424.9 260.6 427.1 269.0 427.9C277.3 428.7 289.8 428.1 299.0 428.4C308.1 428.7 314.1 429.3 324.0 429.6C333.8 429.9 348.8 429.4 358.0 430.0C367.1 430.6 375.5 432.6 379.0 433.1" stroke="#a39c2c" stroke-width="1.300" opacity=".23"/>
<path d="M119.4 360.4C123.4 360.5 137.7 360.3 143.4 360.9C149.1 361.6 148.4 360.3 153.4 364.4C158.4 368.5 166.6 378.4 173.4 385.4C180.2 392.4 189.1 401.1 194.4 406.4C199.7 411.8 201.9 414.9 205.4 417.4C208.9 419.9 208.7 420.0 215.4 421.4C222.1 422.8 237.1 424.5 245.4 425.9C253.7 427.3 257.1 429.0 265.4 429.7C273.7 430.5 286.2 429.9 295.4 430.2C304.6 430.5 310.6 431.2 320.4 431.4C330.2 431.7 345.2 431.2 354.4 431.8C363.6 432.4 371.9 434.4 375.4 434.9" stroke="#a39c2c" stroke-width="1.300" opacity=".23"/>
<path d="M107.9 358.5C111.9 358.6 126.2 358.4 131.9 359.0C137.6 359.7 136.9 358.4 141.9 362.5C146.9 366.6 155.1 376.5 161.9 383.5C168.7 390.5 177.6 399.2 182.9 404.5C188.2 409.9 190.4 413.0 193.9 415.5C197.4 418.0 197.2 418.4 203.9 419.5C210.6 420.7 225.6 421.0 233.9 422.3C242.2 423.7 245.6 426.8 253.9 427.8C262.2 428.8 274.7 428.0 283.9 428.3C293.1 428.6 299.1 429.3 308.9 429.5C318.7 429.8 333.7 429.3 342.9 429.9C352.1 430.5 360.4 432.5 363.9 433.0" stroke="#a39c2c" stroke-width="1.300" opacity=".23"/>
<path d="M105.6 358.6C109.6 358.7 123.9 358.5 129.6 359.1C135.3 359.8 134.6 358.5 139.6 362.6C144.6 366.7 152.8 376.6 159.6 383.6C166.4 390.6 175.3 399.3 180.6 404.6C185.9 410.0 188.1 413.1 191.6 415.6C195.1 418.1 194.9 418.4 201.6 419.6C208.3 420.9 223.3 421.8 231.6 423.2C239.9 424.6 243.3 427.0 251.6 427.9C259.9 428.8 272.4 428.1 281.6 428.4C290.8 428.7 296.8 429.4 306.6 429.6C316.4 429.9 331.4 429.4 340.6 430.0C349.8 430.6 358.1 432.6 361.6 433.1" stroke="#a39c2c" stroke-width="1.300" opacity=".23"/>
<path d="M114.8 359.4C118.8 359.5 133.1 359.3 138.8 359.9C144.4 360.6 143.8 359.3 148.8 363.4C153.8 367.5 161.9 377.4 168.8 384.4C175.6 391.4 184.4 400.1 189.8 405.4C195.1 410.8 197.3 413.9 200.8 416.4C204.3 418.9 204.1 419.3 210.8 420.4C217.4 421.5 232.4 421.6 240.8 423.0C249.1 424.4 252.4 427.7 260.8 428.7C269.1 429.8 281.6 428.9 290.8 429.2C299.9 429.5 305.9 430.2 315.8 430.4C325.6 430.7 340.6 430.2 349.8 430.8C358.9 431.4 367.3 433.4 370.8 433.9" stroke="#a39c2c" stroke-width="1.300" opacity=".23"/>
<path d="M117.5 360.2C121.5 360.3 135.8 360.0 141.5 360.7C147.2 361.4 146.5 360.1 151.5 364.2C156.5 368.3 164.7 378.2 171.5 385.2C178.3 392.2 187.2 400.9 192.5 406.2C197.8 411.5 200.0 414.7 203.5 417.2C207.0 419.7 206.8 420.0 213.5 421.2C220.2 422.4 235.2 423.2 243.5 424.6C251.8 425.9 255.2 428.6 263.5 429.5C271.8 430.4 284.3 429.7 293.5 430.0C302.7 430.3 308.7 430.9 318.5 431.2C328.3 431.5 343.3 431.0 352.5 431.6C361.7 432.2 370.0 434.2 373.5 434.7" stroke="#a39c2c" stroke-width="1.300" opacity=".23"/>
<path d="M103.8 359.8C107.8 359.9 122.1 359.7 127.8 360.3C133.4 361.0 132.8 359.7 137.8 363.8C142.8 367.9 150.9 377.8 157.8 384.8C164.6 391.8 173.4 400.5 178.8 405.8C184.1 411.2 186.3 414.3 189.8 416.8C193.3 419.3 193.1 419.6 199.8 420.8C206.4 422.1 221.4 422.9 229.8 424.3C238.1 425.7 241.4 428.2 249.8 429.1C258.1 430.0 270.6 429.3 279.8 429.6C288.9 429.9 294.9 430.6 304.8 430.8C314.6 431.1 329.6 430.6 338.8 431.2C347.9 431.8 356.3 433.8 359.8 434.3" stroke="#a39c2c" stroke-width="1.300" opacity=".23"/>
<path d="M111.9 359.1C115.9 359.1 130.2 358.9 135.9 359.6C141.6 360.2 140.9 359.0 145.9 363.1C150.9 367.1 159.1 377.1 165.9 384.1C172.7 391.1 181.6 399.7 186.9 405.1C192.2 410.4 194.4 413.6 197.9 416.1C201.4 418.6 201.2 418.8 207.9 420.1C214.6 421.3 229.6 422.1 237.9 423.5C246.2 424.9 249.6 427.5 257.9 428.4C266.2 429.3 278.7 428.6 287.9 428.9C297.1 429.1 303.1 429.8 312.9 430.1C322.7 430.3 337.7 429.9 346.9 430.5C356.1 431.0 364.4 433.0 367.9 433.6" stroke="#a39c2c" stroke-width="1.300" opacity=".23"/>
<path d="M134.5 359.9C138.5 360.0 152.8 359.7 158.5 360.4C164.1 361.1 163.5 359.8 168.5 363.9C173.5 368.0 181.6 377.9 188.5 384.9C195.3 391.9 204.1 400.6 209.5 405.9C214.8 411.2 217.0 414.4 220.5 416.9C224.0 419.4 223.8 419.6 230.5 420.9C237.1 422.3 252.1 423.7 260.5 425.1C268.8 426.5 272.1 428.4 280.5 429.2C288.8 430.0 301.3 429.4 310.5 429.7C319.6 430.0 325.6 430.6 335.5 430.9C345.3 431.2 360.3 430.7 369.5 431.3C378.6 431.9 387.0 433.9 390.5 434.4" stroke="#a39c2c" stroke-width="1.300" opacity=".23"/>
<path d="M112.7 359.0C116.7 359.0 131.0 358.8 136.7 359.5C142.4 360.1 141.7 358.9 146.7 363.0C151.7 367.0 159.9 377.0 166.7 384.0C173.5 391.0 182.4 399.6 187.7 405.0C193.0 410.3 195.2 413.5 198.7 416.0C202.2 418.5 202.0 418.8 208.7 420.0C215.4 421.1 230.4 421.7 238.7 423.1C247.0 424.5 250.4 427.3 258.7 428.3C267.0 429.2 279.5 428.5 288.7 428.8C297.9 429.0 303.9 429.7 313.7 430.0C323.5 430.2 338.5 429.8 347.7 430.4C356.9 430.9 365.2 432.9 368.7 433.5" stroke="#a39c2c" stroke-width="1.300" opacity=".23"/>
<path d="M112.4 359.3C116.4 359.4 130.7 359.1 136.4 359.8C142.1 360.5 141.4 359.2 146.4 363.3C151.4 367.4 159.6 377.3 166.4 384.3C173.2 391.3 182.1 400.0 187.4 405.3C192.7 410.6 194.9 413.8 198.4 416.3C201.9 418.8 201.7 419.0 208.4 420.3C215.1 421.6 230.1 423.0 238.4 424.3C246.7 425.7 250.1 427.8 258.4 428.6C266.7 429.4 279.2 428.8 288.4 429.1C297.6 429.4 303.6 430.0 313.4 430.3C323.2 430.6 338.2 430.1 347.4 430.7C356.6 431.3 364.9 433.3 368.4 433.8" stroke="#a39c2c" stroke-width="1.300" opacity=".23"/>
<path d="M115.4 359.3C119.4 359.4 133.7 359.1 139.4 359.8C145.1 360.4 144.4 359.2 149.4 363.3C154.4 367.4 162.6 377.3 169.4 384.3C176.2 391.3 185.1 399.9 190.4 405.3C195.7 410.6 197.9 413.8 201.4 416.3C204.9 418.8 204.7 418.9 211.4 420.3C218.1 421.6 233.1 423.1 241.4 424.5C249.7 425.8 253.1 427.8 261.4 428.6C269.7 429.3 282.2 428.8 291.4 429.1C300.6 429.4 306.6 430.0 316.4 430.3C326.2 430.5 341.2 430.1 350.4 430.7C359.6 431.3 367.9 433.3 371.4 433.8" stroke="#a39c2c" stroke-width="1.300" opacity=".23"/>
<path d="M125.2 358.9C129.2 359.0 143.5 358.8 149.2 359.4C154.8 360.1 154.2 358.8 159.2 362.9C164.2 367.0 172.3 376.9 179.2 383.9C186.0 390.9 194.8 399.6 200.2 404.9C205.5 410.3 207.7 413.4 211.2 415.9C214.7 418.4 214.5 418.8 221.2 419.9C227.8 421.0 242.8 421.0 251.2 422.4C259.5 423.8 262.8 427.2 271.2 428.2C279.5 429.3 292.0 428.4 301.2 428.7C310.3 429.0 316.3 429.7 326.2 429.9C336.0 430.2 351.0 429.7 360.2 430.3C369.3 430.9 377.7 432.9 381.2 433.4" stroke="#a39c2c" stroke-width="1.300" opacity=".23"/>
<path d="M109.7 359.4C113.7 359.5 128.0 359.3 133.7 359.9C139.4 360.6 138.7 359.4 143.7 363.4C148.7 367.5 156.9 377.4 163.7 384.4C170.5 391.4 179.4 400.1 184.7 405.4C190.0 410.8 192.2 413.9 195.7 416.4C199.2 418.9 199.0 419.1 205.7 420.4C212.4 421.8 227.4 423.4 235.7 424.8C244.0 426.1 247.4 428.0 255.7 428.7C264.0 429.5 276.5 429.0 285.7 429.2C294.9 429.5 300.9 430.2 310.7 430.4C320.5 430.7 335.5 430.3 344.7 430.8C353.9 431.4 362.2 433.4 365.7 433.9" stroke="#a39c2c" stroke-width="1.300" opacity=".23"/>
<path d="M119.5 359.8C123.5 359.8 137.8 359.6 143.5 360.3C149.2 360.9 148.5 359.7 153.5 363.8C158.5 367.8 166.7 377.8 173.5 384.8C180.3 391.8 189.2 400.4 194.5 405.8C199.8 411.1 202.0 414.3 205.5 416.8C209.0 419.3 208.8 419.7 215.5 420.8C222.2 421.9 237.2 422.0 245.5 423.4C253.8 424.8 257.2 428.0 265.5 429.1C273.8 430.1 286.3 429.3 295.5 429.6C304.7 429.8 310.7 430.5 320.5 430.8C330.3 431.0 345.3 430.6 354.5 431.2C363.7 431.7 372.0 433.7 375.5 434.3" stroke="#a39c2c" stroke-width="1.300" opacity=".23"/>
<path d="M112.2 359.0C116.2 359.1 130.5 358.9 136.2 359.5C141.9 360.2 141.2 359.0 146.2 363.0C151.2 367.1 159.4 377.0 166.2 384.0C173.0 391.0 181.9 399.7 187.2 405.0C192.5 410.4 194.7 413.5 198.2 416.0C201.7 418.5 201.5 418.7 208.2 420.0C214.9 421.4 229.9 422.7 238.2 424.1C246.5 425.5 249.9 427.5 258.2 428.3C266.5 429.1 279.0 428.6 288.2 428.8C297.4 429.1 303.4 429.8 313.2 430.0C323.0 430.3 338.0 429.9 347.2 430.4C356.4 431.0 364.7 433.0 368.2 433.5" stroke="#a39c2c" stroke-width="1.300" opacity=".23"/>
<path d="M118.0 360.0C122.0 360.1 136.3 359.8 142.0 360.5C147.7 361.2 147.0 359.9 152.0 364.0C157.0 368.1 165.2 378.0 172.0 385.0C178.8 392.0 187.7 400.7 193.0 406.0C198.3 411.3 200.5 414.5 204.0 417.0C207.5 419.5 207.3 419.6 214.0 421.0C220.7 422.4 235.7 424.1 244.0 425.4C252.3 426.8 255.7 428.6 264.0 429.3C272.3 430.0 284.8 429.5 294.0 429.8C303.2 430.1 309.2 430.7 319.0 431.0C328.8 431.3 343.8 430.8 353.0 431.4C362.2 432.0 370.5 434.0 374.0 434.5" stroke="#a39c2c" stroke-width="1.300" opacity=".23"/>
<path d="M116.0 359.0C120.0 359.1 134.4 358.8 140.0 359.5C145.7 360.2 145.0 358.9 150.0 363.0C155.0 367.1 163.2 377.0 170.0 384.0C176.9 391.0 185.7 399.7 191.0 405.0C196.4 410.3 198.5 413.5 202.0 416.0C205.5 418.5 205.4 418.9 212.0 420.0C218.7 421.1 233.7 421.3 242.0 422.7C250.4 424.1 253.7 427.3 262.0 428.3C270.4 429.3 282.9 428.5 292.0 428.8C301.2 429.1 307.2 429.7 317.0 430.0C326.9 430.3 341.9 429.8 351.0 430.4C360.2 431.0 368.5 433.0 372.0 433.5" stroke="#a39c2c" stroke-width="1.300" opacity=".23"/>
<path d="M114.8 358.9C118.8 358.9 133.2 358.7 138.8 359.4C144.5 360.0 143.8 358.8 148.8 362.9C153.8 366.9 162.0 376.9 168.8 383.9C175.7 390.9 184.5 399.5 189.8 404.9C195.2 410.2 197.3 413.4 200.8 415.9C204.3 418.4 204.2 418.5 210.8 419.9C217.5 421.2 232.5 422.6 240.8 423.9C249.2 425.3 252.5 427.4 260.8 428.2C269.2 428.9 281.7 428.4 290.8 428.7C300.0 428.9 306.0 429.6 315.8 429.9C325.7 430.1 340.7 429.7 349.8 430.3C359.0 430.8 367.3 432.8 370.8 433.4" stroke="#a39c2c" stroke-width="1.300" opacity=".23"/>
<path d="M114.4 359.4C118.4 359.5 132.7 359.2 138.4 359.9C144.0 360.6 143.4 359.3 148.4 363.4C153.4 367.5 161.5 377.4 168.4 384.4C175.2 391.4 184.0 400.1 189.4 405.4C194.7 410.7 196.9 413.9 200.4 416.4C203.9 418.9 203.7 419.1 210.4 420.4C217.0 421.7 232.0 422.6 240.4 424.0C248.7 425.4 252.0 427.8 260.4 428.7C268.7 429.6 281.2 428.9 290.4 429.2C299.5 429.5 305.5 430.1 315.4 430.4C325.2 430.7 340.2 430.2 349.4 430.8C358.5 431.4 366.9 433.4 370.4 433.9" stroke="#a39c2c" stroke-width="1.300" opacity=".23"/>
<path d="M116.8 359.8C120.8 359.9 135.2 359.6 140.8 360.3C146.5 361.0 145.8 359.7 150.8 363.8C155.8 367.9 164.0 377.8 170.8 384.8C177.7 391.8 186.5 400.5 191.8 405.8C197.2 411.1 199.3 414.3 202.8 416.8C206.3 419.3 206.2 419.7 212.8 420.8C219.5 421.9 234.5 422.2 242.8 423.5C251.2 424.9 254.5 428.1 262.8 429.1C271.2 430.1 283.7 429.3 292.8 429.6C302.0 429.9 308.0 430.5 317.8 430.8C327.7 431.1 342.7 430.6 351.8 431.2C361.0 431.8 369.3 433.8 372.8 434.3" stroke="#a39c2c" stroke-width="1.300" opacity=".23"/>
<path d="M122.8 359.3C126.8 359.4 141.2 359.2 146.8 359.8C152.5 360.5 151.8 359.3 156.8 363.3C161.8 367.4 170.0 377.3 176.8 384.3C183.7 391.3 192.5 400.0 197.8 405.3C203.2 410.7 205.3 413.8 208.8 416.3C212.3 418.8 212.2 419.2 218.8 420.3C225.5 421.5 240.5 421.7 248.8 423.1C257.2 424.5 260.5 427.6 268.8 428.6C277.2 429.7 289.7 428.9 298.8 429.1C308.0 429.4 314.0 430.1 323.8 430.3C333.7 430.6 348.7 430.2 357.8 430.7C367.0 431.3 375.3 433.3 378.8 433.8" stroke="#a39c2c" stroke-width="1.300" opacity=".23"/>
<path d="M114.2 360.1C118.2 360.2 132.5 359.9 138.2 360.6C143.9 361.3 143.2 360.0 148.2 364.1C153.2 368.2 161.4 378.1 168.2 385.1C175.0 392.1 183.9 400.8 189.2 406.1C194.5 411.4 196.7 414.6 200.2 417.1C203.7 419.6 203.5 419.7 210.2 421.1C216.9 422.5 231.9 424.2 240.2 425.5C248.5 426.9 251.9 428.7 260.2 429.4C268.5 430.1 281.0 429.6 290.2 429.9C299.4 430.2 305.4 430.8 315.2 431.1C325.0 431.4 340.0 430.9 349.2 431.5C358.4 432.1 366.7 434.1 370.2 434.6" stroke="#a39c2c" stroke-width="1.300" opacity=".23"/>
<path d="M118.0 360.3C122.0 360.4 136.3 360.1 142.0 360.8C147.7 361.4 147.0 360.2 152.0 364.3C157.0 368.4 165.2 378.3 172.0 385.3C178.8 392.3 187.7 400.9 193.0 406.3C198.3 411.6 200.5 414.8 204.0 417.3C207.5 419.8 207.3 420.1 214.0 421.3C220.7 422.5 235.7 423.0 244.0 424.4C252.3 425.8 255.7 428.6 264.0 429.6C272.3 430.5 284.8 429.8 294.0 430.1C303.2 430.4 309.2 431.0 319.0 431.3C328.8 431.5 343.8 431.1 353.0 431.7C362.2 432.3 370.5 434.3 374.0 434.8" stroke="#a39c2c" stroke-width="1.300" opacity=".23"/>
<path d="M114.6 359.8C118.6 359.9 132.9 359.6 138.6 360.3C144.3 361.0 143.6 359.7 148.6 363.8C153.6 367.9 161.8 377.8 168.6 384.8C175.4 391.8 184.3 400.5 189.6 405.8C194.9 411.1 197.1 414.3 200.6 416.8C204.1 419.3 203.9 419.4 210.6 420.8C217.3 422.2 232.3 423.6 240.6 425.0C248.9 426.4 252.3 428.3 260.6 429.1C268.9 429.8 281.4 429.3 290.6 429.6C299.8 429.9 305.8 430.5 315.6 430.8C325.4 431.1 340.4 430.6 349.6 431.2C358.8 431.8 367.1 433.8 370.6 434.3" stroke="#a39c2c" stroke-width="1.300" opacity=".23"/>
<path d="M119.3 360.5C123.3 360.6 137.6 360.3 143.3 361.0C149.0 361.6 148.3 360.4 153.3 364.5C158.3 368.6 166.5 378.5 173.3 385.5C180.1 392.5 189.0 401.1 194.3 406.5C199.6 411.8 201.8 415.0 205.3 417.5C208.8 420.0 208.6 420.4 215.3 421.5C222.0 422.6 237.0 422.8 245.3 424.2C253.6 425.6 257.0 428.8 265.3 429.8C273.6 430.8 286.1 430.0 295.3 430.3C304.5 430.6 310.5 431.2 320.3 431.5C330.1 431.7 345.1 431.3 354.3 431.9C363.5 432.5 371.8 434.5 375.3 435.0" stroke="#a39c2c" stroke-width="1.300" opacity=".23"/>
<path d="M114.2 359.2C118.2 359.2 132.5 359.0 138.2 359.7C143.8 360.3 143.2 359.1 148.2 363.2C153.2 367.2 161.3 377.2 168.2 384.2C175.0 391.2 183.8 399.8 189.2 405.2C194.5 410.5 196.7 413.7 200.2 416.2C203.7 418.7 203.5 418.8 210.2 420.2C216.8 421.5 231.8 422.8 240.2 424.2C248.5 425.6 251.8 427.7 260.2 428.5C268.5 429.3 281.0 428.7 290.2 429.0C299.3 429.2 305.3 429.9 315.2 430.2C325.0 430.4 340.0 430.0 349.2 430.6C358.3 431.1 366.7 433.1 370.2 433.7" stroke="#a39c2c" stroke-width="1.300" opacity=".23"/>
<path d="M117.9 358.6C121.9 358.7 136.2 358.5 141.9 359.1C147.6 359.8 146.9 358.6 151.9 362.6C156.9 366.7 165.1 376.6 171.9 383.6C178.7 390.6 187.6 399.3 192.9 404.6C198.2 410.0 200.4 413.1 203.9 415.6C207.4 418.1 207.2 418.5 213.9 419.6C220.6 420.8 235.6 421.4 243.9 422.7C252.2 424.1 255.6 427.0 263.9 427.9C272.2 428.9 284.7 428.2 293.9 428.4C303.1 428.7 309.1 429.4 318.9 429.6C328.7 429.9 343.7 429.5 352.9 430.0C362.1 430.6 370.4 432.6 373.9 433.1" stroke="#a39c2c" stroke-width="1.300" opacity=".23"/>
<path d="M120.3 359.7C124.3 359.8 138.6 359.5 144.3 360.2C149.9 360.9 149.3 359.6 154.3 363.7C159.3 367.8 167.4 377.7 174.3 384.7C181.1 391.7 189.9 400.4 195.3 405.7C200.6 411.0 202.8 414.2 206.3 416.7C209.8 419.2 209.6 419.5 216.3 420.7C222.9 421.9 237.9 422.3 246.3 423.7C254.6 425.1 257.9 428.0 266.3 429.0C274.6 430.0 287.1 429.2 296.3 429.5C305.4 429.8 311.4 430.4 321.3 430.7C331.1 431.0 346.1 430.5 355.3 431.1C364.4 431.7 372.8 433.7 376.3 434.2" stroke="#a39c2c" stroke-width="1.300" opacity=".23"/>
<path d="M117.6 359.4C121.6 359.5 135.9 359.2 141.6 359.9C147.3 360.6 146.6 359.3 151.6 363.4C156.6 367.5 164.8 377.4 171.6 384.4C178.4 391.4 187.3 400.1 192.6 405.4C197.9 410.7 200.1 413.9 203.6 416.4C207.1 418.9 206.9 419.2 213.6 420.4C220.3 421.6 235.3 422.3 243.6 423.6C251.9 425.0 255.3 427.8 263.6 428.7C271.9 429.6 284.4 428.9 293.6 429.2C302.8 429.5 308.8 430.1 318.6 430.4C328.4 430.7 343.4 430.2 352.6 430.8C361.8 431.4 370.1 433.4 373.6 433.9" stroke="#a39c2c" stroke-width="1.300" opacity=".23"/>
<path d="M134.2 434.7C138.2 434.6 152.6 434.9 158.2 434.2C163.9 433.6 163.6 434.6 168.2 430.7C172.9 426.8 179.9 417.9 186.2 410.7C192.6 403.6 200.9 393.7 206.2 387.7C211.6 381.7 214.9 378.0 218.2 374.7C221.6 371.5 223.2 369.8 226.2 368.2C229.2 366.6 232.4 365.2 236.2 365.2C240.1 365.3 244.6 368.3 249.2 368.4C253.9 368.4 257.6 366.3 264.2 365.4C270.9 364.5 281.2 363.8 289.2 362.9C297.2 362.1 308.4 360.7 312.2 360.2" stroke="#a39c2c" stroke-width="1.300" opacity=".23"/>
<path d="M125.1 433.3C129.1 433.2 143.4 433.5 149.1 432.8C154.8 432.1 154.4 433.2 159.1 429.3C163.8 425.4 170.8 416.5 177.1 409.3C183.4 402.1 191.8 392.3 197.1 386.3C202.4 380.3 205.8 376.6 209.1 373.3C212.4 370.1 214.1 368.4 217.1 366.8C220.1 365.2 223.3 363.9 227.1 363.8C230.9 363.7 235.4 366.1 240.1 366.2C244.8 366.2 248.4 364.8 255.1 364.0C261.8 363.2 272.1 362.4 280.1 361.5C288.1 360.6 299.3 359.3 303.1 358.8" stroke="#a39c2c" stroke-width="1.300" opacity=".23"/>
<path d="M137.1 433.4C141.1 433.3 155.4 433.5 161.1 432.9C166.7 432.2 166.4 433.3 171.1 429.4C175.7 425.5 182.7 416.5 189.1 409.4C195.4 402.2 203.7 392.4 209.1 386.4C214.4 380.4 217.7 376.6 221.1 373.4C224.4 370.1 226.1 368.5 229.1 366.9C232.1 365.3 235.2 364.0 239.1 363.9C242.9 363.8 247.4 366.3 252.1 366.4C256.7 366.4 260.4 364.9 267.1 364.1C273.7 363.3 284.1 362.4 292.1 361.6C300.1 360.7 311.2 359.3 315.1 358.9" stroke="#a39c2c" stroke-width="1.300" opacity=".23"/>
<path d="M120.5 434.9C124.5 434.8 138.8 435.0 144.5 434.4C150.1 433.7 149.8 434.8 154.5 430.9C159.1 427.0 166.1 418.0 172.5 410.9C178.8 403.7 187.1 393.9 192.5 387.9C197.8 381.9 201.1 378.1 204.5 374.9C207.8 371.6 209.5 370.0 212.5 368.4C215.5 366.8 218.6 365.3 222.5 365.4C226.3 365.5 230.8 368.8 235.5 368.9C240.1 368.9 243.8 366.5 250.5 365.6C257.1 364.6 267.5 363.9 275.5 363.1C283.5 362.2 294.6 360.8 298.5 360.4" stroke="#a39c2c" stroke-width="1.300" opacity=".23"/>
<path d="M132.2 434.2C136.2 434.1 150.6 434.4 156.2 433.7C161.9 433.0 161.6 434.1 166.2 430.2C170.9 426.3 177.9 417.4 184.2 410.2C190.6 403.0 198.9 393.2 204.2 387.2C209.6 381.2 212.9 377.5 216.2 374.2C219.6 371.0 221.2 369.3 224.2 367.7C227.2 366.1 230.4 364.6 234.2 364.7C238.1 364.8 242.6 368.4 247.2 368.5C251.9 368.5 255.6 365.9 262.2 364.9C268.9 363.9 279.2 363.3 287.2 362.4C295.2 361.5 306.4 360.2 310.2 359.7" stroke="#a39c2c" stroke-width="1.300" opacity=".23"/>
<path d="M142.0 433.2C146.0 433.1 160.4 433.4 166.0 432.7C171.7 432.0 171.4 433.1 176.0 429.2C180.7 425.3 187.7 416.4 194.0 409.2C200.4 402.0 208.7 392.2 214.0 386.2C219.4 380.2 222.7 376.5 226.0 373.2C229.4 370.0 231.0 368.3 234.0 366.7C237.0 365.1 240.2 363.7 244.0 363.7C247.9 363.7 252.4 366.5 257.0 366.6C261.7 366.6 265.4 364.8 272.0 363.9C278.7 363.1 289.0 362.3 297.0 361.4C305.0 360.5 316.2 359.2 320.0 358.7" stroke="#a39c2c" stroke-width="1.300" opacity=".23"/>
<path d="M143.2 434.4C147.2 434.3 161.5 434.6 167.2 433.9C172.8 433.2 172.5 434.3 177.2 430.4C181.8 426.5 188.8 417.6 195.2 410.4C201.5 403.2 209.8 393.4 215.2 387.4C220.5 381.4 223.8 377.7 227.2 374.4C230.5 371.2 232.2 369.5 235.2 367.9C238.2 366.3 241.3 365.0 245.2 364.9C249.0 364.8 253.5 367.4 258.2 367.4C262.8 367.4 266.5 365.9 273.2 365.1C279.8 364.3 290.2 363.5 298.2 362.6C306.2 361.7 317.3 360.4 321.2 359.9" stroke="#a39c2c" stroke-width="1.300" opacity=".23"/>
<path d="M131.0 434.6C135.0 434.6 149.3 434.8 155.0 434.1C160.7 433.5 160.3 434.6 165.0 430.6C169.7 426.7 176.7 417.8 183.0 410.6C189.3 403.5 197.7 393.6 203.0 387.6C208.3 381.6 211.7 377.9 215.0 374.6C218.3 371.4 220.0 369.7 223.0 368.1C226.0 366.6 229.2 365.2 233.0 365.1C236.8 365.1 241.3 367.6 246.0 367.7C250.7 367.7 254.3 366.1 261.0 365.3C267.7 364.5 278.0 363.7 286.0 362.8C294.0 362.0 305.2 360.6 309.0 360.1" stroke="#a39c2c" stroke-width="1.300" opacity=".23"/>
<path d="M122.5 434.4C126.5 434.4 140.9 434.6 146.5 433.9C152.2 433.3 151.9 434.4 156.5 430.4C161.2 426.5 168.2 417.6 174.5 410.4C180.9 403.3 189.2 393.4 194.5 387.4C199.9 381.4 203.2 377.7 206.5 374.4C209.9 371.2 211.5 369.5 214.5 367.9C217.5 366.4 220.7 365.0 224.5 364.9C228.4 364.8 232.9 367.3 237.5 367.3C242.2 367.3 245.9 365.9 252.5 365.1C259.2 364.4 269.5 363.5 277.5 362.6C285.5 361.8 296.7 360.4 300.5 359.9" stroke="#a39c2c" stroke-width="1.300" opacity=".23"/>
<path d="M123.9 433.5C127.9 433.4 142.2 433.6 147.9 433.0C153.6 432.3 153.2 433.4 157.9 429.5C162.6 425.5 169.6 416.6 175.9 409.5C182.2 402.3 190.6 392.5 195.9 386.5C201.2 380.5 204.6 376.7 207.9 373.5C211.2 370.2 212.9 368.5 215.9 367.0C218.9 365.4 222.1 364.1 225.9 364.0C229.7 363.8 234.2 366.1 238.9 366.1C243.6 366.1 247.2 364.9 253.9 364.2C260.6 363.4 270.9 362.5 278.9 361.7C286.9 360.8 298.1 359.4 301.9 359.0" stroke="#a39c2c" stroke-width="1.300" opacity=".23"/>
<path d="M115.2 433.6C119.2 433.5 133.5 433.7 139.2 433.1C144.8 432.4 144.5 433.5 149.2 429.6C153.8 425.6 160.8 416.7 167.2 409.6C173.5 402.4 181.8 392.6 187.2 386.6C192.5 380.6 195.8 376.8 199.2 373.6C202.5 370.3 204.2 368.6 207.2 367.1C210.2 365.5 213.3 364.0 217.2 364.1C221.0 364.1 225.5 367.3 230.2 367.3C234.8 367.3 238.5 365.2 245.2 364.3C251.8 363.3 262.2 362.6 270.2 361.8C278.2 360.9 289.3 359.5 293.2 359.1" stroke="#a39c2c" stroke-width="1.300" opacity=".23"/>
<path d="M122.4 433.4C126.4 433.3 140.7 433.6 146.4 432.9C152.0 432.2 151.7 433.3 156.4 429.4C161.0 425.5 168.0 416.6 174.4 409.4C180.7 402.2 189.0 392.4 194.4 386.4C199.7 380.4 203.0 376.7 206.4 373.4C209.7 370.2 211.4 368.5 214.4 366.9C217.4 365.3 220.5 363.8 224.4 363.9C228.2 364.0 232.7 367.7 237.4 367.7C242.0 367.8 245.7 365.1 252.4 364.1C259.0 363.1 269.4 362.5 277.4 361.6C285.4 360.7 296.5 359.4 300.4 358.9" stroke="#a39c2c" stroke-width="1.300" opacity=".23"/>
<path d="M132.1 433.1C136.1 433.0 150.5 433.3 156.1 432.6C161.8 432.0 161.5 433.0 166.1 429.1C170.8 425.2 177.8 416.3 184.1 409.1C190.5 402.0 198.8 392.1 204.1 386.1C209.5 380.1 212.8 376.4 216.1 373.1C219.5 369.9 221.1 368.2 224.1 366.6C227.1 365.0 230.3 363.6 234.1 363.6C238.0 363.6 242.5 366.5 247.1 366.5C251.8 366.5 255.5 364.7 262.1 363.8C268.8 363.0 279.1 362.2 287.1 361.3C295.1 360.5 306.3 359.1 310.1 358.6" stroke="#a39c2c" stroke-width="1.300" opacity=".23"/>
<path d="M127.5 433.7C131.5 433.7 145.9 433.9 151.5 433.2C157.2 432.6 156.9 433.7 161.5 429.7C166.2 425.8 173.2 416.9 179.5 409.7C185.9 402.6 194.2 392.7 199.5 386.7C204.9 380.7 208.2 377.0 211.5 373.7C214.9 370.5 216.5 368.8 219.5 367.2C222.5 365.7 225.7 364.3 229.5 364.2C233.4 364.1 237.9 366.6 242.5 366.6C247.2 366.6 250.9 365.2 257.5 364.4C264.2 363.7 274.5 362.8 282.5 361.9C290.5 361.1 301.7 359.7 305.5 359.2" stroke="#a39c2c" stroke-width="1.300" opacity=".23"/>
<path d="M123.9 434.8C127.9 434.7 142.2 434.9 147.9 434.3C153.6 433.6 153.2 434.7 157.9 430.8C162.6 426.9 169.6 417.9 175.9 410.8C182.2 403.6 190.6 393.8 195.9 387.8C201.2 381.8 204.6 378.0 207.9 374.8C211.2 371.5 212.9 369.9 215.9 368.3C218.9 366.7 222.1 365.3 225.9 365.3C229.7 365.2 234.2 368.0 238.9 368.0C243.6 368.0 247.2 366.3 253.9 365.5C260.6 364.6 270.9 363.8 278.9 363.0C286.9 362.1 298.1 360.7 301.9 360.3" stroke="#a39c2c" stroke-width="1.300" opacity=".23"/>
<path d="M125.5 434.3C129.5 434.2 143.8 434.5 149.5 433.8C155.2 433.1 154.8 434.2 159.5 430.3C164.2 426.4 171.2 417.5 177.5 410.3C183.8 403.1 192.2 393.3 197.5 387.3C202.8 381.3 206.2 377.6 209.5 374.3C212.8 371.1 214.5 369.4 217.5 367.8C220.5 366.2 223.7 364.7 227.5 364.8C231.3 365.0 235.8 368.7 240.5 368.8C245.2 368.8 248.8 366.1 255.5 365.0C262.2 364.0 272.5 363.4 280.5 362.5C288.5 361.6 299.7 360.3 303.5 359.8" stroke="#a39c2c" stroke-width="1.300" opacity=".23"/>
<path d="M123.9 433.1C127.9 433.0 142.2 433.2 147.9 432.6C153.6 431.9 153.2 433.0 157.9 429.1C162.6 425.2 169.6 416.2 175.9 409.1C182.2 401.9 190.6 392.1 195.9 386.1C201.2 380.1 204.6 376.3 207.9 373.1C211.2 369.8 212.9 368.2 215.9 366.6C218.9 365.0 222.1 363.7 225.9 363.6C229.7 363.5 234.2 365.8 238.9 365.9C243.6 365.9 247.2 364.5 253.9 363.8C260.6 363.0 270.9 362.1 278.9 361.3C286.9 360.4 298.1 359.0 301.9 358.6" stroke="#a39c2c" stroke-width="1.300" opacity=".23"/>
<path d="M119.0 434.8C123.0 434.7 137.3 435.0 143.0 434.3C148.6 433.7 148.3 434.7 153.0 430.8C157.6 426.9 164.6 418.0 171.0 410.8C177.3 403.7 185.6 393.8 191.0 387.8C196.3 381.8 199.6 378.1 203.0 374.8C206.3 371.6 208.0 369.9 211.0 368.3C214.0 366.7 217.1 365.5 221.0 365.3C224.8 365.2 229.3 367.3 234.0 367.4C238.6 367.4 242.3 366.2 249.0 365.5C255.6 364.8 266.0 363.9 274.0 363.0C282.0 362.2 293.1 360.8 297.0 360.3" stroke="#a39c2c" stroke-width="1.300" opacity=".23"/>
<path d="M121.9 434.3C125.9 434.2 140.3 434.4 145.9 433.8C151.6 433.1 151.3 434.2 155.9 430.3C160.6 426.4 167.6 417.4 173.9 410.3C180.3 403.1 188.6 393.3 193.9 387.3C199.3 381.3 202.6 377.5 205.9 374.3C209.3 371.0 210.9 369.4 213.9 367.8C216.9 366.2 220.1 364.9 223.9 364.8C227.8 364.6 232.3 366.8 236.9 366.8C241.6 366.8 245.3 365.7 251.9 365.0C258.6 364.2 268.9 363.3 276.9 362.5C284.9 361.6 296.1 360.2 299.9 359.8" stroke="#a39c2c" stroke-width="1.300" opacity=".23"/>
<path d="M111.1 434.5C115.1 434.4 129.4 434.6 135.1 434.0C140.8 433.3 140.4 434.4 145.1 430.5C149.8 426.5 156.8 417.6 163.1 410.5C169.4 403.3 177.8 393.5 183.1 387.5C188.4 381.5 191.8 377.7 195.1 374.5C198.4 371.2 200.1 369.5 203.1 368.0C206.1 366.4 209.3 365.0 213.1 365.0C216.9 365.0 221.4 367.9 226.1 367.9C230.8 368.0 234.4 366.0 241.1 365.2C247.8 364.3 258.1 363.5 266.1 362.7C274.1 361.8 285.3 360.4 289.1 360.0" stroke="#a39c2c" stroke-width="1.300" opacity=".23"/>
<path d="M116.5 434.1C120.5 434.0 134.9 434.3 140.5 433.6C146.2 432.9 145.9 434.0 150.5 430.1C155.2 426.2 162.2 417.3 168.5 410.1C174.9 402.9 183.2 393.1 188.5 387.1C193.9 381.1 197.2 377.3 200.5 374.1C203.9 370.8 205.5 369.2 208.5 367.6C211.5 366.0 214.7 364.7 218.5 364.6C222.4 364.5 226.9 366.7 231.5 366.7C236.2 366.8 239.9 365.5 246.5 364.8C253.2 364.1 263.5 363.2 271.5 362.3C279.5 361.4 290.7 360.0 294.5 359.6" stroke="#a39c2c" stroke-width="1.300" opacity=".23"/>
<path d="M149.6 434.8C153.6 434.7 168.0 435.0 173.6 434.3C179.3 433.6 179.0 434.7 183.6 430.8C188.3 426.9 195.3 418.0 201.6 410.8C208.0 403.6 216.3 393.8 221.6 387.8C227.0 381.8 230.3 378.1 233.6 374.8C237.0 371.6 238.6 369.9 241.6 368.3C244.6 366.7 247.8 365.2 251.6 365.3C255.5 365.4 260.0 368.7 264.6 368.8C269.3 368.8 273.0 366.5 279.6 365.5C286.3 364.5 296.6 363.9 304.6 363.0C312.6 362.1 323.8 360.8 327.6 360.3" stroke="#a39c2c" stroke-width="1.300" opacity=".23"/>
<path d="M126.2 434.8C130.2 434.7 144.5 435.0 150.2 434.3C155.8 433.7 155.5 434.7 160.2 430.8C164.8 426.9 171.8 418.0 178.2 410.8C184.5 403.7 192.8 393.8 198.2 387.8C203.5 381.8 206.8 378.1 210.2 374.8C213.5 371.6 215.2 369.9 218.2 368.3C221.2 366.7 224.3 365.2 228.2 365.3C232.0 365.4 236.5 368.9 241.2 368.9C245.8 368.9 249.5 366.5 256.2 365.5C262.8 364.5 273.2 363.9 281.2 363.0C289.2 362.2 300.3 360.8 304.2 360.3" stroke="#a39c2c" stroke-width="1.300" opacity=".23"/>
<path d="M116.9 434.4C120.9 434.3 135.2 434.5 140.9 433.9C146.6 433.2 146.2 434.3 150.9 430.4C155.6 426.5 162.6 417.5 168.9 410.4C175.2 403.2 183.6 393.4 188.9 387.4C194.2 381.4 197.6 377.6 200.9 374.4C204.2 371.1 205.9 369.5 208.9 367.9C211.9 366.3 215.1 364.9 218.9 364.9C222.7 364.8 227.2 367.5 231.9 367.6C236.6 367.6 240.2 365.9 246.9 365.1C253.6 364.2 263.9 363.4 271.9 362.6C279.9 361.7 291.1 360.3 294.9 359.9" stroke="#a39c2c" stroke-width="1.300" opacity=".23"/>
<path d="M137.7 434.6C141.7 434.5 156.0 434.7 161.7 434.1C167.4 433.4 167.0 434.5 171.7 430.6C176.4 426.7 183.4 417.7 189.7 410.6C196.0 403.4 204.4 393.6 209.7 387.6C215.0 381.6 218.4 377.8 221.7 374.6C225.0 371.3 226.7 369.7 229.7 368.1C232.7 366.5 235.9 365.1 239.7 365.1C243.5 365.1 248.0 367.9 252.7 367.9C257.4 367.9 261.0 366.1 267.7 365.3C274.4 364.4 284.7 363.6 292.7 362.8C300.7 361.9 311.9 360.5 315.7 360.1" stroke="#a39c2c" stroke-width="1.300" opacity=".23"/>
<path d="M119.3 434.1C123.3 434.1 137.7 434.3 143.3 433.6C149.0 433.0 148.7 434.1 153.3 430.1C158.0 426.2 165.0 417.3 171.3 410.1C177.7 403.0 186.0 393.1 191.3 387.1C196.7 381.1 200.0 377.4 203.3 374.1C206.7 370.9 208.3 369.2 211.3 367.6C214.3 366.1 217.5 364.5 221.3 364.6C225.2 364.8 229.7 368.3 234.3 368.4C239.0 368.4 242.7 365.9 249.3 364.8C256.0 363.8 266.3 363.2 274.3 362.3C282.3 361.5 293.5 360.1 297.3 359.6" stroke="#a39c2c" stroke-width="1.300" opacity=".23"/>
<path d="M122.5 434.2C126.5 434.1 140.8 434.4 146.5 433.7C152.2 433.1 151.8 434.1 156.5 430.2C161.2 426.3 168.2 417.4 174.5 410.2C180.8 403.1 189.2 393.2 194.5 387.2C199.8 381.2 203.2 377.5 206.5 374.2C209.8 371.0 211.5 369.3 214.5 367.7C217.5 366.1 220.7 364.7 224.5 364.7C228.3 364.7 232.8 367.8 237.5 367.9C242.2 367.9 245.8 365.8 252.5 364.9C259.2 364.0 269.5 363.3 277.5 362.4C285.5 361.6 296.7 360.2 300.5 359.7" stroke="#a39c2c" stroke-width="1.300" opacity=".23"/>
<path d="M122.5 434.3C126.5 434.2 140.8 434.4 146.5 433.8C152.2 433.1 151.8 434.2 156.5 430.3C161.2 426.4 168.2 417.4 174.5 410.3C180.8 403.1 189.2 393.3 194.5 387.3C199.8 381.3 203.2 377.5 206.5 374.3C209.8 371.0 211.5 369.4 214.5 367.8C217.5 366.2 220.7 364.9 224.5 364.8C228.3 364.6 232.8 366.9 237.5 366.9C242.2 367.0 245.8 365.7 252.5 365.0C259.2 364.2 269.5 363.3 277.5 362.5C285.5 361.6 296.7 360.2 300.5 359.8" stroke="#a39c2c" stroke-width="1.300" opacity=".23"/>
<path d="M140.4 433.8C144.4 433.7 158.7 433.9 164.4 433.3C170.0 432.6 169.7 433.7 174.4 429.8C179.0 425.9 186.0 416.9 192.4 409.8C198.7 402.6 207.0 392.8 212.4 386.8C217.7 380.8 221.0 377.0 224.4 373.8C227.7 370.5 229.4 368.9 232.4 367.3C235.4 365.7 238.5 364.2 242.4 364.3C246.2 364.4 250.7 367.7 255.4 367.7C260.0 367.8 263.7 365.4 270.4 364.5C277.0 363.5 287.4 362.8 295.4 362.0C303.4 361.1 314.5 359.7 318.4 359.3" stroke="#a39c2c" stroke-width="1.300" opacity=".23"/>
<path d="M126.4 434.2C130.4 434.1 144.8 434.3 150.4 433.7C156.1 433.0 155.8 434.1 160.4 430.2C165.1 426.2 172.1 417.3 178.4 410.2C184.8 403.0 193.1 393.2 198.4 387.2C203.8 381.2 207.1 377.4 210.4 374.2C213.8 370.9 215.4 369.2 218.4 367.7C221.4 366.1 224.6 364.6 228.4 364.7C232.3 364.7 236.8 368.1 241.4 368.1C246.1 368.2 249.8 365.8 256.4 364.9C263.1 363.9 273.4 363.2 281.4 362.4C289.4 361.5 300.6 360.1 304.4 359.7" stroke="#a39c2c" stroke-width="1.300" opacity=".23"/>
<path d="M115.4 434.5C119.4 434.4 133.8 434.7 139.4 434.0C145.1 433.3 144.8 434.4 149.4 430.5C154.1 426.6 161.1 417.7 167.4 410.5C173.8 403.3 182.1 393.5 187.4 387.5C192.8 381.5 196.1 377.8 199.4 374.5C202.8 371.3 204.4 369.6 207.4 368.0C210.4 366.4 213.6 365.1 217.4 365.0C221.3 364.9 225.8 367.1 230.4 367.2C235.1 367.2 238.8 365.9 245.4 365.2C252.1 364.5 262.4 363.6 270.4 362.7C278.4 361.8 289.6 360.5 293.4 360.0" stroke="#a39c2c" stroke-width="1.300" opacity=".23"/>
<path d="M131.5 434.2C135.5 434.1 149.9 434.4 155.5 433.7C161.2 433.0 160.9 434.1 165.5 430.2C170.2 426.3 177.2 417.4 183.5 410.2C189.9 403.0 198.2 393.2 203.5 387.2C208.9 381.2 212.2 377.5 215.5 374.2C218.9 371.0 220.5 369.3 223.5 367.7C226.5 366.1 229.7 364.9 233.5 364.7C237.4 364.5 241.9 366.7 246.5 366.8C251.2 366.8 254.9 365.6 261.5 364.9C268.2 364.2 278.5 363.3 286.5 362.4C294.5 361.5 305.7 360.2 309.5 359.7" stroke="#a39c2c" stroke-width="1.300" opacity=".23"/>
<path d="M122.3 434.0C126.3 433.9 140.7 434.2 146.3 433.5C152.0 432.8 151.7 433.9 156.3 430.0C161.0 426.1 168.0 417.2 174.3 410.0C180.7 402.8 189.0 393.0 194.3 387.0C199.7 381.0 203.0 377.2 206.3 374.0C209.7 370.7 211.3 369.1 214.3 367.5C217.3 365.9 220.5 364.4 224.3 364.5C228.2 364.6 232.7 367.9 237.3 367.9C242.0 367.9 245.7 365.6 252.3 364.7C259.0 363.7 269.3 363.1 277.3 362.2C285.3 361.3 296.5 359.9 300.3 359.5" stroke="#a39c2c" stroke-width="1.300" opacity=".23"/>
<path d="M127.6 434.8C131.6 434.8 145.9 435.0 151.6 434.3C157.2 433.7 156.9 434.8 161.6 430.8C166.2 426.9 173.2 418.0 179.6 410.8C185.9 403.7 194.2 393.8 199.6 387.8C204.9 381.8 208.2 378.1 211.6 374.8C214.9 371.6 216.6 369.9 219.6 368.3C222.6 366.8 225.7 365.3 229.6 365.3C233.4 365.4 237.9 368.5 242.6 368.6C247.2 368.6 250.9 366.5 257.6 365.5C264.2 364.6 274.6 363.9 282.6 363.0C290.6 362.2 301.7 360.8 305.6 360.3" stroke="#a39c2c" stroke-width="1.300" opacity=".23"/>
<path d="M130.0 434.0C134.0 433.9 148.3 434.2 154.0 433.5C159.7 432.8 159.3 433.9 164.0 430.0C168.7 426.1 175.7 417.2 182.0 410.0C188.3 402.8 196.7 393.0 202.0 387.0C207.3 381.0 210.7 377.2 214.0 374.0C217.3 370.8 219.0 369.1 222.0 367.5C225.0 365.9 228.2 364.5 232.0 364.5C235.8 364.5 240.3 367.5 245.0 367.5C249.7 367.5 253.3 365.6 260.0 364.7C266.7 363.8 277.0 363.1 285.0 362.2C293.0 361.3 304.2 359.9 308.0 359.5" stroke="#d6cf3a" stroke-width="1.300" opacity=".75"/>
<path d="M108.0 359.5C112.0 359.6 126.3 359.3 132.0 360.0C137.7 360.7 137.0 359.4 142.0 363.5C147.0 367.6 155.2 377.5 162.0 384.5C168.8 391.5 177.7 400.2 183.0 405.5C188.3 410.8 190.5 414.0 194.0 416.5C197.5 419.0 197.3 419.2 204.0 420.5C210.7 421.8 225.7 422.6 234.0 424.0C242.3 425.4 245.7 427.9 254.0 428.8C262.3 429.7 274.8 429.0 284.0 429.3C293.2 429.6 299.2 430.2 309.0 430.5C318.8 430.8 333.8 430.3 343.0 430.9C352.2 431.5 360.5 433.5 364.0 434.0" stroke="#c9c238" stroke-width="1.200" opacity=".5"/>
<path d="M118.0 359.5C122.0 359.6 136.3 359.3 142.0 360.0C147.7 360.7 147.0 359.4 152.0 363.5C157.0 367.6 165.2 377.5 172.0 384.5C178.8 391.5 187.7 400.2 193.0 405.5C198.3 410.8 200.5 414.0 204.0 416.5C207.5 419.0 207.3 419.2 214.0 420.5C220.7 421.8 235.7 422.6 244.0 424.0C252.3 425.4 255.7 427.9 264.0 428.8C272.3 429.7 284.8 429.0 294.0 429.3C303.2 429.6 309.2 430.2 319.0 430.5C328.8 430.8 343.8 430.3 353.0 430.9C362.2 431.5 370.5 433.5 374.0 434.0" stroke="#c9c238" stroke-width="1.200" opacity=".5"/>
<path d="M208.0 420.5C213.0 421.1 229.7 422.6 238.0 424.0C246.3 425.4 249.7 427.9 258.0 428.8C266.3 429.7 278.8 429.0 288.0 429.3C297.2 429.6 303.2 430.2 313.0 430.5C322.8 430.8 337.8 430.3 347.0 430.9C356.2 431.5 364.5 433.5 368.0 434.0" stroke="#dcd536" stroke-width="2.400" opacity=".75"/>
<path d="M218.0 367.5C219.7 367.0 224.2 364.5 228.0 364.5C231.8 364.5 236.3 367.5 241.0 367.5C245.7 367.5 249.3 365.6 256.0 364.7C262.7 363.8 273.0 363.1 281.0 362.2C289.0 361.3 300.2 359.9 304.0 359.5" stroke="#dcd536" stroke-width="2.400" opacity=".75"/>
<path d="M448.0 359.9C452.0 359.9 466.3 359.7 472.0 360.4C477.6 361.0 477.0 359.8 482.0 363.9C487.0 367.9 495.1 377.9 502.0 384.9C508.8 391.9 517.6 400.5 523.0 405.9C528.3 411.2 530.5 414.4 534.0 416.9C537.5 419.4 537.3 419.7 544.0 420.9C550.6 422.0 565.6 422.6 574.0 424.0C582.3 425.3 585.6 428.2 594.0 429.2C602.3 430.1 614.8 429.4 624.0 429.7C633.1 429.9 639.1 430.6 649.0 430.9C658.8 431.1 673.8 430.7 683.0 431.3C692.1 431.8 700.5 433.8 704.0 434.4" stroke="#a39c2c" stroke-width="1.300" opacity=".23"/>
<path d="M449.0 358.8C453.0 358.9 467.3 358.7 473.0 359.3C478.6 360.0 478.0 358.8 483.0 362.8C488.0 366.9 496.1 376.8 503.0 383.8C509.8 390.8 518.6 399.5 524.0 404.8C529.3 410.2 531.5 413.3 535.0 415.8C538.5 418.3 538.3 418.7 545.0 419.8C551.6 421.0 566.6 421.4 575.0 422.7C583.3 424.1 586.6 427.2 595.0 428.1C603.3 429.1 615.8 428.4 625.0 428.6C634.1 428.9 640.1 429.6 650.0 429.8C659.8 430.1 674.8 429.7 684.0 430.2C693.1 430.8 701.5 432.8 705.0 433.3" stroke="#a39c2c" stroke-width="1.300" opacity=".23"/>
<path d="M455.9 360.3C459.9 360.4 474.3 360.1 479.9 360.8C485.6 361.5 484.9 360.2 489.9 364.3C494.9 368.4 503.1 378.3 509.9 385.3C516.8 392.3 525.6 401.0 530.9 406.3C536.3 411.6 538.4 414.8 541.9 417.3C545.4 419.8 545.3 420.1 551.9 421.3C558.6 422.5 573.6 423.3 581.9 424.7C590.3 426.1 593.6 428.7 601.9 429.6C610.3 430.5 622.8 429.8 631.9 430.1C641.1 430.4 647.1 431.0 656.9 431.3C666.8 431.6 681.8 431.1 690.9 431.7C700.1 432.3 708.4 434.3 711.9 434.8" stroke="#a39c2c" stroke-width="1.300" opacity=".23"/>
<path d="M442.7 359.8C446.7 359.9 461.0 359.7 466.7 360.3C472.3 361.0 471.7 359.7 476.7 363.8C481.7 367.9 489.8 377.8 496.7 384.8C503.5 391.8 512.3 400.5 517.7 405.8C523.0 411.2 525.2 414.3 528.7 416.8C532.2 419.3 532.0 419.6 538.7 420.8C545.3 422.0 560.3 422.6 568.7 424.0C577.0 425.4 580.3 428.2 588.7 429.1C597.0 430.1 609.5 429.3 618.7 429.6C627.8 429.9 633.8 430.6 643.7 430.8C653.5 431.1 668.5 430.6 677.7 431.2C686.8 431.8 695.2 433.8 698.7 434.3" stroke="#a39c2c" stroke-width="1.300" opacity=".23"/>
<path d="M450.2 360.3C454.2 360.4 468.5 360.2 474.2 360.8C479.9 361.5 479.2 360.2 484.2 364.3C489.2 368.4 497.4 378.3 504.2 385.3C511.0 392.3 519.9 401.0 525.2 406.3C530.5 411.7 532.7 414.8 536.2 417.3C539.7 419.8 539.5 420.0 546.2 421.3C552.9 422.7 567.9 424.1 576.2 425.4C584.5 426.8 587.9 428.8 596.2 429.6C604.5 430.4 617.0 429.8 626.2 430.1C635.4 430.4 641.4 431.1 651.2 431.3C661.0 431.6 676.0 431.1 685.2 431.7C694.4 432.3 702.7 434.3 706.2 434.8" stroke="#a39c2c" stroke-width="1.300" opacity=".23"/>
<path d="M454.5 359.3C458.5 359.4 472.9 359.1 478.5 359.8C484.2 360.4 483.5 359.2 488.5 363.3C493.5 367.4 501.7 377.3 508.5 384.3C515.4 391.3 524.2 399.9 529.5 405.3C534.9 410.6 537.0 413.8 540.5 416.3C544.0 418.8 543.9 418.9 550.5 420.3C557.2 421.6 572.2 423.1 580.5 424.5C588.9 425.9 592.2 427.8 600.5 428.6C608.9 429.3 621.4 428.8 630.5 429.1C639.7 429.4 645.7 430.0 655.5 430.3C665.4 430.5 680.4 430.1 689.5 430.7C698.7 431.3 707.0 433.3 710.5 433.8" stroke="#a39c2c" stroke-width="1.300" opacity=".23"/>
<path d="M443.1 359.5C447.1 359.6 461.4 359.3 467.1 360.0C472.8 360.7 472.1 359.4 477.1 363.5C482.1 367.6 490.3 377.5 497.1 384.5C503.9 391.5 512.8 400.2 518.1 405.5C523.4 410.8 525.6 414.0 529.1 416.5C532.6 419.0 532.4 419.4 539.1 420.5C545.8 421.6 560.8 421.9 569.1 423.3C577.4 424.6 580.8 427.8 589.1 428.8C597.4 429.8 609.9 429.0 619.1 429.3C628.3 429.6 634.3 430.2 644.1 430.5C653.9 430.8 668.9 430.3 678.1 430.9C687.3 431.5 695.6 433.5 699.1 434.0" stroke="#a39c2c" stroke-width="1.300" opacity=".23"/>
<path d="M445.2 360.2C449.2 360.3 463.5 360.0 469.2 360.7C474.8 361.4 474.2 360.1 479.2 364.2C484.2 368.3 492.3 378.2 499.2 385.2C506.0 392.2 514.8 400.9 520.2 406.2C525.5 411.5 527.7 414.7 531.2 417.2C534.7 419.7 534.5 419.8 541.2 421.2C547.8 422.6 562.8 424.0 571.2 425.4C579.5 426.8 582.8 428.7 591.2 429.5C599.5 430.3 612.0 429.7 621.2 430.0C630.3 430.3 636.3 430.9 646.2 431.2C656.0 431.5 671.0 431.0 680.2 431.6C689.3 432.2 697.7 434.2 701.2 434.7" stroke="#a39c2c" stroke-width="1.300" opacity=".23"/>
<path d="M444.2 358.8C448.2 358.9 462.5 358.7 468.2 359.3C473.8 360.0 473.2 358.8 478.2 362.8C483.2 366.9 491.3 376.8 498.2 383.8C505.0 390.8 513.8 399.5 519.2 404.8C524.5 410.2 526.7 413.3 530.2 415.8C533.7 418.3 533.5 418.7 540.2 419.8C546.8 421.0 561.8 421.5 570.2 422.9C578.5 424.3 581.8 427.2 590.2 428.1C598.5 429.1 611.0 428.4 620.2 428.6C629.3 428.9 635.3 429.6 645.2 429.8C655.0 430.1 670.0 429.7 679.2 430.2C688.3 430.8 696.7 432.8 700.2 433.3" stroke="#a39c2c" stroke-width="1.300" opacity=".23"/>
<path d="M432.6 359.1C436.6 359.1 450.9 358.9 456.6 359.6C462.2 360.2 461.6 359.0 466.6 363.1C471.6 367.1 479.7 377.1 486.6 384.1C493.4 391.1 502.2 399.7 507.6 405.1C512.9 410.4 515.1 413.6 518.6 416.1C522.1 418.6 521.9 418.8 528.6 420.1C535.2 421.3 550.2 422.1 558.6 423.5C566.9 424.8 570.2 427.5 578.6 428.4C586.9 429.3 599.4 428.6 608.6 428.9C617.7 429.1 623.7 429.8 633.6 430.1C643.4 430.3 658.4 429.9 667.6 430.5C676.7 431.0 685.1 433.0 688.6 433.6" stroke="#a39c2c" stroke-width="1.300" opacity=".23"/>
<path d="M449.5 359.5C453.5 359.6 467.8 359.3 473.5 360.0C479.2 360.7 478.5 359.4 483.5 363.5C488.5 367.6 496.7 377.5 503.5 384.5C510.3 391.5 519.2 400.2 524.5 405.5C529.8 410.8 532.0 414.0 535.5 416.5C539.0 419.0 538.8 419.2 545.5 420.5C552.2 421.8 567.2 422.9 575.5 424.2C583.8 425.6 587.2 427.9 595.5 428.8C603.8 429.6 616.3 429.0 625.5 429.3C634.7 429.6 640.7 430.2 650.5 430.5C660.3 430.8 675.3 430.3 684.5 430.9C693.7 431.5 702.0 433.5 705.5 434.0" stroke="#a39c2c" stroke-width="1.300" opacity=".23"/>
<path d="M454.5 360.2C458.5 360.3 472.9 360.0 478.5 360.7C484.2 361.3 483.5 360.1 488.5 364.2C493.5 368.3 501.7 378.2 508.5 385.2C515.4 392.2 524.2 400.8 529.5 406.2C534.9 411.5 537.0 414.7 540.5 417.2C544.0 419.7 543.9 420.0 550.5 421.2C557.2 422.4 572.2 422.9 580.5 424.3C588.9 425.7 592.2 428.5 600.5 429.5C608.9 430.4 621.4 429.7 630.5 430.0C639.7 430.3 645.7 430.9 655.5 431.2C665.4 431.4 680.4 431.0 689.5 431.6C698.7 432.2 707.0 434.2 710.5 434.7" stroke="#a39c2c" stroke-width="1.300" opacity=".23"/>
<path d="M455.1 358.6C459.1 358.6 473.4 358.4 479.1 359.1C484.8 359.7 484.1 358.5 489.1 362.6C494.1 366.6 502.3 376.6 509.1 383.6C515.9 390.6 524.8 399.2 530.1 404.6C535.4 409.9 537.6 413.1 541.1 415.6C544.6 418.1 544.4 418.5 551.1 419.6C557.8 420.7 572.8 420.8 581.1 422.2C589.4 423.6 592.8 426.8 601.1 427.9C609.4 428.9 621.9 428.1 631.1 428.4C640.3 428.6 646.3 429.3 656.1 429.6C665.9 429.8 680.9 429.4 690.1 430.0C699.3 430.5 707.6 432.5 711.1 433.1" stroke="#a39c2c" stroke-width="1.300" opacity=".23"/>
<path d="M447.2 358.6C451.2 358.7 465.5 358.4 471.2 359.1C476.9 359.7 476.2 358.5 481.2 362.6C486.2 366.7 494.4 376.6 501.2 383.6C508.0 390.6 516.9 399.2 522.2 404.6C527.5 409.9 529.7 413.1 533.2 415.6C536.7 418.1 536.5 418.2 543.2 419.6C549.9 421.0 564.9 422.4 573.2 423.8C581.5 425.2 584.9 427.1 593.2 427.9C601.5 428.6 614.0 428.1 623.2 428.4C632.4 428.7 638.4 429.3 648.2 429.6C658.0 429.8 673.0 429.4 682.2 430.0C691.4 430.6 699.7 432.6 703.2 433.1" stroke="#a39c2c" stroke-width="1.300" opacity=".23"/>
<path d="M445.8 360.1C449.8 360.2 464.2 359.9 469.8 360.6C475.5 361.2 474.8 360.0 479.8 364.1C484.8 368.2 493.0 378.1 499.8 385.1C506.7 392.1 515.5 400.7 520.8 406.1C526.2 411.4 528.3 414.6 531.8 417.1C535.3 419.6 535.2 419.9 541.8 421.1C548.5 422.3 563.5 422.8 571.8 424.2C580.2 425.6 583.5 428.4 591.8 429.4C600.2 430.3 612.7 429.6 621.8 429.9C631.0 430.2 637.0 430.8 646.8 431.1C656.7 431.3 671.7 430.9 680.8 431.5C690.0 432.1 698.3 434.1 701.8 434.6" stroke="#a39c2c" stroke-width="1.300" opacity=".23"/>
<path d="M439.8 358.8C443.8 358.9 458.2 358.6 463.8 359.3C469.5 359.9 468.8 358.7 473.8 362.8C478.8 366.9 487.0 376.8 493.8 383.8C500.7 390.8 509.5 399.4 514.8 404.8C520.2 410.1 522.3 413.3 525.8 415.8C529.3 418.3 529.2 418.7 535.8 419.8C542.5 420.9 557.5 420.9 565.8 422.3C574.2 423.7 577.5 427.0 585.8 428.1C594.2 429.1 606.7 428.3 615.8 428.6C625.0 428.9 631.0 429.5 640.8 429.8C650.7 430.0 665.7 429.6 674.8 430.2C684.0 430.8 692.3 432.8 695.8 433.3" stroke="#a39c2c" stroke-width="1.300" opacity=".23"/>
<path d="M446.6 359.0C450.6 359.1 464.9 358.8 470.6 359.5C476.3 360.1 475.6 358.9 480.6 363.0C485.6 367.1 493.8 377.0 500.6 384.0C507.4 391.0 516.3 399.6 521.6 405.0C526.9 410.3 529.1 413.5 532.6 416.0C536.1 418.5 535.9 418.6 542.6 420.0C549.3 421.3 564.3 422.8 572.6 424.1C580.9 425.5 584.3 427.5 592.6 428.3C600.9 429.0 613.4 428.5 622.6 428.8C631.8 429.1 637.8 429.7 647.6 430.0C657.4 430.2 672.4 429.8 681.6 430.4C690.8 431.0 699.1 433.0 702.6 433.5" stroke="#a39c2c" stroke-width="1.300" opacity=".23"/>
<path d="M448.4 358.6C452.4 358.7 466.7 358.4 472.4 359.1C478.1 359.8 477.4 358.5 482.4 362.6C487.4 366.7 495.6 376.6 502.4 383.6C509.2 390.6 518.1 399.3 523.4 404.6C528.7 409.9 530.9 413.1 534.4 415.6C537.9 418.1 537.7 418.5 544.4 419.6C551.1 420.7 566.1 421.0 574.4 422.4C582.7 423.8 586.1 426.9 594.4 427.9C602.7 428.9 615.2 428.1 624.4 428.4C633.6 428.7 639.6 429.3 649.4 429.6C659.2 429.9 674.2 429.4 683.4 430.0C692.6 430.6 700.9 432.6 704.4 433.1" stroke="#a39c2c" stroke-width="1.300" opacity=".23"/>
<path d="M443.1 359.8C447.1 359.9 461.5 359.6 467.1 360.3C472.8 361.0 472.1 359.7 477.1 363.8C482.1 367.9 490.3 377.8 497.1 384.8C504.0 391.8 512.8 400.5 518.1 405.8C523.5 411.1 525.6 414.3 529.1 416.8C532.6 419.3 532.5 419.5 539.1 420.8C545.8 422.1 560.8 423.2 569.1 424.6C577.5 426.0 580.8 428.3 589.1 429.1C597.5 430.0 610.0 429.3 619.1 429.6C628.3 429.9 634.3 430.5 644.1 430.8C654.0 431.1 669.0 430.6 678.1 431.2C687.3 431.8 695.6 433.8 699.1 434.3" stroke="#a39c2c" stroke-width="1.300" opacity=".23"/>
<path d="M442.9 360.4C446.9 360.5 461.2 360.3 466.9 360.9C472.5 361.6 471.9 360.3 476.9 364.4C481.9 368.5 490.0 378.4 496.9 385.4C503.7 392.4 512.5 401.1 517.9 406.4C523.2 411.8 525.4 414.9 528.9 417.4C532.4 419.9 532.2 420.1 538.9 421.4C545.5 422.8 560.5 424.1 568.9 425.5C577.2 426.9 580.5 428.9 588.9 429.7C597.2 430.5 609.7 429.9 618.9 430.2C628.0 430.5 634.0 431.2 643.9 431.4C653.7 431.7 668.7 431.2 677.9 431.8C687.0 432.4 695.4 434.4 698.9 434.9" stroke="#a39c2c" stroke-width="1.300" opacity=".23"/>
<path d="M446.3 358.9C450.3 358.9 464.6 358.7 470.3 359.4C475.9 360.0 475.3 358.8 480.3 362.9C485.3 366.9 493.4 376.9 500.3 383.9C507.1 390.9 515.9 399.5 521.3 404.9C526.6 410.2 528.8 413.4 532.3 415.9C535.8 418.4 535.6 418.6 542.3 419.9C548.9 421.1 563.9 421.9 572.3 423.3C580.6 424.7 583.9 427.3 592.3 428.2C600.6 429.0 613.1 428.4 622.3 428.7C631.4 428.9 637.4 429.6 647.3 429.9C657.1 430.1 672.1 429.7 681.3 430.3C690.4 430.8 698.8 432.8 702.3 433.4" stroke="#a39c2c" stroke-width="1.300" opacity=".23"/>
<path d="M444.0 359.4C448.0 359.5 462.4 359.3 468.0 359.9C473.7 360.6 473.0 359.4 478.0 363.4C483.0 367.5 491.2 377.4 498.0 384.4C504.9 391.4 513.7 400.1 519.0 405.4C524.4 410.8 526.5 413.9 530.0 416.4C533.5 418.9 533.4 419.4 540.0 420.4C546.7 421.5 561.7 421.6 570.0 423.0C578.4 424.3 581.7 427.7 590.0 428.7C598.4 429.8 610.9 429.0 620.0 429.2C629.2 429.5 635.2 430.2 645.0 430.4C654.9 430.7 669.9 430.3 679.0 430.8C688.2 431.4 696.5 433.4 700.0 433.9" stroke="#a39c2c" stroke-width="1.300" opacity=".23"/>
<path d="M447.1 359.2C451.1 359.3 465.4 359.0 471.1 359.7C476.8 360.4 476.1 359.1 481.1 363.2C486.1 367.3 494.3 377.2 501.1 384.2C507.9 391.2 516.8 399.9 522.1 405.2C527.4 410.5 529.6 413.7 533.1 416.2C536.6 418.7 536.4 419.0 543.1 420.2C549.8 421.4 564.8 421.9 573.1 423.2C581.4 424.6 584.8 427.5 593.1 428.5C601.4 429.5 613.9 428.7 623.1 429.0C632.3 429.3 638.3 429.9 648.1 430.2C657.9 430.5 672.9 430.0 682.1 430.6C691.3 431.2 699.6 433.2 703.1 433.7" stroke="#a39c2c" stroke-width="1.300" opacity=".23"/>
<path d="M444.0 359.5C448.0 359.6 462.4 359.4 468.0 360.0C473.7 360.7 473.0 359.5 478.0 363.5C483.0 367.6 491.2 377.5 498.0 384.5C504.9 391.5 513.7 400.2 519.0 405.5C524.4 410.9 526.5 414.0 530.0 416.5C533.5 419.0 533.4 419.2 540.0 420.5C546.7 421.9 561.7 423.1 570.0 424.4C578.4 425.8 581.7 428.0 590.0 428.8C598.4 429.7 610.9 429.1 620.0 429.3C629.2 429.6 635.2 430.3 645.0 430.5C654.9 430.8 669.9 430.4 679.0 430.9C688.2 431.5 696.5 433.5 700.0 434.0" stroke="#a39c2c" stroke-width="1.300" opacity=".23"/>
<path d="M439.8 360.1C443.8 360.2 458.1 359.9 463.8 360.6C469.4 361.3 468.8 360.0 473.8 364.1C478.8 368.2 486.9 378.1 493.8 385.1C500.6 392.1 509.4 400.8 514.8 406.1C520.1 411.4 522.3 414.6 525.8 417.1C529.3 419.6 529.1 419.9 535.8 421.1C542.4 422.3 557.4 423.0 565.8 424.4C574.1 425.8 577.4 428.5 585.8 429.4C594.1 430.3 606.6 429.6 615.8 429.9C624.9 430.2 630.9 430.8 640.8 431.1C650.6 431.4 665.6 430.9 674.8 431.5C683.9 432.1 692.3 434.1 695.8 434.6" stroke="#a39c2c" stroke-width="1.300" opacity=".23"/>
<path d="M440.8 358.7C444.8 358.8 459.1 358.5 464.8 359.2C470.5 359.8 469.8 358.6 474.8 362.7C479.8 366.8 488.0 376.7 494.8 383.7C501.6 390.7 510.5 399.3 515.8 404.7C521.1 410.0 523.3 413.2 526.8 415.7C530.3 418.2 530.1 418.3 536.8 419.7C543.5 421.1 558.5 422.6 566.8 424.0C575.1 425.4 578.5 427.2 586.8 428.0C595.1 428.7 607.6 428.2 616.8 428.5C626.0 428.8 632.0 429.4 641.8 429.7C651.6 429.9 666.6 429.5 675.8 430.1C685.0 430.7 693.3 432.7 696.8 433.2" stroke="#a39c2c" stroke-width="1.300" opacity=".23"/>
<path d="M457.5 359.4C461.5 359.5 475.8 359.2 481.5 359.9C487.2 360.6 486.5 359.3 491.5 363.4C496.5 367.5 504.7 377.4 511.5 384.4C518.3 391.4 527.2 400.1 532.5 405.4C537.8 410.7 540.0 413.9 543.5 416.4C547.0 418.9 546.8 419.3 553.5 420.4C560.2 421.5 575.2 421.8 583.5 423.2C591.8 424.6 595.2 427.7 603.5 428.7C611.8 429.7 624.3 428.9 633.5 429.2C642.7 429.5 648.7 430.1 658.5 430.4C668.3 430.7 683.3 430.2 692.5 430.8C701.7 431.4 710.0 433.4 713.5 433.9" stroke="#a39c2c" stroke-width="1.300" opacity=".23"/>
<path d="M443.7 360.3C447.7 360.4 462.1 360.2 467.7 360.8C473.4 361.5 472.7 360.2 477.7 364.3C482.7 368.4 490.9 378.3 497.7 385.3C504.6 392.3 513.4 401.0 518.7 406.3C524.1 411.7 526.2 414.8 529.7 417.3C533.2 419.8 533.1 420.0 539.7 421.3C546.4 422.6 561.4 423.7 569.7 425.1C578.1 426.5 581.4 428.8 589.7 429.6C598.1 430.5 610.6 429.8 619.7 430.1C628.9 430.4 634.9 431.1 644.7 431.3C654.6 431.6 669.6 431.1 678.7 431.7C687.9 432.3 696.2 434.3 699.7 434.8" stroke="#a39c2c" stroke-width="1.300" opacity=".23"/>
<path d="M442.0 360.1C446.0 360.2 460.3 359.9 466.0 360.6C471.6 361.3 471.0 360.0 476.0 364.1C481.0 368.2 489.1 378.1 496.0 385.1C502.8 392.1 511.6 400.8 517.0 406.1C522.3 411.4 524.5 414.6 528.0 417.1C531.5 419.6 531.3 419.7 538.0 421.1C544.6 422.5 559.6 424.0 568.0 425.4C576.3 426.7 579.6 428.6 588.0 429.4C596.3 430.2 608.8 429.6 618.0 429.9C627.1 430.2 633.1 430.8 643.0 431.1C652.8 431.4 667.8 430.9 677.0 431.5C686.1 432.1 694.5 434.1 698.0 434.6" stroke="#a39c2c" stroke-width="1.300" opacity=".23"/>
<path d="M453.9 359.4C457.9 359.5 472.2 359.3 477.9 359.9C483.6 360.6 482.9 359.3 487.9 363.4C492.9 367.5 501.1 377.4 507.9 384.4C514.7 391.4 523.6 400.1 528.9 405.4C534.2 410.8 536.4 413.9 539.9 416.4C543.4 418.9 543.2 419.0 549.9 420.4C556.6 421.8 571.6 423.4 579.9 424.8C588.2 426.2 591.6 428.0 599.9 428.7C608.2 429.5 620.7 428.9 629.9 429.2C639.1 429.5 645.1 430.2 654.9 430.4C664.7 430.7 679.7 430.2 688.9 430.8C698.1 431.4 706.4 433.4 709.9 433.9" stroke="#a39c2c" stroke-width="1.300" opacity=".23"/>
<path d="M445.4 360.1C449.4 360.2 463.8 360.0 469.4 360.6C475.1 361.3 474.4 360.1 479.4 364.1C484.4 368.2 492.6 378.1 499.4 385.1C506.3 392.1 515.1 400.8 520.4 406.1C525.8 411.5 527.9 414.6 531.4 417.1C534.9 419.6 534.8 419.8 541.4 421.1C548.1 422.5 563.1 423.7 571.4 425.1C579.8 426.5 583.1 428.6 591.4 429.4C599.8 430.2 612.3 429.7 621.4 429.9C630.6 430.2 636.6 430.9 646.4 431.1C656.3 431.4 671.3 431.0 680.4 431.5C689.6 432.1 697.9 434.1 701.4 434.6" stroke="#a39c2c" stroke-width="1.300" opacity=".23"/>
<path d="M444.4 359.9C448.4 360.0 462.8 359.8 468.4 360.4C474.1 361.1 473.4 359.9 478.4 363.9C483.4 368.0 491.6 377.9 498.4 384.9C505.3 391.9 514.1 400.6 519.4 405.9C524.8 411.3 526.9 414.4 530.4 416.9C533.9 419.4 533.8 419.6 540.4 420.9C547.1 422.2 562.1 423.3 570.4 424.7C578.8 426.1 582.1 428.4 590.4 429.2C598.8 430.1 611.3 429.5 620.4 429.7C629.6 430.0 635.6 430.7 645.4 430.9C655.3 431.2 670.3 430.8 679.4 431.3C688.6 431.9 696.9 433.9 700.4 434.4" stroke="#a39c2c" stroke-width="1.300" opacity=".23"/>
<path d="M451.2 360.5C455.2 360.5 469.5 360.3 475.2 361.0C480.9 361.6 480.2 360.4 485.2 364.5C490.2 368.5 498.4 378.5 505.2 385.5C512.0 392.5 520.9 401.1 526.2 406.5C531.5 411.8 533.7 415.0 537.2 417.5C540.7 420.0 540.5 420.0 547.2 421.5C553.9 422.9 568.9 424.5 577.2 425.9C585.5 427.3 588.9 429.0 597.2 429.8C605.5 430.5 618.0 430.0 627.2 430.3C636.4 430.5 642.4 431.2 652.2 431.5C662.0 431.7 677.0 431.3 686.2 431.9C695.4 432.4 703.7 434.4 707.2 435.0" stroke="#a39c2c" stroke-width="1.300" opacity=".23"/>
<path d="M461.6 360.1C465.6 360.2 479.9 359.9 485.6 360.6C491.2 361.2 490.6 360.0 495.6 364.1C500.6 368.2 508.7 378.1 515.6 385.1C522.4 392.1 531.2 400.7 536.6 406.1C541.9 411.4 544.1 414.6 547.6 417.1C551.1 419.6 550.9 419.8 557.6 421.1C564.2 422.3 579.2 423.3 587.6 424.7C595.9 426.0 599.2 428.5 607.6 429.4C615.9 430.3 628.4 429.6 637.6 429.9C646.7 430.2 652.7 430.8 662.6 431.1C672.4 431.3 687.4 430.9 696.6 431.5C705.7 432.1 714.1 434.1 717.6 434.6" stroke="#a39c2c" stroke-width="1.300" opacity=".23"/>
<path d="M455.9 433.7C459.9 433.6 474.2 433.9 479.9 433.2C485.6 432.5 485.2 433.6 489.9 429.7C494.6 425.8 501.6 416.9 507.9 409.7C514.2 402.5 522.6 392.7 527.9 386.7C533.2 380.7 536.6 376.9 539.9 373.7C543.2 370.4 544.9 368.8 547.9 367.2C550.9 365.6 554.1 364.1 557.9 364.2C561.7 364.3 566.2 367.9 570.9 367.9C575.6 367.9 579.2 365.4 585.9 364.4C592.6 363.4 602.9 362.8 610.9 361.9C618.9 361.0 630.1 359.6 633.9 359.2" stroke="#a39c2c" stroke-width="1.300" opacity=".23"/>
<path d="M474.9 433.9C478.9 433.8 493.2 434.0 498.9 433.4C504.6 432.7 504.2 433.8 508.9 429.9C513.6 426.0 520.6 417.0 526.9 409.9C533.2 402.7 541.6 392.9 546.9 386.9C552.2 380.9 555.6 377.1 558.9 373.9C562.2 370.6 563.9 369.0 566.9 367.4C569.9 365.8 573.1 364.5 576.9 364.4C580.7 364.2 585.2 366.5 589.9 366.5C594.6 366.6 598.2 365.3 604.9 364.6C611.6 363.8 621.9 362.9 629.9 362.1C637.9 361.2 649.1 359.8 652.9 359.4" stroke="#a39c2c" stroke-width="1.300" opacity=".23"/>
<path d="M451.4 433.1C455.4 433.0 469.8 433.2 475.4 432.6C481.1 431.9 480.8 433.0 485.4 429.1C490.1 425.1 497.1 416.2 503.4 409.1C509.8 401.9 518.1 392.1 523.4 386.1C528.8 380.1 532.1 376.3 535.4 373.1C538.8 369.8 540.4 368.1 543.4 366.6C546.4 365.0 549.6 363.6 553.4 363.6C557.3 363.6 561.8 366.5 566.4 366.5C571.1 366.6 574.8 364.6 581.4 363.8C588.1 362.9 598.4 362.1 606.4 361.3C614.4 360.4 625.6 359.0 629.4 358.6" stroke="#a39c2c" stroke-width="1.300" opacity=".23"/>
<path d="M458.5 433.1C462.5 433.0 476.9 433.3 482.5 432.6C488.2 432.0 487.9 433.0 492.5 429.1C497.2 425.2 504.2 416.3 510.5 409.1C516.9 402.0 525.2 392.1 530.5 386.1C535.9 380.1 539.2 376.4 542.5 373.1C545.9 369.9 547.5 368.2 550.5 366.6C553.5 365.0 556.7 363.5 560.5 363.6C564.4 363.7 568.9 367.2 573.5 367.2C578.2 367.3 581.9 364.8 588.5 363.8C595.2 362.8 605.5 362.2 613.5 361.3C621.5 360.5 632.7 359.1 636.5 358.6" stroke="#a39c2c" stroke-width="1.300" opacity=".23"/>
<path d="M463.2 434.6C467.2 434.5 481.6 434.7 487.2 434.1C492.9 433.4 492.6 434.5 497.2 430.6C501.9 426.7 508.9 417.7 515.2 410.6C521.6 403.4 529.9 393.6 535.2 387.6C540.6 381.6 543.9 377.8 547.2 374.6C550.6 371.3 552.2 369.7 555.2 368.1C558.2 366.5 561.4 365.1 565.2 365.1C569.1 365.0 573.6 367.7 578.2 367.7C582.9 367.8 586.6 366.1 593.2 365.3C599.9 364.4 610.2 363.6 618.2 362.8C626.2 361.9 637.4 360.5 641.2 360.1" stroke="#a39c2c" stroke-width="1.300" opacity=".23"/>
<path d="M458.2 433.3C462.2 433.2 476.5 433.5 482.2 432.8C487.9 432.1 487.5 433.2 492.2 429.3C496.9 425.4 503.9 416.5 510.2 409.3C516.5 402.1 524.9 392.3 530.2 386.3C535.5 380.3 538.9 376.5 542.2 373.3C545.5 370.0 547.2 368.4 550.2 366.8C553.2 365.2 556.4 363.9 560.2 363.8C564.0 363.7 568.5 366.0 573.2 366.1C577.9 366.1 581.5 364.8 588.2 364.0C594.9 363.2 605.2 362.4 613.2 361.5C621.2 360.6 632.4 359.2 636.2 358.8" stroke="#a39c2c" stroke-width="1.300" opacity=".23"/>
<path d="M451.6 434.4C455.6 434.3 470.0 434.5 475.6 433.9C481.3 433.2 481.0 434.3 485.6 430.4C490.3 426.5 497.3 417.5 503.6 410.4C510.0 403.2 518.3 393.4 523.6 387.4C529.0 381.4 532.3 377.6 535.6 374.4C539.0 371.1 540.6 369.5 543.6 367.9C546.6 366.3 549.8 364.8 553.6 364.9C557.5 365.0 562.0 368.5 566.6 368.6C571.3 368.6 575.0 366.1 581.6 365.1C588.3 364.1 598.6 363.4 606.6 362.6C614.6 361.7 625.8 360.3 629.6 359.9" stroke="#a39c2c" stroke-width="1.300" opacity=".23"/>
<path d="M460.9 434.0C464.9 433.9 479.3 434.2 484.9 433.5C490.6 432.8 490.3 433.9 494.9 430.0C499.6 426.1 506.6 417.2 512.9 410.0C519.3 402.8 527.6 393.0 532.9 387.0C538.3 381.0 541.6 377.2 544.9 374.0C548.3 370.7 549.9 369.1 552.9 367.5C555.9 365.9 559.1 364.3 562.9 364.5C566.8 364.6 571.3 368.3 575.9 368.4C580.6 368.4 584.3 365.7 590.9 364.7C597.6 363.7 607.9 363.1 615.9 362.2C623.9 361.3 635.1 359.9 638.9 359.5" stroke="#a39c2c" stroke-width="1.300" opacity=".23"/>
<path d="M464.6 434.1C468.6 434.0 483.0 434.2 488.6 433.6C494.3 432.9 494.0 434.0 498.6 430.1C503.3 426.1 510.3 417.2 516.6 410.1C523.0 402.9 531.3 393.1 536.6 387.1C542.0 381.1 545.3 377.3 548.6 374.1C552.0 370.8 553.6 369.1 556.6 367.6C559.6 366.0 562.8 364.6 566.6 364.6C570.5 364.5 575.0 367.0 579.6 367.0C584.3 367.0 588.0 365.5 594.6 364.8C601.3 364.0 611.6 363.1 619.6 362.3C627.6 361.4 638.8 360.0 642.6 359.6" stroke="#a39c2c" stroke-width="1.300" opacity=".23"/>
<path d="M461.1 434.5C465.1 434.4 479.5 434.6 485.1 434.0C490.8 433.3 490.5 434.4 495.1 430.5C499.8 426.5 506.8 417.6 513.1 410.5C519.5 403.3 527.8 393.5 533.1 387.5C538.5 381.5 541.8 377.7 545.1 374.5C548.5 371.2 550.1 369.5 553.1 368.0C556.1 366.4 559.3 365.0 563.1 365.0C567.0 364.9 571.5 367.5 576.1 367.5C580.8 367.6 584.5 366.0 591.1 365.2C597.8 364.3 608.1 363.5 616.1 362.7C624.1 361.8 635.3 360.4 639.1 360.0" stroke="#a39c2c" stroke-width="1.300" opacity=".23"/>
<path d="M456.9 434.1C460.9 434.0 475.3 434.3 480.9 433.6C486.6 433.0 486.3 434.0 490.9 430.1C495.6 426.2 502.6 417.3 508.9 410.1C515.3 403.0 523.6 393.1 528.9 387.1C534.3 381.1 537.6 377.4 540.9 374.1C544.3 370.9 545.9 369.2 548.9 367.6C551.9 366.0 555.1 364.5 558.9 364.6C562.8 364.7 567.3 368.3 571.9 368.3C576.6 368.3 580.3 365.8 586.9 364.8C593.6 363.8 603.9 363.2 611.9 362.3C619.9 361.5 631.1 360.1 634.9 359.6" stroke="#a39c2c" stroke-width="1.300" opacity=".23"/>
<path d="M455.9 433.8C459.9 433.7 474.3 433.9 479.9 433.3C485.6 432.6 485.3 433.7 489.9 429.8C494.6 425.8 501.6 416.9 507.9 409.8C514.3 402.6 522.6 392.8 527.9 386.8C533.3 380.8 536.6 377.0 539.9 373.8C543.3 370.5 544.9 368.8 547.9 367.3C550.9 365.7 554.1 364.3 557.9 364.3C561.8 364.2 566.3 366.9 570.9 366.9C575.6 366.9 579.3 365.3 585.9 364.5C592.6 363.6 602.9 362.8 610.9 362.0C618.9 361.1 630.1 359.7 633.9 359.3" stroke="#a39c2c" stroke-width="1.300" opacity=".23"/>
<path d="M469.9 434.7C473.9 434.6 488.2 434.9 493.9 434.2C499.5 433.5 499.2 434.6 503.9 430.7C508.5 426.8 515.5 417.9 521.9 410.7C528.2 403.5 536.5 393.7 541.9 387.7C547.2 381.7 550.5 378.0 553.9 374.7C557.2 371.5 558.9 369.8 561.9 368.2C564.9 366.6 568.0 365.3 571.9 365.2C575.7 365.1 580.2 367.6 584.9 367.6C589.5 367.7 593.2 366.2 599.9 365.4C606.5 364.6 616.9 363.8 624.9 362.9C632.9 362.0 644.0 360.7 647.9 360.2" stroke="#a39c2c" stroke-width="1.300" opacity=".23"/>
<path d="M450.5 434.0C454.5 434.0 468.8 434.2 474.5 433.5C480.1 432.9 479.8 434.0 484.5 430.0C489.1 426.1 496.1 417.2 502.5 410.0C508.8 402.9 517.1 393.0 522.5 387.0C527.8 381.0 531.1 377.3 534.5 374.0C537.8 370.8 539.5 369.1 542.5 367.5C545.5 366.0 548.6 364.4 552.5 364.5C556.3 364.7 560.8 368.5 565.5 368.5C570.1 368.5 573.8 365.8 580.5 364.7C587.1 363.7 597.5 363.1 605.5 362.2C613.5 361.4 624.6 360.0 628.5 359.5" stroke="#a39c2c" stroke-width="1.300" opacity=".23"/>
<path d="M458.1 434.0C462.1 433.9 476.4 434.2 482.1 433.5C487.8 432.8 487.4 433.9 492.1 430.0C496.8 426.1 503.8 417.2 510.1 410.0C516.4 402.8 524.8 393.0 530.1 387.0C535.4 381.0 538.8 377.3 542.1 374.0C545.4 370.8 547.1 369.1 550.1 367.5C553.1 365.9 556.3 364.5 560.1 364.5C563.9 364.5 568.4 367.5 573.1 367.6C577.8 367.6 581.4 365.6 588.1 364.7C594.8 363.8 605.1 363.1 613.1 362.2C621.1 361.3 632.3 360.0 636.1 359.5" stroke="#a39c2c" stroke-width="1.300" opacity=".23"/>
<path d="M460.1 433.1C464.1 433.0 478.4 433.2 484.1 432.6C489.7 431.9 489.4 433.0 494.1 429.1C498.7 425.1 505.7 416.2 512.1 409.1C518.4 401.9 526.7 392.1 532.1 386.1C537.4 380.1 540.7 376.3 544.1 373.1C547.4 369.8 549.1 368.1 552.1 366.6C555.1 365.0 558.2 363.5 562.1 363.6C565.9 363.6 570.4 366.7 575.1 366.8C579.7 366.8 583.4 364.7 590.1 363.8C596.7 362.8 607.1 362.1 615.1 361.3C623.1 360.4 634.2 359.0 638.1 358.6" stroke="#a39c2c" stroke-width="1.300" opacity=".23"/>
<path d="M469.7 434.6C473.7 434.5 488.0 434.8 493.7 434.1C499.4 433.4 499.0 434.5 503.7 430.6C508.4 426.7 515.4 417.8 521.7 410.6C528.0 403.4 536.4 393.6 541.7 387.6C547.0 381.6 550.4 377.9 553.7 374.6C557.0 371.4 558.7 369.7 561.7 368.1C564.7 366.5 567.9 365.1 571.7 365.1C575.5 365.1 580.0 367.9 584.7 367.9C589.4 367.9 593.0 366.2 599.7 365.3C606.4 364.5 616.7 363.7 624.7 362.8C632.7 361.9 643.9 360.6 647.7 360.1" stroke="#a39c2c" stroke-width="1.300" opacity=".23"/>
<path d="M460.5 434.0C464.5 433.9 478.8 434.1 484.5 433.5C490.2 432.8 489.8 433.9 494.5 430.0C499.2 426.1 506.2 417.1 512.5 410.0C518.8 402.8 527.2 393.0 532.5 387.0C537.8 381.0 541.2 377.2 544.5 374.0C547.8 370.7 549.5 369.1 552.5 367.5C555.5 365.9 558.7 364.5 562.5 364.5C566.3 364.5 570.8 367.6 575.5 367.6C580.2 367.6 583.8 365.6 590.5 364.7C597.2 363.8 607.5 363.0 615.5 362.2C623.5 361.3 634.7 359.9 638.5 359.5" stroke="#a39c2c" stroke-width="1.300" opacity=".23"/>
<path d="M461.1 433.8C465.1 433.7 479.5 434.0 485.1 433.3C490.8 432.7 490.5 433.7 495.1 429.8C499.8 425.9 506.8 417.0 513.1 409.8C519.5 402.7 527.8 392.8 533.1 386.8C538.5 380.8 541.8 377.1 545.1 373.8C548.5 370.6 550.1 368.9 553.1 367.3C556.1 365.7 559.3 364.3 563.1 364.3C567.0 364.3 571.5 367.4 576.1 367.4C580.8 367.4 584.5 365.4 591.1 364.5C597.8 363.6 608.1 362.9 616.1 362.0C624.1 361.2 635.3 359.8 639.1 359.3" stroke="#a39c2c" stroke-width="1.300" opacity=".23"/>
<path d="M459.8 434.8C463.8 434.8 478.1 435.0 483.8 434.3C489.4 433.7 489.1 434.8 493.8 430.8C498.4 426.9 505.4 418.0 511.8 410.8C518.1 403.7 526.4 393.8 531.8 387.8C537.1 381.8 540.4 378.1 543.8 374.8C547.1 371.6 548.8 369.9 551.8 368.3C554.8 366.8 557.9 365.2 561.8 365.3C565.6 365.5 570.1 369.2 574.8 369.3C579.4 369.3 583.1 366.6 589.8 365.5C596.4 364.5 606.8 363.9 614.8 363.0C622.8 362.2 633.9 360.8 637.8 360.3" stroke="#a39c2c" stroke-width="1.300" opacity=".23"/>
<path d="M461.1 433.9C465.1 433.8 479.4 434.0 485.1 433.4C490.8 432.7 490.4 433.8 495.1 429.9C499.8 426.0 506.8 417.0 513.1 409.9C519.4 402.7 527.8 392.9 533.1 386.9C538.4 380.9 541.8 377.1 545.1 373.9C548.4 370.6 550.1 369.0 553.1 367.4C556.1 365.8 559.3 364.5 563.1 364.4C566.9 364.2 571.4 366.6 576.1 366.6C580.8 366.7 584.4 365.3 591.1 364.6C597.8 363.8 608.1 362.9 616.1 362.1C624.1 361.2 635.3 359.8 639.1 359.4" stroke="#a39c2c" stroke-width="1.300" opacity=".23"/>
<path d="M469.3 434.8C473.3 434.7 487.6 435.0 493.3 434.3C499.0 433.6 498.6 434.7 503.3 430.8C508.0 426.9 515.0 418.0 521.3 410.8C527.6 403.6 536.0 393.8 541.3 387.8C546.6 381.8 550.0 378.1 553.3 374.8C556.6 371.6 558.3 369.9 561.3 368.3C564.3 366.7 567.5 365.2 571.3 365.3C575.1 365.4 579.6 368.9 584.3 368.9C589.0 369.0 592.6 366.5 599.3 365.5C606.0 364.5 616.3 363.9 624.3 363.0C632.3 362.1 643.5 360.8 647.3 360.3" stroke="#a39c2c" stroke-width="1.300" opacity=".23"/>
<path d="M456.4 434.2C460.4 434.2 474.7 434.4 480.4 433.7C486.0 433.1 485.7 434.2 490.4 430.2C495.0 426.3 502.0 417.4 508.4 410.2C514.7 403.1 523.0 393.2 528.4 387.2C533.7 381.2 537.0 377.5 540.4 374.2C543.7 371.0 545.4 369.3 548.4 367.7C551.4 366.2 554.5 364.8 558.4 364.7C562.2 364.6 566.7 367.1 571.4 367.1C576.0 367.2 579.7 365.7 586.4 364.9C593.0 364.2 603.4 363.3 611.4 362.4C619.4 361.6 630.5 360.2 634.4 359.7" stroke="#a39c2c" stroke-width="1.300" opacity=".23"/>
<path d="M462.8 433.3C466.8 433.2 481.2 433.4 486.8 432.8C492.5 432.1 492.2 433.2 496.8 429.3C501.5 425.3 508.5 416.4 514.8 409.3C521.2 402.1 529.5 392.3 534.8 386.3C540.2 380.3 543.5 376.5 546.8 373.3C550.2 370.0 551.8 368.3 554.8 366.8C557.8 365.2 561.0 363.6 564.8 363.8C568.7 363.9 573.2 367.6 577.8 367.6C582.5 367.6 586.2 365.0 592.8 364.0C599.5 362.9 609.8 362.3 617.8 361.5C625.8 360.6 637.0 359.2 640.8 358.8" stroke="#a39c2c" stroke-width="1.300" opacity=".23"/>
<path d="M462.3 433.5C466.3 433.4 480.6 433.6 486.3 433.0C491.9 432.3 491.6 433.4 496.3 429.5C500.9 425.5 507.9 416.6 514.3 409.5C520.6 402.3 528.9 392.5 534.3 386.5C539.6 380.5 542.9 376.7 546.3 373.5C549.6 370.2 551.3 368.5 554.3 367.0C557.3 365.4 560.4 364.1 564.3 364.0C568.1 363.9 572.6 366.3 577.3 366.3C581.9 366.4 585.6 364.9 592.3 364.2C598.9 363.4 609.3 362.5 617.3 361.7C625.3 360.8 636.4 359.4 640.3 359.0" stroke="#a39c2c" stroke-width="1.300" opacity=".23"/>
<path d="M460.6 433.6C464.6 433.6 479.0 433.8 484.6 433.1C490.3 432.5 490.0 433.6 494.6 429.6C499.3 425.7 506.3 416.8 512.6 409.6C519.0 402.5 527.3 392.6 532.6 386.6C538.0 380.6 541.3 376.9 544.6 373.6C548.0 370.4 549.6 368.7 552.6 367.1C555.6 365.6 558.8 364.1 562.6 364.1C566.5 364.2 571.0 367.5 575.6 367.5C580.3 367.6 584.0 365.3 590.6 364.3C597.3 363.4 607.6 362.7 615.6 361.8C623.6 361.0 634.8 359.6 638.6 359.1" stroke="#a39c2c" stroke-width="1.300" opacity=".23"/>
<path d="M456.4 434.5C460.4 434.4 474.8 434.6 480.4 434.0C486.1 433.3 485.8 434.4 490.4 430.5C495.1 426.5 502.1 417.6 508.4 410.5C514.8 403.3 523.1 393.5 528.4 387.5C533.8 381.5 537.1 377.7 540.4 374.5C543.8 371.2 545.4 369.5 548.4 368.0C551.4 366.4 554.6 365.1 558.4 365.0C562.3 364.8 566.8 367.1 571.4 367.2C576.1 367.2 579.8 365.9 586.4 365.2C593.1 364.4 603.4 363.5 611.4 362.7C619.4 361.8 630.6 360.4 634.4 360.0" stroke="#a39c2c" stroke-width="1.300" opacity=".23"/>
<path d="M469.1 434.0C473.1 433.9 487.5 434.2 493.1 433.5C498.8 432.9 498.5 433.9 503.1 430.0C507.8 426.1 514.8 417.2 521.1 410.0C527.5 402.9 535.8 393.0 541.1 387.0C546.5 381.0 549.8 377.3 553.1 374.0C556.5 370.8 558.1 369.1 561.1 367.5C564.1 365.9 567.3 364.6 571.1 364.5C575.0 364.4 579.5 366.7 584.1 366.8C588.8 366.8 592.5 365.5 599.1 364.7C605.8 364.0 616.1 363.1 624.1 362.2C632.1 361.4 643.3 360.0 647.1 359.5" stroke="#a39c2c" stroke-width="1.300" opacity=".23"/>
<path d="M462.0 433.9C466.0 433.8 480.3 434.0 486.0 433.4C491.7 432.7 491.3 433.8 496.0 429.9C500.7 426.0 507.7 417.0 514.0 409.9C520.3 402.7 528.7 392.9 534.0 386.9C539.3 380.9 542.7 377.1 546.0 373.9C549.3 370.6 551.0 369.0 554.0 367.4C557.0 365.8 560.2 364.4 564.0 364.4C567.8 364.4 572.3 367.4 577.0 367.4C581.7 367.5 585.3 365.5 592.0 364.6C598.7 363.7 609.0 362.9 617.0 362.1C625.0 361.2 636.2 359.8 640.0 359.4" stroke="#a39c2c" stroke-width="1.300" opacity=".23"/>
<path d="M466.3 433.8C470.3 433.7 484.6 434.0 490.3 433.3C496.0 432.7 495.6 433.7 500.3 429.8C505.0 425.9 512.0 417.0 518.3 409.8C524.6 402.7 533.0 392.8 538.3 386.8C543.6 380.8 547.0 377.1 550.3 373.8C553.6 370.6 555.3 368.9 558.3 367.3C561.3 365.7 564.5 364.4 568.3 364.3C572.1 364.3 576.6 367.0 581.3 367.1C586.0 367.1 589.6 365.4 596.3 364.5C603.0 363.7 613.3 362.9 621.3 362.0C629.3 361.2 640.5 359.8 644.3 359.3" stroke="#a39c2c" stroke-width="1.300" opacity=".23"/>
<path d="M458.2 434.3C462.2 434.2 476.6 434.4 482.2 433.8C487.9 433.1 487.6 434.2 492.2 430.3C496.9 426.3 503.9 417.4 510.2 410.3C516.6 403.1 524.9 393.3 530.2 387.3C535.6 381.3 538.9 377.5 542.2 374.3C545.6 371.0 547.2 369.3 550.2 367.8C553.2 366.2 556.4 364.9 560.2 364.8C564.1 364.7 568.6 367.1 573.2 367.2C577.9 367.2 581.6 365.7 588.2 365.0C594.9 364.2 605.2 363.3 613.2 362.5C621.2 361.6 632.4 360.2 636.2 359.8" stroke="#a39c2c" stroke-width="1.300" opacity=".23"/>
<path d="M461.3 434.1C465.3 434.0 479.6 434.2 485.3 433.6C491.0 432.9 490.6 434.0 495.3 430.1C500.0 426.1 507.0 417.2 513.3 410.1C519.6 402.9 528.0 393.1 533.3 387.1C538.6 381.1 542.0 377.3 545.3 374.1C548.6 370.8 550.3 369.1 553.3 367.6C556.3 366.0 559.5 364.5 563.3 364.6C567.1 364.6 571.6 367.8 576.3 367.8C581.0 367.9 584.6 365.7 591.3 364.8C598.0 363.8 608.3 363.1 616.3 362.3C624.3 361.4 635.5 360.0 639.3 359.6" stroke="#a39c2c" stroke-width="1.300" opacity=".23"/>
<path d="M467.3 433.5C471.3 433.4 485.6 433.6 491.3 433.0C497.0 432.3 496.6 433.4 501.3 429.5C506.0 425.5 513.0 416.6 519.3 409.5C525.6 402.3 534.0 392.5 539.3 386.5C544.6 380.5 548.0 376.7 551.3 373.5C554.6 370.2 556.3 368.5 559.3 367.0C562.3 365.4 565.5 363.8 569.3 364.0C573.1 364.1 577.6 367.6 582.3 367.7C587.0 367.7 590.6 365.2 597.3 364.2C604.0 363.2 614.3 362.5 622.3 361.7C630.3 360.8 641.5 359.4 645.3 359.0" stroke="#a39c2c" stroke-width="1.300" opacity=".23"/>
<path d="M454.8 434.6C458.8 434.5 473.1 434.8 478.8 434.1C484.5 433.5 484.1 434.5 488.8 430.6C493.5 426.7 500.5 417.8 506.8 410.6C513.1 403.5 521.5 393.6 526.8 387.6C532.1 381.6 535.5 377.9 538.8 374.6C542.1 371.4 543.8 369.7 546.8 368.1C549.8 366.5 553.0 365.0 556.8 365.1C560.6 365.2 565.1 368.6 569.8 368.6C574.5 368.6 578.1 366.3 584.8 365.3C591.5 364.4 601.8 363.7 609.8 362.8C617.8 362.0 629.0 360.6 632.8 360.1" stroke="#a39c2c" stroke-width="1.300" opacity=".23"/>
<path d="M465.0 434.0C469.0 433.9 483.3 434.2 489.0 433.5C494.7 432.8 494.3 433.9 499.0 430.0C503.7 426.1 510.7 417.2 517.0 410.0C523.3 402.8 531.7 393.0 537.0 387.0C542.3 381.0 545.7 377.2 549.0 374.0C552.3 370.8 554.0 369.1 557.0 367.5C560.0 365.9 563.2 364.5 567.0 364.5C570.8 364.5 575.3 367.5 580.0 367.5C584.7 367.5 588.3 365.6 595.0 364.7C601.7 363.8 612.0 363.1 620.0 362.2C628.0 361.3 639.2 359.9 643.0 359.5" stroke="#d6cf3a" stroke-width="1.300" opacity=".75"/>
<path d="M443.0 359.5C447.0 359.6 461.3 359.3 467.0 360.0C472.7 360.7 472.0 359.4 477.0 363.5C482.0 367.6 490.2 377.5 497.0 384.5C503.8 391.5 512.7 400.2 518.0 405.5C523.3 410.8 525.5 414.0 529.0 416.5C532.5 419.0 532.3 419.2 539.0 420.5C545.7 421.8 560.7 422.6 569.0 424.0C577.3 425.4 580.7 427.9 589.0 428.8C597.3 429.7 609.8 429.0 619.0 429.3C628.2 429.6 634.2 430.2 644.0 430.5C653.8 430.8 668.8 430.3 678.0 430.9C687.2 431.5 695.5 433.5 699.0 434.0" stroke="#c9c238" stroke-width="1.200" opacity=".5"/>
<path d="M453.0 359.5C457.0 359.6 471.3 359.3 477.0 360.0C482.7 360.7 482.0 359.4 487.0 363.5C492.0 367.6 500.2 377.5 507.0 384.5C513.8 391.5 522.7 400.2 528.0 405.5C533.3 410.8 535.5 414.0 539.0 416.5C542.5 419.0 542.3 419.2 549.0 420.5C555.7 421.8 570.7 422.6 579.0 424.0C587.3 425.4 590.7 427.9 599.0 428.8C607.3 429.7 619.8 429.0 629.0 429.3C638.2 429.6 644.2 430.2 654.0 430.5C663.8 430.8 678.8 430.3 688.0 430.9C697.2 431.5 705.5 433.5 709.0 434.0" stroke="#c9c238" stroke-width="1.200" opacity=".5"/>
<path d="M543.0 420.5C548.0 421.1 564.7 422.6 573.0 424.0C581.3 425.4 584.7 427.9 593.0 428.8C601.3 429.7 613.8 429.0 623.0 429.3C632.2 429.6 638.2 430.2 648.0 430.5C657.8 430.8 672.8 430.3 682.0 430.9C691.2 431.5 699.5 433.5 703.0 434.0" stroke="#dcd536" stroke-width="2.400" opacity=".75"/>
<path d="M553.0 367.5C554.7 367.0 559.2 364.5 563.0 364.5C566.8 364.5 571.3 367.5 576.0 367.5C580.7 367.5 584.3 365.6 591.0 364.7C597.7 363.8 608.0 363.1 616.0 362.2C624.0 361.3 635.2 359.9 639.0 359.5" stroke="#dcd536" stroke-width="2.400" opacity=".75"/>
<path d="M68.0 359.8 L72.0 359.4 L76.0 359.4 L80.0 359.8 L84.0 359.3 L88.0 359.9 L92.0 359.8 L96.0 359.2 L100.0 359.3 L104.0 359.7 L108.0 359.3 L112.0 359.2 L116.0 359.8 L120.0 359.4 L124.0 359.7 L128.0 359.2 L132.0 359.4 L136.0 359.6 L140.0 359.1 L144.0 359.3 L148.0 359.6 L152.0 359.8 L156.0 359.9 L160.0 359.2 L164.0 359.5 L168.0 359.7 L172.0 359.5 L176.0 359.6 L180.0 359.3 L184.0 359.2 L188.0 359.2 L192.0 359.1 L196.0 359.5 L200.0 359.5 L204.0 359.6 L208.0 359.2 L212.0 359.2 L216.0 359.3 L220.0 359.8 L224.0 359.9 L228.0 359.8 L232.0 359.2 L236.0 359.1 L240.0 359.9 L244.0 359.5 L248.0 359.7 L252.0 359.4 L256.0 359.5 L260.0 359.5 L264.0 359.4 L268.0 359.6 L272.0 359.1 L276.0 359.7 L280.0 359.8 L284.0 359.2 L288.0 359.5 L292.0 359.7 L296.0 359.4 L300.0 359.3 L304.0 359.2 L308.0 359.5 L312.0 359.1 L316.0 359.8 L320.0 359.7 L324.0 359.7 L328.0 359.8 L332.0 359.6 L336.0 359.4 L340.0 359.6 L344.0 359.5 L348.0 359.9 L352.0 359.7 L356.0 359.3 L360.0 359.8 L364.0 359.7 L368.0 359.7 L372.0 359.8 L376.0 359.4 L380.0 359.8 L384.0 359.8 L388.0 359.7 L392.0 359.7 L396.0 359.7 L400.0 359.4 L404.0 359.7 L408.0 359.2 L412.0 359.4 L416.0 359.5 L420.0 359.1 L424.0 359.4 L428.0 359.6 L432.0 359.6 L436.0 359.3 L440.0 359.9 L444.0 359.6 L448.0 359.4 L452.0 359.6 L456.0 359.6 L460.0 359.5 L464.0 359.4 L468.0 359.9 L472.0 359.6 L476.0 359.7 L480.0 359.7 L484.0 359.9 L488.0 359.1 L492.0 359.6 L496.0 359.7 L500.0 359.3 L504.0 359.4 L508.0 359.1 L512.0 359.3 L516.0 359.4 L520.0 359.2 L524.0 359.3 L528.0 359.8 L532.0 359.5 L536.0 359.5 L540.0 359.9 L544.0 359.6 L548.0 359.9 L552.0 359.6 L556.0 359.7 L560.0 359.2 L564.0 359.6 L568.0 359.7 L572.0 359.1 L576.0 359.8 L580.0 359.2 L584.0 359.5 L588.0 359.2 L592.0 359.5 L596.0 359.6 L600.0 359.1 L604.0 359.9 L608.0 359.4 L612.0 359.5 L616.0 359.6 L620.0 359.4 L624.0 359.3 L628.0 359.6 L632.0 359.5" stroke="#8f8a22" stroke-width="5.6" opacity="0.55" stroke-linejoin="round"/>
<path d="M68.0 359.3 L72.0 359.7 L76.0 359.3 L80.0 359.0 L84.0 359.2 L88.0 359.0 L92.0 359.2 L96.0 359.8 L100.0 359.4 L104.0 359.9 L108.0 359.7 L112.0 359.1 L116.0 360.0 L120.0 359.9 L124.0 359.1 L128.0 359.9 L132.0 359.4 L136.0 359.5 L140.0 360.0 L144.0 359.2 L148.0 359.5 L152.0 359.9 L156.0 359.7 L160.0 359.5 L164.0 360.0 L168.0 359.8 L172.0 359.6 L176.0 359.1 L180.0 359.6 L184.0 359.5 L188.0 359.2 L192.0 359.1 L196.0 359.5 L200.0 359.1 L204.0 359.4 L208.0 359.7 L212.0 359.5 L216.0 359.3 L220.0 359.6 L224.0 359.4 L228.0 359.8 L232.0 359.5 L236.0 360.0 L240.0 360.0 L244.0 359.7 L248.0 359.2 L252.0 359.1 L256.0 359.9 L260.0 359.8 L264.0 359.6 L268.0 359.4 L272.0 359.3 L276.0 359.7 L280.0 359.6 L284.0 359.6 L288.0 359.6 L292.0 359.8 L296.0 359.2 L300.0 359.2 L304.0 360.0 L308.0 359.9 L312.0 359.9 L316.0 359.0 L320.0 359.1 L324.0 359.3 L328.0 359.4 L332.0 359.6 L336.0 359.1 L340.0 359.5 L344.0 359.1 L348.0 359.1 L352.0 359.7 L356.0 359.6 L360.0 359.6 L364.0 359.4 L368.0 359.5 L372.0 359.2 L376.0 359.3 L380.0 359.7 L384.0 359.8 L388.0 359.1 L392.0 359.1 L396.0 359.8 L400.0 359.6 L404.0 359.8 L408.0 359.2 L412.0 359.4 L416.0 359.3 L420.0 359.8 L424.0 359.4 L428.0 359.7 L432.0 360.0 L436.0 359.3 L440.0 359.5 L444.0 359.7 L448.0 359.9 L452.0 359.4 L456.0 359.4 L460.0 359.1 L464.0 359.9 L468.0 359.1 L472.0 359.1 L476.0 359.6 L480.0 359.5 L484.0 359.7 L488.0 359.3 L492.0 359.8 L496.0 359.1 L500.0 359.2 L504.0 359.7 L508.0 359.1 L512.0 359.3 L516.0 359.7 L520.0 359.7 L524.0 359.3 L528.0 359.1 L532.0 359.4 L536.0 359.7 L540.0 359.4 L544.0 359.1 L548.0 359.7 L552.0 359.6 L556.0 359.9 L560.0 359.9 L564.0 359.9 L568.0 359.4 L572.0 359.8 L576.0 359.3 L580.0 359.3 L584.0 359.4 L588.0 359.9 L592.0 359.9 L596.0 359.2 L600.0 359.4 L604.0 359.4 L608.0 359.4 L612.0 359.4 L616.0 359.4 L620.0 359.2 L624.0 359.6 L628.0 359.8 L632.0 359.5" stroke="#ebe434" stroke-width="3.4" opacity="1" stroke-linejoin="round"/>
<path d="M68.0 359.9 L71.0 359.6 L74.0 359.1 L77.0 359.8 L80.0 360.0 L83.0 359.2 L86.0 358.9 L89.0 359.5 L92.0 359.6 L95.0 359.6 L98.0 360.1 L101.0 359.7 L104.0 359.9 L107.0 359.0 L110.0 359.6 L113.0 359.8 L116.0 359.0 L119.0 359.0 L122.0 359.8 L125.0 360.0 L128.0 359.0 L131.0 359.7 L134.0 359.1 L137.0 359.8 L140.0 359.7 L143.0 359.2 L146.0 359.2 L149.0 359.8 L152.0 359.5 L155.0 359.8 L158.0 359.4 L161.0 359.3 L164.0 360.1 L167.0 359.7 L170.0 359.5 L173.0 359.5 L176.0 359.8 L179.0 359.7 L182.0 360.0 L185.0 359.4 L188.0 359.9 L191.0 359.7 L194.0 359.9 L197.0 359.9 L200.0 359.9 L203.0 360.0 L206.0 360.0 L209.0 359.7 L212.0 359.5 L215.0 359.8 L218.0 359.9 L221.0 359.4 L224.0 359.4 L227.0 359.1 L230.0 359.8 L233.0 360.1 L236.0 359.4 L239.0 359.1 L242.0 359.1 L245.0 359.4 L248.0 359.3 L251.0 360.1 L254.0 359.0 L257.0 359.3 L260.0 359.0 L263.0 359.7 L266.0 359.8 L269.0 359.1 L272.0 359.0 L275.0 359.5 L278.0 359.6 L281.0 360.0 L284.0 358.9 L287.0 359.0 L290.0 359.1 L293.0 359.2 L296.0 359.2 L299.0 359.8 L302.0 359.6 L305.0 359.2 L308.0 359.1 L311.0 359.2 L314.0 359.1 L317.0 359.8 L320.0 359.3 L323.0 359.6 L326.0 359.9 L329.0 359.5 L332.0 359.2 L335.0 360.0 L338.0 360.0 L341.0 359.3 L344.0 359.6 L347.0 360.0 L350.0 359.5 L353.0 359.2 L356.0 359.0 L359.0 360.0 L362.0 359.9 L365.0 359.4 L368.0 359.5 L371.0 359.5 L374.0 359.2 L377.0 360.1 L380.0 359.7 L383.0 359.2 L386.0 358.9 L389.0 359.5 L392.0 359.3 L395.0 359.9 L398.0 359.8 L401.0 359.6 L404.0 359.1 L407.0 359.1 L410.0 359.3 L413.0 359.2 L416.0 359.9 L419.0 359.5 L422.0 359.7 L425.0 360.1 L428.0 359.2 L431.0 359.5 L434.0 359.1 L437.0 359.8 L440.0 358.9 L443.0 359.9 L446.0 359.9 L449.0 359.9 L452.0 359.0 L455.0 359.2 L458.0 359.8 L461.0 359.0 L464.0 359.5 L467.0 359.5 L470.0 360.0 L473.0 359.6 L476.0 359.9 L479.0 359.3 L482.0 359.8 L485.0 359.4 L488.0 360.0 L491.0 359.0 L494.0 359.9 L497.0 359.2 L500.0 359.6 L503.0 359.5 L506.0 359.1 L509.0 359.9 L512.0 359.3 L515.0 359.3 L518.0 359.0 L521.0 359.3 L524.0 359.5 L527.0 359.8 L530.0 359.3 L533.0 359.7 L536.0 359.0 L539.0 359.4 L542.0 359.5 L545.0 360.1 L548.0 359.9 L551.0 359.7 L554.0 358.9 L557.0 359.4 L560.0 359.8 L563.0 359.2 L566.0 359.6 L569.0 359.4 L572.0 358.9 L575.0 360.1 L578.0 359.9 L581.0 359.1 L584.0 359.6 L587.0 359.2 L590.0 359.4 L593.0 359.5 L596.0 359.3 L599.0 359.3 L602.0 359.4 L605.0 359.7 L608.0 359.2 L611.0 359.1 L614.0 359.8 L617.0 359.3 L620.0 360.0 L623.0 359.6 L626.0 359.8 L629.0 359.3 L632.0 359.9" stroke="#f8f270" stroke-width="1.4" opacity="0.85" stroke-linejoin="round"/>
<path d="M68.0 433.7 L72.0 433.7 L76.0 433.7 L80.0 434.1 L84.0 434.2 L88.0 433.7 L92.0 433.9 L96.0 434.3 L100.0 434.1 L104.0 433.7 L108.0 433.8 L112.0 433.7 L116.0 433.7 L120.0 433.9 L124.0 433.7 L128.0 434.3 L132.0 433.9 L136.0 434.0 L140.0 434.1 L144.0 434.2 L148.0 434.3 L152.0 433.9 L156.0 433.9 L160.0 433.9 L164.0 433.6 L168.0 433.9 L172.0 434.2 L176.0 434.4 L180.0 434.2 L184.0 434.1 L188.0 434.1 L192.0 433.6 L196.0 433.9 L200.0 433.9 L204.0 434.1 L208.0 433.7 L212.0 433.9 L216.0 434.0 L220.0 434.2 L224.0 434.3 L228.0 434.1 L232.0 433.7 L236.0 434.2 L240.0 434.3 L244.0 434.0 L248.0 433.9 L252.0 434.0 L256.0 433.7 L260.0 434.2 L264.0 434.4 L268.0 434.0 L272.0 434.2 L276.0 434.3 L280.0 433.8 L284.0 434.4 L288.0 434.1 L292.0 433.8 L296.0 433.7 L300.0 433.8 L304.0 434.1 L308.0 434.2 L312.0 433.9 L316.0 434.3 L320.0 433.9 L324.0 434.0 L328.0 433.7 L332.0 434.4 L336.0 433.7 L340.0 434.3 L344.0 434.0 L348.0 434.0 L352.0 434.0 L356.0 433.8 L360.0 434.3 L364.0 434.4 L368.0 434.3 L372.0 434.1 L376.0 433.7 L380.0 434.3 L384.0 433.8 L388.0 434.3 L392.0 433.8 L396.0 434.1 L400.0 434.3 L404.0 433.7 L408.0 434.0 L412.0 433.7 L416.0 433.6 L420.0 433.7 L424.0 434.4 L428.0 434.4 L432.0 434.1 L436.0 433.8 L440.0 434.1 L444.0 434.2 L448.0 433.9 L452.0 434.1 L456.0 434.2 L460.0 433.6 L464.0 433.8 L468.0 434.0 L472.0 433.7 L476.0 433.9 L480.0 434.1 L484.0 433.7 L488.0 434.0 L492.0 433.8 L496.0 434.1 L500.0 433.9 L504.0 434.1 L508.0 433.6 L512.0 434.1 L516.0 433.7 L520.0 434.4 L524.0 434.1 L528.0 434.0 L532.0 433.9 L536.0 434.1 L540.0 434.2 L544.0 434.2 L548.0 434.2 L552.0 434.0 L556.0 434.4 L560.0 434.3 L564.0 434.3 L568.0 433.9 L572.0 433.9 L576.0 434.1 L580.0 434.3 L584.0 434.0 L588.0 434.0 L592.0 433.9 L596.0 434.3 L600.0 433.9 L604.0 433.6 L608.0 434.2 L612.0 434.3 L616.0 434.2 L620.0 434.1 L624.0 434.2 L628.0 433.8 L632.0 434.1" stroke="#8f8a22" stroke-width="5.6" opacity="0.55" stroke-linejoin="round"/>
<path d="M68.0 433.6 L72.0 433.6 L76.0 433.9 L80.0 434.0 L84.0 433.9 L88.0 433.6 L92.0 434.2 L96.0 434.0 L100.0 433.7 L104.0 433.8 L108.0 433.9 L112.0 433.7 L116.0 433.6 L120.0 434.4 L124.0 434.5 L128.0 434.2 L132.0 434.4 L136.0 433.9 L140.0 434.3 L144.0 433.7 L148.0 434.2 L152.0 434.1 L156.0 434.4 L160.0 433.6 L164.0 434.3 L168.0 433.6 L172.0 434.0 L176.0 434.5 L180.0 433.5 L184.0 433.7 L188.0 433.8 L192.0 433.8 L196.0 433.6 L200.0 434.4 L204.0 434.3 L208.0 433.9 L212.0 433.9 L216.0 434.1 L220.0 433.5 L224.0 433.5 L228.0 434.4 L232.0 433.8 L236.0 434.0 L240.0 434.4 L244.0 434.5 L248.0 434.0 L252.0 433.7 L256.0 433.8 L260.0 434.4 L264.0 434.4 L268.0 433.7 L272.0 434.3 L276.0 433.9 L280.0 434.0 L284.0 433.7 L288.0 434.4 L292.0 434.5 L296.0 433.7 L300.0 434.1 L304.0 433.7 L308.0 434.4 L312.0 433.6 L316.0 433.6 L320.0 434.2 L324.0 433.8 L328.0 434.4 L332.0 434.4 L336.0 434.2 L340.0 433.6 L344.0 434.2 L348.0 434.4 L352.0 433.9 L356.0 433.6 L360.0 433.7 L364.0 433.8 L368.0 434.2 L372.0 433.7 L376.0 433.7 L380.0 433.7 L384.0 434.2 L388.0 434.3 L392.0 433.9 L396.0 434.2 L400.0 434.4 L404.0 434.1 L408.0 433.7 L412.0 433.8 L416.0 434.4 L420.0 434.2 L424.0 433.8 L428.0 434.1 L432.0 433.6 L436.0 434.5 L440.0 433.9 L444.0 434.0 L448.0 434.0 L452.0 433.5 L456.0 434.1 L460.0 433.8 L464.0 433.8 L468.0 434.3 L472.0 433.6 L476.0 433.8 L480.0 434.3 L484.0 433.7 L488.0 433.8 L492.0 434.0 L496.0 433.7 L500.0 434.4 L504.0 434.5 L508.0 433.5 L512.0 434.0 L516.0 434.3 L520.0 433.9 L524.0 434.4 L528.0 434.0 L532.0 433.7 L536.0 434.1 L540.0 434.1 L544.0 433.9 L548.0 434.2 L552.0 434.3 L556.0 434.0 L560.0 434.0 L564.0 434.3 L568.0 434.2 L572.0 434.0 L576.0 434.5 L580.0 433.7 L584.0 434.3 L588.0 433.7 L592.0 434.1 L596.0 433.7 L600.0 433.9 L604.0 434.3 L608.0 434.3 L612.0 434.3 L616.0 433.7 L620.0 434.0 L624.0 433.7 L628.0 434.1 L632.0 434.0" stroke="#ebe434" stroke-width="3.4" opacity="1" stroke-linejoin="round"/>
<path d="M68.0 433.4 L71.0 434.1 L74.0 434.3 L77.0 434.1 L80.0 434.4 L83.0 433.6 L86.0 433.6 L89.0 433.4 L92.0 434.0 L95.0 433.9 L98.0 433.9 L101.0 433.7 L104.0 434.4 L107.0 433.5 L110.0 434.5 L113.0 434.1 L116.0 434.1 L119.0 434.3 L122.0 433.7 L125.0 433.6 L128.0 433.8 L131.0 433.5 L134.0 433.8 L137.0 434.1 L140.0 434.0 L143.0 433.7 L146.0 434.1 L149.0 433.5 L152.0 434.4 L155.0 433.6 L158.0 433.7 L161.0 433.6 L164.0 434.2 L167.0 434.4 L170.0 434.3 L173.0 433.5 L176.0 433.9 L179.0 433.8 L182.0 433.7 L185.0 434.6 L188.0 433.5 L191.0 434.0 L194.0 434.3 L197.0 434.6 L200.0 433.6 L203.0 433.9 L206.0 434.3 L209.0 433.4 L212.0 433.7 L215.0 434.5 L218.0 433.6 L221.0 433.9 L224.0 433.8 L227.0 433.9 L230.0 433.5 L233.0 433.4 L236.0 434.6 L239.0 434.3 L242.0 434.3 L245.0 433.7 L248.0 433.7 L251.0 434.1 L254.0 433.7 L257.0 434.0 L260.0 434.5 L263.0 433.8 L266.0 433.8 L269.0 434.6 L272.0 434.1 L275.0 433.4 L278.0 433.9 L281.0 434.2 L284.0 433.5 L287.0 433.8 L290.0 434.2 L293.0 434.4 L296.0 434.1 L299.0 434.5 L302.0 434.0 L305.0 433.9 L308.0 434.4 L311.0 433.9 L314.0 434.3 L317.0 433.7 L320.0 433.8 L323.0 433.6 L326.0 434.1 L329.0 433.6 L332.0 433.6 L335.0 433.7 L338.0 434.0 L341.0 433.8 L344.0 433.9 L347.0 434.6 L350.0 434.2 L353.0 434.4 L356.0 433.6 L359.0 433.9 L362.0 433.5 L365.0 434.2 L368.0 433.8 L371.0 433.7 L374.0 433.4 L377.0 433.6 L380.0 433.7 L383.0 433.9 L386.0 434.5 L389.0 434.3 L392.0 433.7 L395.0 433.8 L398.0 433.6 L401.0 434.5 L404.0 433.8 L407.0 434.3 L410.0 434.3 L413.0 434.5 L416.0 433.4 L419.0 433.8 L422.0 433.9 L425.0 433.5 L428.0 434.5 L431.0 433.8 L434.0 434.3 L437.0 434.0 L440.0 433.5 L443.0 433.9 L446.0 433.7 L449.0 433.4 L452.0 433.6 L455.0 434.1 L458.0 433.4 L461.0 433.8 L464.0 433.9 L467.0 434.1 L470.0 433.6 L473.0 434.2 L476.0 433.7 L479.0 434.3 L482.0 434.2 L485.0 433.6 L488.0 433.6 L491.0 433.7 L494.0 434.3 L497.0 433.9 L500.0 433.9 L503.0 434.4 L506.0 433.7 L509.0 433.8 L512.0 433.8 L515.0 433.7 L518.0 433.4 L521.0 433.4 L524.0 434.2 L527.0 434.1 L530.0 434.4 L533.0 434.6 L536.0 433.8 L539.0 434.2 L542.0 434.5 L545.0 433.7 L548.0 434.2 L551.0 434.2 L554.0 434.5 L557.0 434.4 L560.0 433.7 L563.0 434.2 L566.0 433.5 L569.0 433.9 L572.0 433.9 L575.0 433.5 L578.0 433.9 L581.0 433.8 L584.0 434.0 L587.0 433.7 L590.0 433.6 L593.0 433.9 L596.0 434.0 L599.0 433.6 L602.0 434.2 L605.0 433.7 L608.0 433.5 L611.0 433.8 L614.0 433.9 L617.0 433.6 L620.0 434.1 L623.0 434.2 L626.0 434.1 L629.0 434.2 L632.0 433.4" stroke="#f8f270" stroke-width="1.4" opacity="0.85" stroke-linejoin="round"/>
</g>
<text x="54.500" y="354.500" font-size="9" fill="#f1eda4">CA.</text><path d="M60.500 356.700h10" stroke="#fff" stroke-width="1.600"/>
<path d="M182.300 506.500l-2.700 8h5.400z" fill="#f4f0a8"/>
<clipPath id="c4"><rect x="711" y="290" width="559" height="216"/></clipPath>
<g clip-path="url(#c4)" fill="none" stroke-linecap="round" stroke-linejoin="round">
<g filter="url(#bl3)">
<path d="M700.0 353.0C796.7 353.0 1183.3 353.0 1280.0 353.0" stroke="#7c1148" stroke-width="24" opacity="0.55"/>
<path d="M700.0 456.0C796.7 456.0 1183.3 456.0 1280.0 456.0" stroke="#7c1148" stroke-width="30" opacity="0.6"/>
<path d="M700.0 352.0C706.7 354.3 725.0 359.3 740.0 366.0C755.0 372.7 776.2 384.7 790.0 392.0C803.8 399.3 809.7 402.7 823.0 410.0C836.3 417.3 854.7 429.0 870.0 436.0C885.3 443.0 907.5 449.3 915.0 452.0" stroke="#7c1148" stroke-width="30" opacity="0.62"/>
<path d="M715.0 362.0C722.5 366.3 745.8 379.7 760.0 388.0C774.2 396.3 785.0 403.3 800.0 412.0C815.0 420.7 835.0 432.8 850.0 440.0C865.0 447.2 883.3 452.5 890.0 455.0" stroke="#7c1148" stroke-width="22" opacity="0.45"/>
<path d="M760.0 450.0C770.5 442.5 803.0 417.0 823.0 405.0C843.0 393.0 860.5 385.5 880.0 378.0C899.5 370.5 918.3 364.3 940.0 360.0C961.7 355.7 998.3 353.3 1010.0 352.0" stroke="#7c1148" stroke-width="30" opacity="0.55"/>
<path d="M823.0 404.0C835.8 400.8 873.8 391.0 900.0 385.0C926.2 379.0 956.2 372.5 980.0 368.0C1003.8 363.5 1032.5 359.7 1043.0 358.0" stroke="#7c1148" stroke-width="18" opacity="0.4"/>
<path d="M1033.0 352.0C1039.7 354.3 1058.0 359.3 1073.0 366.0C1088.0 372.7 1109.2 384.7 1123.0 392.0C1136.8 399.3 1142.7 402.7 1156.0 410.0C1169.3 417.3 1187.7 429.0 1203.0 436.0C1218.3 443.0 1240.5 449.3 1248.0 452.0" stroke="#7c1148" stroke-width="30" opacity="0.62"/>
<path d="M1048.0 362.0C1055.5 366.3 1078.8 379.7 1093.0 388.0C1107.2 396.3 1118.0 403.3 1133.0 412.0C1148.0 420.7 1168.0 432.8 1183.0 440.0C1198.0 447.2 1216.3 452.5 1223.0 455.0" stroke="#7c1148" stroke-width="22" opacity="0.45"/>
<path d="M1093.0 450.0C1103.5 442.5 1136.0 417.0 1156.0 405.0C1176.0 393.0 1193.5 385.5 1213.0 378.0C1232.5 370.5 1251.3 364.3 1273.0 360.0C1294.7 355.7 1331.3 353.3 1343.0 352.0" stroke="#7c1148" stroke-width="30" opacity="0.55"/>
<path d="M1156.0 404.0C1168.8 400.8 1206.8 391.0 1233.0 385.0C1259.2 379.0 1289.2 372.5 1313.0 368.0C1336.8 363.5 1365.5 359.7 1376.0 358.0" stroke="#7c1148" stroke-width="18" opacity="0.4"/>
<path d="M367.0 352.0C373.7 354.3 392.0 359.3 407.0 366.0C422.0 372.7 443.2 384.7 457.0 392.0C470.8 399.3 476.7 402.7 490.0 410.0C503.3 417.3 521.7 429.0 537.0 436.0C552.3 443.0 574.5 449.3 582.0 452.0" stroke="#7c1148" stroke-width="30" opacity="0.62"/>
<path d="M382.0 362.0C389.5 366.3 412.8 379.7 427.0 388.0C441.2 396.3 452.0 403.3 467.0 412.0C482.0 420.7 502.0 432.8 517.0 440.0C532.0 447.2 550.3 452.5 557.0 455.0" stroke="#7c1148" stroke-width="22" opacity="0.45"/>
<path d="M427.0 450.0C437.5 442.5 470.0 417.0 490.0 405.0C510.0 393.0 527.5 385.5 547.0 378.0C566.5 370.5 585.3 364.3 607.0 360.0C628.7 355.7 665.3 353.3 677.0 352.0" stroke="#7c1148" stroke-width="30" opacity="0.55"/>
<path d="M490.0 404.0C502.8 400.8 540.8 391.0 567.0 385.0C593.2 379.0 623.2 372.5 647.0 368.0C670.8 363.5 699.5 359.7 710.0 358.0" stroke="#7c1148" stroke-width="18" opacity="0.4"/>
</g>
<g filter="url(#bl2)">
<path d="M1080.0 345.0C1083.3 343.5 1093.3 338.1 1100.0 336.0C1106.7 333.9 1113.3 332.7 1120.0 332.5C1126.7 332.3 1133.7 333.2 1140.0 335.0C1146.3 336.8 1155.0 341.7 1158.0 343.0" stroke="#8a1450" stroke-width="3" opacity=".7"/>
</g>
<g filter="url(#bl2)">
<path d="M24.0 455.0C30.7 454.3 50.7 453.5 64.0 451.0C77.3 448.5 91.5 445.0 104.0 440.0C116.5 435.0 130.2 427.0 139.0 421.0C147.8 415.0 151.1 411.1 157.0 404.0C162.9 396.9 168.6 387.1 174.6 378.6C180.6 370.1 187.8 358.8 193.0 353.0C198.2 347.2 201.2 346.0 206.0 344.0C210.8 342.0 211.2 341.7 221.5 341.0C231.8 340.3 255.9 339.5 268.0 340.0C280.1 340.5 286.2 342.2 294.0 344.0C301.8 345.8 307.8 347.5 315.0 350.5C322.2 353.5 329.3 358.8 337.0 362.0C344.7 365.2 353.2 369.2 361.0 370.0C368.8 370.8 376.8 369.3 384.0 367.0C391.2 364.7 398.0 358.8 404.0 356.0C410.0 353.2 414.7 350.8 420.0 350.5C425.3 350.2 430.3 350.6 436.0 354.0C441.7 357.4 447.8 365.3 454.0 371.0C460.2 376.7 467.0 382.5 473.0 388.0C479.0 393.5 482.7 398.0 490.0 404.0C497.3 410.0 508.8 418.3 517.0 424.0C525.2 429.7 532.8 434.2 539.0 438.0C545.2 441.8 549.0 444.3 554.5 446.5C560.0 448.7 563.2 450.1 572.0 451.0C580.8 451.9 601.2 451.8 607.0 452.0" stroke="#96145a" stroke-width="6" opacity=".5"/>
<path d="M34.0 458.0C42.3 457.0 70.3 454.3 84.0 452.0C97.7 449.7 105.6 448.8 116.0 444.0C126.4 439.2 139.7 429.5 146.5 423.0C153.3 416.5 152.1 412.0 157.0 405.0C161.9 398.0 169.5 389.0 176.0 381.0C182.5 373.0 189.7 362.5 196.0 357.0C202.3 351.5 206.0 349.8 214.0 348.0C222.0 346.2 233.2 345.8 244.0 346.0C254.8 346.2 269.2 347.8 279.0 349.0C288.8 350.2 293.8 352.0 303.0 353.0C312.2 354.0 328.8 354.7 334.0 355.0" stroke="#96145a" stroke-width="6" opacity=".5"/>
<path d="M94.0 452.0C100.7 448.8 123.5 440.9 134.0 433.0C144.5 425.1 149.3 414.3 157.0 404.5C164.7 394.7 172.8 382.1 180.0 374.0C187.2 365.9 193.5 359.8 200.0 356.0C206.5 352.2 210.0 352.2 219.0 351.5C228.0 350.8 241.5 351.5 254.0 352.0C266.5 352.5 287.3 354.1 294.0 354.5" stroke="#96145a" stroke-width="6" opacity=".5"/>
<path d="M274.0 352.0C280.7 353.3 302.3 356.8 314.0 360.0C325.7 363.2 336.2 368.5 344.0 371.0C351.8 373.5 355.2 374.7 361.0 375.0C366.8 375.3 373.2 374.8 379.0 373.0C384.8 371.2 390.8 366.7 396.0 364.0C401.2 361.3 405.7 358.7 410.0 357.0C414.3 355.3 417.0 353.7 422.0 354.0C427.0 354.3 433.8 355.7 440.0 359.0C446.2 362.3 450.7 366.3 459.0 374.0C467.3 381.7 479.5 396.0 490.0 405.0C500.5 414.0 512.5 421.7 522.0 428.0C531.5 434.3 539.5 439.2 547.0 443.0C554.5 446.8 558.7 449.0 567.0 450.5C575.3 452.0 592.0 451.8 597.0 452.0" stroke="#96145a" stroke-width="6" opacity=".5"/>
<path d="M249.0 451.0C253.2 450.2 265.7 448.0 274.0 446.0C282.3 444.0 291.5 440.8 299.0 439.0C306.5 437.2 312.7 436.2 319.0 435.5C325.3 434.8 331.2 434.5 337.0 435.0C342.8 435.5 348.7 436.7 354.0 438.5C359.3 440.3 364.3 443.9 369.0 446.0C373.7 448.1 377.0 450.0 382.0 451.0C387.0 452.0 396.2 451.8 399.0 452.0" stroke="#96145a" stroke-width="6" opacity=".5"/>
<path d="M34.0 452.0C40.7 452.8 58.3 455.6 74.0 457.0C89.7 458.4 109.7 460.3 128.0 460.6C146.3 460.9 166.3 460.1 184.0 459.0C201.7 457.9 217.3 455.2 234.0 454.0C250.7 452.8 275.7 452.3 284.0 452.0" stroke="#96145a" stroke-width="6" opacity=".5"/>
<path d="M194.0 452.0C204.0 452.8 234.0 455.3 254.0 457.0C274.0 458.7 294.0 461.3 314.0 462.0C334.0 462.7 354.0 462.0 374.0 461.0C394.0 460.0 417.3 457.5 434.0 456.0C450.7 454.5 467.3 452.7 474.0 452.0" stroke="#96145a" stroke-width="6" opacity=".5"/>
<path d="M357.0 455.0C363.7 454.3 383.7 453.5 397.0 451.0C410.3 448.5 424.5 445.0 437.0 440.0C449.5 435.0 463.2 427.0 472.0 421.0C480.8 415.0 484.1 411.1 490.0 404.0C495.9 396.9 501.6 387.1 507.6 378.6C513.6 370.1 520.8 358.8 526.0 353.0C531.2 347.2 534.2 346.0 539.0 344.0C543.8 342.0 544.2 341.7 554.5 341.0C564.8 340.3 588.9 339.5 601.0 340.0C613.1 340.5 619.2 342.2 627.0 344.0C634.8 345.8 640.8 347.5 648.0 350.5C655.2 353.5 662.3 358.8 670.0 362.0C677.7 365.2 686.2 369.2 694.0 370.0C701.8 370.8 709.8 369.3 717.0 367.0C724.2 364.7 731.0 358.8 737.0 356.0C743.0 353.2 747.7 350.8 753.0 350.5C758.3 350.2 763.3 350.6 769.0 354.0C774.7 357.4 780.8 365.3 787.0 371.0C793.2 376.7 800.0 382.5 806.0 388.0C812.0 393.5 815.7 398.0 823.0 404.0C830.3 410.0 841.8 418.3 850.0 424.0C858.2 429.7 865.8 434.2 872.0 438.0C878.2 441.8 882.0 444.3 887.5 446.5C893.0 448.7 896.2 450.1 905.0 451.0C913.8 451.9 934.2 451.8 940.0 452.0" stroke="#96145a" stroke-width="6" opacity=".5"/>
<path d="M367.0 458.0C375.3 457.0 403.3 454.3 417.0 452.0C430.7 449.7 438.6 448.8 449.0 444.0C459.4 439.2 472.7 429.5 479.5 423.0C486.3 416.5 485.1 412.0 490.0 405.0C494.9 398.0 502.5 389.0 509.0 381.0C515.5 373.0 522.7 362.5 529.0 357.0C535.3 351.5 539.0 349.8 547.0 348.0C555.0 346.2 566.2 345.8 577.0 346.0C587.8 346.2 602.2 347.8 612.0 349.0C621.8 350.2 626.8 352.0 636.0 353.0C645.2 354.0 661.8 354.7 667.0 355.0" stroke="#96145a" stroke-width="6" opacity=".5"/>
<path d="M427.0 452.0C433.7 448.8 456.5 440.9 467.0 433.0C477.5 425.1 482.3 414.3 490.0 404.5C497.7 394.7 505.8 382.1 513.0 374.0C520.2 365.9 526.5 359.8 533.0 356.0C539.5 352.2 543.0 352.2 552.0 351.5C561.0 350.8 574.5 351.5 587.0 352.0C599.5 352.5 620.3 354.1 627.0 354.5" stroke="#96145a" stroke-width="6" opacity=".5"/>
<path d="M607.0 352.0C613.7 353.3 635.3 356.8 647.0 360.0C658.7 363.2 669.2 368.5 677.0 371.0C684.8 373.5 688.2 374.7 694.0 375.0C699.8 375.3 706.2 374.8 712.0 373.0C717.8 371.2 723.8 366.7 729.0 364.0C734.2 361.3 738.7 358.7 743.0 357.0C747.3 355.3 750.0 353.7 755.0 354.0C760.0 354.3 766.8 355.7 773.0 359.0C779.2 362.3 783.7 366.3 792.0 374.0C800.3 381.7 812.5 396.0 823.0 405.0C833.5 414.0 845.5 421.7 855.0 428.0C864.5 434.3 872.5 439.2 880.0 443.0C887.5 446.8 891.7 449.0 900.0 450.5C908.3 452.0 925.0 451.8 930.0 452.0" stroke="#96145a" stroke-width="6" opacity=".5"/>
<path d="M582.0 451.0C586.2 450.2 598.7 448.0 607.0 446.0C615.3 444.0 624.5 440.8 632.0 439.0C639.5 437.2 645.7 436.2 652.0 435.5C658.3 434.8 664.2 434.5 670.0 435.0C675.8 435.5 681.7 436.7 687.0 438.5C692.3 440.3 697.3 443.9 702.0 446.0C706.7 448.1 710.0 450.0 715.0 451.0C720.0 452.0 729.2 451.8 732.0 452.0" stroke="#96145a" stroke-width="6" opacity=".5"/>
<path d="M367.0 452.0C373.7 452.8 391.3 455.6 407.0 457.0C422.7 458.4 442.7 460.3 461.0 460.6C479.3 460.9 499.3 460.1 517.0 459.0C534.7 457.9 550.3 455.2 567.0 454.0C583.7 452.8 608.7 452.3 617.0 452.0" stroke="#96145a" stroke-width="6" opacity=".5"/>
<path d="M527.0 452.0C537.0 452.8 567.0 455.3 587.0 457.0C607.0 458.7 627.0 461.3 647.0 462.0C667.0 462.7 687.0 462.0 707.0 461.0C727.0 460.0 750.3 457.5 767.0 456.0C783.7 454.5 800.3 452.7 807.0 452.0" stroke="#96145a" stroke-width="6" opacity=".5"/>
<path d="M690.0 455.0C696.7 454.3 716.7 453.5 730.0 451.0C743.3 448.5 757.5 445.0 770.0 440.0C782.5 435.0 796.2 427.0 805.0 421.0C813.8 415.0 817.1 411.1 823.0 404.0C828.9 396.9 834.6 387.1 840.6 378.6C846.6 370.1 853.8 358.8 859.0 353.0C864.2 347.2 867.2 346.0 872.0 344.0C876.8 342.0 877.2 341.7 887.5 341.0C897.8 340.3 921.9 339.5 934.0 340.0C946.1 340.5 952.2 342.2 960.0 344.0C967.8 345.8 973.8 347.5 981.0 350.5C988.2 353.5 995.3 358.8 1003.0 362.0C1010.7 365.2 1019.2 369.2 1027.0 370.0C1034.8 370.8 1042.8 369.3 1050.0 367.0C1057.2 364.7 1064.0 358.8 1070.0 356.0C1076.0 353.2 1080.7 350.8 1086.0 350.5C1091.3 350.2 1096.3 350.6 1102.0 354.0C1107.7 357.4 1113.8 365.3 1120.0 371.0C1126.2 376.7 1133.0 382.5 1139.0 388.0C1145.0 393.5 1148.7 398.0 1156.0 404.0C1163.3 410.0 1174.8 418.3 1183.0 424.0C1191.2 429.7 1198.8 434.2 1205.0 438.0C1211.2 441.8 1215.0 444.3 1220.5 446.5C1226.0 448.7 1229.2 450.1 1238.0 451.0C1246.8 451.9 1267.2 451.8 1273.0 452.0" stroke="#96145a" stroke-width="6" opacity=".5"/>
<path d="M700.0 458.0C708.3 457.0 736.3 454.3 750.0 452.0C763.7 449.7 771.6 448.8 782.0 444.0C792.4 439.2 805.7 429.5 812.5 423.0C819.3 416.5 818.1 412.0 823.0 405.0C827.9 398.0 835.5 389.0 842.0 381.0C848.5 373.0 855.7 362.5 862.0 357.0C868.3 351.5 872.0 349.8 880.0 348.0C888.0 346.2 899.2 345.8 910.0 346.0C920.8 346.2 935.2 347.8 945.0 349.0C954.8 350.2 959.8 352.0 969.0 353.0C978.2 354.0 994.8 354.7 1000.0 355.0" stroke="#96145a" stroke-width="6" opacity=".5"/>
<path d="M760.0 452.0C766.7 448.8 789.5 440.9 800.0 433.0C810.5 425.1 815.3 414.3 823.0 404.5C830.7 394.7 838.8 382.1 846.0 374.0C853.2 365.9 859.5 359.8 866.0 356.0C872.5 352.2 876.0 352.2 885.0 351.5C894.0 350.8 907.5 351.5 920.0 352.0C932.5 352.5 953.3 354.1 960.0 354.5" stroke="#96145a" stroke-width="6" opacity=".5"/>
<path d="M940.0 352.0C946.7 353.3 968.3 356.8 980.0 360.0C991.7 363.2 1002.2 368.5 1010.0 371.0C1017.8 373.5 1021.2 374.7 1027.0 375.0C1032.8 375.3 1039.2 374.8 1045.0 373.0C1050.8 371.2 1056.8 366.7 1062.0 364.0C1067.2 361.3 1071.7 358.7 1076.0 357.0C1080.3 355.3 1083.0 353.7 1088.0 354.0C1093.0 354.3 1099.8 355.7 1106.0 359.0C1112.2 362.3 1116.7 366.3 1125.0 374.0C1133.3 381.7 1145.5 396.0 1156.0 405.0C1166.5 414.0 1178.5 421.7 1188.0 428.0C1197.5 434.3 1205.5 439.2 1213.0 443.0C1220.5 446.8 1224.7 449.0 1233.0 450.5C1241.3 452.0 1258.0 451.8 1263.0 452.0" stroke="#96145a" stroke-width="6" opacity=".5"/>
<path d="M915.0 451.0C919.2 450.2 931.7 448.0 940.0 446.0C948.3 444.0 957.5 440.8 965.0 439.0C972.5 437.2 978.7 436.2 985.0 435.5C991.3 434.8 997.2 434.5 1003.0 435.0C1008.8 435.5 1014.7 436.7 1020.0 438.5C1025.3 440.3 1030.3 443.9 1035.0 446.0C1039.7 448.1 1043.0 450.0 1048.0 451.0C1053.0 452.0 1062.2 451.8 1065.0 452.0" stroke="#96145a" stroke-width="6" opacity=".5"/>
<path d="M700.0 452.0C706.7 452.8 724.3 455.6 740.0 457.0C755.7 458.4 775.7 460.3 794.0 460.6C812.3 460.9 832.3 460.1 850.0 459.0C867.7 457.9 883.3 455.2 900.0 454.0C916.7 452.8 941.7 452.3 950.0 452.0" stroke="#96145a" stroke-width="6" opacity=".5"/>
<path d="M860.0 452.0C870.0 452.8 900.0 455.3 920.0 457.0C940.0 458.7 960.0 461.3 980.0 462.0C1000.0 462.7 1020.0 462.0 1040.0 461.0C1060.0 460.0 1083.3 457.5 1100.0 456.0C1116.7 454.5 1133.3 452.7 1140.0 452.0" stroke="#96145a" stroke-width="6" opacity=".5"/>
<path d="M1023.0 455.0C1029.7 454.3 1049.7 453.5 1063.0 451.0C1076.3 448.5 1090.5 445.0 1103.0 440.0C1115.5 435.0 1129.2 427.0 1138.0 421.0C1146.8 415.0 1150.1 411.1 1156.0 404.0C1161.9 396.9 1167.6 387.1 1173.6 378.6C1179.6 370.1 1186.8 358.8 1192.0 353.0C1197.2 347.2 1200.2 346.0 1205.0 344.0C1209.8 342.0 1210.2 341.7 1220.5 341.0C1230.8 340.3 1254.9 339.5 1267.0 340.0C1279.1 340.5 1285.2 342.2 1293.0 344.0C1300.8 345.8 1306.8 347.5 1314.0 350.5C1321.2 353.5 1328.3 358.8 1336.0 362.0C1343.7 365.2 1352.2 369.2 1360.0 370.0C1367.8 370.8 1375.8 369.3 1383.0 367.0C1390.2 364.7 1397.0 358.8 1403.0 356.0C1409.0 353.2 1413.7 350.8 1419.0 350.5C1424.3 350.2 1429.3 350.6 1435.0 354.0C1440.7 357.4 1446.8 365.3 1453.0 371.0C1459.2 376.7 1466.0 382.5 1472.0 388.0C1478.0 393.5 1481.7 398.0 1489.0 404.0C1496.3 410.0 1507.8 418.3 1516.0 424.0C1524.2 429.7 1531.8 434.2 1538.0 438.0C1544.2 441.8 1548.0 444.3 1553.5 446.5C1559.0 448.7 1562.2 450.1 1571.0 451.0C1579.8 451.9 1600.2 451.8 1606.0 452.0" stroke="#96145a" stroke-width="6" opacity=".5"/>
<path d="M1033.0 458.0C1041.3 457.0 1069.3 454.3 1083.0 452.0C1096.7 449.7 1104.6 448.8 1115.0 444.0C1125.4 439.2 1138.7 429.5 1145.5 423.0C1152.3 416.5 1151.1 412.0 1156.0 405.0C1160.9 398.0 1168.5 389.0 1175.0 381.0C1181.5 373.0 1188.7 362.5 1195.0 357.0C1201.3 351.5 1205.0 349.8 1213.0 348.0C1221.0 346.2 1232.2 345.8 1243.0 346.0C1253.8 346.2 1268.2 347.8 1278.0 349.0C1287.8 350.2 1292.8 352.0 1302.0 353.0C1311.2 354.0 1327.8 354.7 1333.0 355.0" stroke="#96145a" stroke-width="6" opacity=".5"/>
<path d="M1093.0 452.0C1099.7 448.8 1122.5 440.9 1133.0 433.0C1143.5 425.1 1148.3 414.3 1156.0 404.5C1163.7 394.7 1171.8 382.1 1179.0 374.0C1186.2 365.9 1192.5 359.8 1199.0 356.0C1205.5 352.2 1209.0 352.2 1218.0 351.5C1227.0 350.8 1240.5 351.5 1253.0 352.0C1265.5 352.5 1286.3 354.1 1293.0 354.5" stroke="#96145a" stroke-width="6" opacity=".5"/>
<path d="M1273.0 352.0C1279.7 353.3 1301.3 356.8 1313.0 360.0C1324.7 363.2 1335.2 368.5 1343.0 371.0C1350.8 373.5 1354.2 374.7 1360.0 375.0C1365.8 375.3 1372.2 374.8 1378.0 373.0C1383.8 371.2 1389.8 366.7 1395.0 364.0C1400.2 361.3 1404.7 358.7 1409.0 357.0C1413.3 355.3 1416.0 353.7 1421.0 354.0C1426.0 354.3 1432.8 355.7 1439.0 359.0C1445.2 362.3 1449.7 366.3 1458.0 374.0C1466.3 381.7 1478.5 396.0 1489.0 405.0C1499.5 414.0 1511.5 421.7 1521.0 428.0C1530.5 434.3 1538.5 439.2 1546.0 443.0C1553.5 446.8 1557.7 449.0 1566.0 450.5C1574.3 452.0 1591.0 451.8 1596.0 452.0" stroke="#96145a" stroke-width="6" opacity=".5"/>
<path d="M1248.0 451.0C1252.2 450.2 1264.7 448.0 1273.0 446.0C1281.3 444.0 1290.5 440.8 1298.0 439.0C1305.5 437.2 1311.7 436.2 1318.0 435.5C1324.3 434.8 1330.2 434.5 1336.0 435.0C1341.8 435.5 1347.7 436.7 1353.0 438.5C1358.3 440.3 1363.3 443.9 1368.0 446.0C1372.7 448.1 1376.0 450.0 1381.0 451.0C1386.0 452.0 1395.2 451.8 1398.0 452.0" stroke="#96145a" stroke-width="6" opacity=".5"/>
<path d="M1033.0 452.0C1039.7 452.8 1057.3 455.6 1073.0 457.0C1088.7 458.4 1108.7 460.3 1127.0 460.6C1145.3 460.9 1165.3 460.1 1183.0 459.0C1200.7 457.9 1216.3 455.2 1233.0 454.0C1249.7 452.8 1274.7 452.3 1283.0 452.0" stroke="#96145a" stroke-width="6" opacity=".5"/>
<path d="M1193.0 452.0C1203.0 452.8 1233.0 455.3 1253.0 457.0C1273.0 458.7 1293.0 461.3 1313.0 462.0C1333.0 462.7 1353.0 462.0 1373.0 461.0C1393.0 460.0 1416.3 457.5 1433.0 456.0C1449.7 454.5 1466.3 452.7 1473.0 452.0" stroke="#96145a" stroke-width="6" opacity=".5"/>
<path d="M700 355.0H1280" stroke="#96145a" stroke-width="7.2" opacity=".55"/>
<path d="M700 451.5H1280" stroke="#96145a" stroke-width="7.6" opacity=".55"/>
<path d="M700 457H1280" stroke="#96145a" stroke-width="6.4" opacity=".55"/>
</g><g filter="url(#bl1)">
<path d="M24.0 455.0C30.7 454.3 50.7 453.5 64.0 451.0C77.3 448.5 91.5 445.0 104.0 440.0C116.5 435.0 130.2 427.0 139.0 421.0C147.8 415.0 151.1 411.1 157.0 404.0C162.9 396.9 168.6 387.1 174.6 378.6C180.6 370.1 187.8 358.8 193.0 353.0C198.2 347.2 201.2 346.0 206.0 344.0C210.8 342.0 211.2 341.7 221.5 341.0C231.8 340.3 255.9 339.5 268.0 340.0C280.1 340.5 286.2 342.2 294.0 344.0C301.8 345.8 307.8 347.5 315.0 350.5C322.2 353.5 329.3 358.8 337.0 362.0C344.7 365.2 353.2 369.2 361.0 370.0C368.8 370.8 376.8 369.3 384.0 367.0C391.2 364.7 398.0 358.8 404.0 356.0C410.0 353.2 414.7 350.8 420.0 350.5C425.3 350.2 430.3 350.6 436.0 354.0C441.7 357.4 447.8 365.3 454.0 371.0C460.2 376.7 467.0 382.5 473.0 388.0C479.0 393.5 482.7 398.0 490.0 404.0C497.3 410.0 508.8 418.3 517.0 424.0C525.2 429.7 532.8 434.2 539.0 438.0C545.2 441.8 549.0 444.3 554.5 446.5C560.0 448.7 563.2 450.1 572.0 451.0C580.8 451.9 601.2 451.8 607.0 452.0" stroke="#e22a84" stroke-width="2.500" opacity=".92"/>
<path d="M34.0 458.0C42.3 457.0 70.3 454.3 84.0 452.0C97.7 449.7 105.6 448.8 116.0 444.0C126.4 439.2 139.7 429.5 146.5 423.0C153.3 416.5 152.1 412.0 157.0 405.0C161.9 398.0 169.5 389.0 176.0 381.0C182.5 373.0 189.7 362.5 196.0 357.0C202.3 351.5 206.0 349.8 214.0 348.0C222.0 346.2 233.2 345.8 244.0 346.0C254.8 346.2 269.2 347.8 279.0 349.0C288.8 350.2 293.8 352.0 303.0 353.0C312.2 354.0 328.8 354.7 334.0 355.0" stroke="#e22a84" stroke-width="2.500" opacity=".92"/>
<path d="M94.0 452.0C100.7 448.8 123.5 440.9 134.0 433.0C144.5 425.1 149.3 414.3 157.0 404.5C164.7 394.7 172.8 382.1 180.0 374.0C187.2 365.9 193.5 359.8 200.0 356.0C206.5 352.2 210.0 352.2 219.0 351.5C228.0 350.8 241.5 351.5 254.0 352.0C266.5 352.5 287.3 354.1 294.0 354.5" stroke="#e22a84" stroke-width="2.500" opacity=".92"/>
<path d="M274.0 352.0C280.7 353.3 302.3 356.8 314.0 360.0C325.7 363.2 336.2 368.5 344.0 371.0C351.8 373.5 355.2 374.7 361.0 375.0C366.8 375.3 373.2 374.8 379.0 373.0C384.8 371.2 390.8 366.7 396.0 364.0C401.2 361.3 405.7 358.7 410.0 357.0C414.3 355.3 417.0 353.7 422.0 354.0C427.0 354.3 433.8 355.7 440.0 359.0C446.2 362.3 450.7 366.3 459.0 374.0C467.3 381.7 479.5 396.0 490.0 405.0C500.5 414.0 512.5 421.7 522.0 428.0C531.5 434.3 539.5 439.2 547.0 443.0C554.5 446.8 558.7 449.0 567.0 450.5C575.3 452.0 592.0 451.8 597.0 452.0" stroke="#e22a84" stroke-width="2.500" opacity=".92"/>
<path d="M249.0 451.0C253.2 450.2 265.7 448.0 274.0 446.0C282.3 444.0 291.5 440.8 299.0 439.0C306.5 437.2 312.7 436.2 319.0 435.5C325.3 434.8 331.2 434.5 337.0 435.0C342.8 435.5 348.7 436.7 354.0 438.5C359.3 440.3 364.3 443.9 369.0 446.0C373.7 448.1 377.0 450.0 382.0 451.0C387.0 452.0 396.2 451.8 399.0 452.0" stroke="#e22a84" stroke-width="2.500" opacity=".92"/>
<path d="M34.0 452.0C40.7 452.8 58.3 455.6 74.0 457.0C89.7 458.4 109.7 460.3 128.0 460.6C146.3 460.9 166.3 460.1 184.0 459.0C201.7 457.9 217.3 455.2 234.0 454.0C250.7 452.8 275.7 452.3 284.0 452.0" stroke="#e22a84" stroke-width="2.500" opacity=".92"/>
<path d="M194.0 452.0C204.0 452.8 234.0 455.3 254.0 457.0C274.0 458.7 294.0 461.3 314.0 462.0C334.0 462.7 354.0 462.0 374.0 461.0C394.0 460.0 417.3 457.5 434.0 456.0C450.7 454.5 467.3 452.7 474.0 452.0" stroke="#e22a84" stroke-width="2.500" opacity=".92"/>
<path d="M357.0 455.0C363.7 454.3 383.7 453.5 397.0 451.0C410.3 448.5 424.5 445.0 437.0 440.0C449.5 435.0 463.2 427.0 472.0 421.0C480.8 415.0 484.1 411.1 490.0 404.0C495.9 396.9 501.6 387.1 507.6 378.6C513.6 370.1 520.8 358.8 526.0 353.0C531.2 347.2 534.2 346.0 539.0 344.0C543.8 342.0 544.2 341.7 554.5 341.0C564.8 340.3 588.9 339.5 601.0 340.0C613.1 340.5 619.2 342.2 627.0 344.0C634.8 345.8 640.8 347.5 648.0 350.5C655.2 353.5 662.3 358.8 670.0 362.0C677.7 365.2 686.2 369.2 694.0 370.0C701.8 370.8 709.8 369.3 717.0 367.0C724.2 364.7 731.0 358.8 737.0 356.0C743.0 353.2 747.7 350.8 753.0 350.5C758.3 350.2 763.3 350.6 769.0 354.0C774.7 357.4 780.8 365.3 787.0 371.0C793.2 376.7 800.0 382.5 806.0 388.0C812.0 393.5 815.7 398.0 823.0 404.0C830.3 410.0 841.8 418.3 850.0 424.0C858.2 429.7 865.8 434.2 872.0 438.0C878.2 441.8 882.0 444.3 887.5 446.5C893.0 448.7 896.2 450.1 905.0 451.0C913.8 451.9 934.2 451.8 940.0 452.0" stroke="#e22a84" stroke-width="2.500" opacity=".92"/>
<path d="M367.0 458.0C375.3 457.0 403.3 454.3 417.0 452.0C430.7 449.7 438.6 448.8 449.0 444.0C459.4 439.2 472.7 429.5 479.5 423.0C486.3 416.5 485.1 412.0 490.0 405.0C494.9 398.0 502.5 389.0 509.0 381.0C515.5 373.0 522.7 362.5 529.0 357.0C535.3 351.5 539.0 349.8 547.0 348.0C555.0 346.2 566.2 345.8 577.0 346.0C587.8 346.2 602.2 347.8 612.0 349.0C621.8 350.2 626.8 352.0 636.0 353.0C645.2 354.0 661.8 354.7 667.0 355.0" stroke="#e22a84" stroke-width="2.500" opacity=".92"/>
<path d="M427.0 452.0C433.7 448.8 456.5 440.9 467.0 433.0C477.5 425.1 482.3 414.3 490.0 404.5C497.7 394.7 505.8 382.1 513.0 374.0C520.2 365.9 526.5 359.8 533.0 356.0C539.5 352.2 543.0 352.2 552.0 351.5C561.0 350.8 574.5 351.5 587.0 352.0C599.5 352.5 620.3 354.1 627.0 354.5" stroke="#e22a84" stroke-width="2.500" opacity=".92"/>
<path d="M607.0 352.0C613.7 353.3 635.3 356.8 647.0 360.0C658.7 363.2 669.2 368.5 677.0 371.0C684.8 373.5 688.2 374.7 694.0 375.0C699.8 375.3 706.2 374.8 712.0 373.0C717.8 371.2 723.8 366.7 729.0 364.0C734.2 361.3 738.7 358.7 743.0 357.0C747.3 355.3 750.0 353.7 755.0 354.0C760.0 354.3 766.8 355.7 773.0 359.0C779.2 362.3 783.7 366.3 792.0 374.0C800.3 381.7 812.5 396.0 823.0 405.0C833.5 414.0 845.5 421.7 855.0 428.0C864.5 434.3 872.5 439.2 880.0 443.0C887.5 446.8 891.7 449.0 900.0 450.5C908.3 452.0 925.0 451.8 930.0 452.0" stroke="#e22a84" stroke-width="2.500" opacity=".92"/>
<path d="M582.0 451.0C586.2 450.2 598.7 448.0 607.0 446.0C615.3 444.0 624.5 440.8 632.0 439.0C639.5 437.2 645.7 436.2 652.0 435.5C658.3 434.8 664.2 434.5 670.0 435.0C675.8 435.5 681.7 436.7 687.0 438.5C692.3 440.3 697.3 443.9 702.0 446.0C706.7 448.1 710.0 450.0 715.0 451.0C720.0 452.0 729.2 451.8 732.0 452.0" stroke="#e22a84" stroke-width="2.500" opacity=".92"/>
<path d="M367.0 452.0C373.7 452.8 391.3 455.6 407.0 457.0C422.7 458.4 442.7 460.3 461.0 460.6C479.3 460.9 499.3 460.1 517.0 459.0C534.7 457.9 550.3 455.2 567.0 454.0C583.7 452.8 608.7 452.3 617.0 452.0" stroke="#e22a84" stroke-width="2.500" opacity=".92"/>
<path d="M527.0 452.0C537.0 452.8 567.0 455.3 587.0 457.0C607.0 458.7 627.0 461.3 647.0 462.0C667.0 462.7 687.0 462.0 707.0 461.0C727.0 460.0 750.3 457.5 767.0 456.0C783.7 454.5 800.3 452.7 807.0 452.0" stroke="#e22a84" stroke-width="2.500" opacity=".92"/>
<path d="M690.0 455.0C696.7 454.3 716.7 453.5 730.0 451.0C743.3 448.5 757.5 445.0 770.0 440.0C782.5 435.0 796.2 427.0 805.0 421.0C813.8 415.0 817.1 411.1 823.0 404.0C828.9 396.9 834.6 387.1 840.6 378.6C846.6 370.1 853.8 358.8 859.0 353.0C864.2 347.2 867.2 346.0 872.0 344.0C876.8 342.0 877.2 341.7 887.5 341.0C897.8 340.3 921.9 339.5 934.0 340.0C946.1 340.5 952.2 342.2 960.0 344.0C967.8 345.8 973.8 347.5 981.0 350.5C988.2 353.5 995.3 358.8 1003.0 362.0C1010.7 365.2 1019.2 369.2 1027.0 370.0C1034.8 370.8 1042.8 369.3 1050.0 367.0C1057.2 364.7 1064.0 358.8 1070.0 356.0C1076.0 353.2 1080.7 350.8 1086.0 350.5C1091.3 350.2 1096.3 350.6 1102.0 354.0C1107.7 357.4 1113.8 365.3 1120.0 371.0C1126.2 376.7 1133.0 382.5 1139.0 388.0C1145.0 393.5 1148.7 398.0 1156.0 404.0C1163.3 410.0 1174.8 418.3 1183.0 424.0C1191.2 429.7 1198.8 434.2 1205.0 438.0C1211.2 441.8 1215.0 444.3 1220.5 446.5C1226.0 448.7 1229.2 450.1 1238.0 451.0C1246.8 451.9 1267.2 451.8 1273.0 452.0" stroke="#e22a84" stroke-width="2.500" opacity=".92"/>
<path d="M700.0 458.0C708.3 457.0 736.3 454.3 750.0 452.0C763.7 449.7 771.6 448.8 782.0 444.0C792.4 439.2 805.7 429.5 812.5 423.0C819.3 416.5 818.1 412.0 823.0 405.0C827.9 398.0 835.5 389.0 842.0 381.0C848.5 373.0 855.7 362.5 862.0 357.0C868.3 351.5 872.0 349.8 880.0 348.0C888.0 346.2 899.2 345.8 910.0 346.0C920.8 346.2 935.2 347.8 945.0 349.0C954.8 350.2 959.8 352.0 969.0 353.0C978.2 354.0 994.8 354.7 1000.0 355.0" stroke="#e22a84" stroke-width="2.500" opacity=".92"/>
<path d="M760.0 452.0C766.7 448.8 789.5 440.9 800.0 433.0C810.5 425.1 815.3 414.3 823.0 404.5C830.7 394.7 838.8 382.1 846.0 374.0C853.2 365.9 859.5 359.8 866.0 356.0C872.5 352.2 876.0 352.2 885.0 351.5C894.0 350.8 907.5 351.5 920.0 352.0C932.5 352.5 953.3 354.1 960.0 354.5" stroke="#e22a84" stroke-width="2.500" opacity=".92"/>
<path d="M940.0 352.0C946.7 353.3 968.3 356.8 980.0 360.0C991.7 363.2 1002.2 368.5 1010.0 371.0C1017.8 373.5 1021.2 374.7 1027.0 375.0C1032.8 375.3 1039.2 374.8 1045.0 373.0C1050.8 371.2 1056.8 366.7 1062.0 364.0C1067.2 361.3 1071.7 358.7 1076.0 357.0C1080.3 355.3 1083.0 353.7 1088.0 354.0C1093.0 354.3 1099.8 355.7 1106.0 359.0C1112.2 362.3 1116.7 366.3 1125.0 374.0C1133.3 381.7 1145.5 396.0 1156.0 405.0C1166.5 414.0 1178.5 421.7 1188.0 428.0C1197.5 434.3 1205.5 439.2 1213.0 443.0C1220.5 446.8 1224.7 449.0 1233.0 450.5C1241.3 452.0 1258.0 451.8 1263.0 452.0" stroke="#e22a84" stroke-width="2.500" opacity=".92"/>
<path d="M915.0 451.0C919.2 450.2 931.7 448.0 940.0 446.0C948.3 444.0 957.5 440.8 965.0 439.0C972.5 437.2 978.7 436.2 985.0 435.5C991.3 434.8 997.2 434.5 1003.0 435.0C1008.8 435.5 1014.7 436.7 1020.0 438.5C1025.3 440.3 1030.3 443.9 1035.0 446.0C1039.7 448.1 1043.0 450.0 1048.0 451.0C1053.0 452.0 1062.2 451.8 1065.0 452.0" stroke="#e22a84" stroke-width="2.500" opacity=".92"/>
<path d="M700.0 452.0C706.7 452.8 724.3 455.6 740.0 457.0C755.7 458.4 775.7 460.3 794.0 460.6C812.3 460.9 832.3 460.1 850.0 459.0C867.7 457.9 883.3 455.2 900.0 454.0C916.7 452.8 941.7 452.3 950.0 452.0" stroke="#e22a84" stroke-width="2.500" opacity=".92"/>
<path d="M860.0 452.0C870.0 452.8 900.0 455.3 920.0 457.0C940.0 458.7 960.0 461.3 980.0 462.0C1000.0 462.7 1020.0 462.0 1040.0 461.0C1060.0 460.0 1083.3 457.5 1100.0 456.0C1116.7 454.5 1133.3 452.7 1140.0 452.0" stroke="#e22a84" stroke-width="2.500" opacity=".92"/>
<path d="M1023.0 455.0C1029.7 454.3 1049.7 453.5 1063.0 451.0C1076.3 448.5 1090.5 445.0 1103.0 440.0C1115.5 435.0 1129.2 427.0 1138.0 421.0C1146.8 415.0 1150.1 411.1 1156.0 404.0C1161.9 396.9 1167.6 387.1 1173.6 378.6C1179.6 370.1 1186.8 358.8 1192.0 353.0C1197.2 347.2 1200.2 346.0 1205.0 344.0C1209.8 342.0 1210.2 341.7 1220.5 341.0C1230.8 340.3 1254.9 339.5 1267.0 340.0C1279.1 340.5 1285.2 342.2 1293.0 344.0C1300.8 345.8 1306.8 347.5 1314.0 350.5C1321.2 353.5 1328.3 358.8 1336.0 362.0C1343.7 365.2 1352.2 369.2 1360.0 370.0C1367.8 370.8 1375.8 369.3 1383.0 367.0C1390.2 364.7 1397.0 358.8 1403.0 356.0C1409.0 353.2 1413.7 350.8 1419.0 350.5C1424.3 350.2 1429.3 350.6 1435.0 354.0C1440.7 357.4 1446.8 365.3 1453.0 371.0C1459.2 376.7 1466.0 382.5 1472.0 388.0C1478.0 393.5 1481.7 398.0 1489.0 404.0C1496.3 410.0 1507.8 418.3 1516.0 424.0C1524.2 429.7 1531.8 434.2 1538.0 438.0C1544.2 441.8 1548.0 444.3 1553.5 446.5C1559.0 448.7 1562.2 450.1 1571.0 451.0C1579.8 451.9 1600.2 451.8 1606.0 452.0" stroke="#e22a84" stroke-width="2.500" opacity=".92"/>
<path d="M1033.0 458.0C1041.3 457.0 1069.3 454.3 1083.0 452.0C1096.7 449.7 1104.6 448.8 1115.0 444.0C1125.4 439.2 1138.7 429.5 1145.5 423.0C1152.3 416.5 1151.1 412.0 1156.0 405.0C1160.9 398.0 1168.5 389.0 1175.0 381.0C1181.5 373.0 1188.7 362.5 1195.0 357.0C1201.3 351.5 1205.0 349.8 1213.0 348.0C1221.0 346.2 1232.2 345.8 1243.0 346.0C1253.8 346.2 1268.2 347.8 1278.0 349.0C1287.8 350.2 1292.8 352.0 1302.0 353.0C1311.2 354.0 1327.8 354.7 1333.0 355.0" stroke="#e22a84" stroke-width="2.500" opacity=".92"/>
<path d="M1093.0 452.0C1099.7 448.8 1122.5 440.9 1133.0 433.0C1143.5 425.1 1148.3 414.3 1156.0 404.5C1163.7 394.7 1171.8 382.1 1179.0 374.0C1186.2 365.9 1192.5 359.8 1199.0 356.0C1205.5 352.2 1209.0 352.2 1218.0 351.5C1227.0 350.8 1240.5 351.5 1253.0 352.0C1265.5 352.5 1286.3 354.1 1293.0 354.5" stroke="#e22a84" stroke-width="2.500" opacity=".92"/>
<path d="M1273.0 352.0C1279.7 353.3 1301.3 356.8 1313.0 360.0C1324.7 363.2 1335.2 368.5 1343.0 371.0C1350.8 373.5 1354.2 374.7 1360.0 375.0C1365.8 375.3 1372.2 374.8 1378.0 373.0C1383.8 371.2 1389.8 366.7 1395.0 364.0C1400.2 361.3 1404.7 358.7 1409.0 357.0C1413.3 355.3 1416.0 353.7 1421.0 354.0C1426.0 354.3 1432.8 355.7 1439.0 359.0C1445.2 362.3 1449.7 366.3 1458.0 374.0C1466.3 381.7 1478.5 396.0 1489.0 405.0C1499.5 414.0 1511.5 421.7 1521.0 428.0C1530.5 434.3 1538.5 439.2 1546.0 443.0C1553.5 446.8 1557.7 449.0 1566.0 450.5C1574.3 452.0 1591.0 451.8 1596.0 452.0" stroke="#e22a84" stroke-width="2.500" opacity=".92"/>
<path d="M1248.0 451.0C1252.2 450.2 1264.7 448.0 1273.0 446.0C1281.3 444.0 1290.5 440.8 1298.0 439.0C1305.5 437.2 1311.7 436.2 1318.0 435.5C1324.3 434.8 1330.2 434.5 1336.0 435.0C1341.8 435.5 1347.7 436.7 1353.0 438.5C1358.3 440.3 1363.3 443.9 1368.0 446.0C1372.7 448.1 1376.0 450.0 1381.0 451.0C1386.0 452.0 1395.2 451.8 1398.0 452.0" stroke="#e22a84" stroke-width="2.500" opacity=".92"/>
<path d="M1033.0 452.0C1039.7 452.8 1057.3 455.6 1073.0 457.0C1088.7 458.4 1108.7 460.3 1127.0 460.6C1145.3 460.9 1165.3 460.1 1183.0 459.0C1200.7 457.9 1216.3 455.2 1233.0 454.0C1249.7 452.8 1274.7 452.3 1283.0 452.0" stroke="#e22a84" stroke-width="2.500" opacity=".92"/>
<path d="M1193.0 452.0C1203.0 452.8 1233.0 455.3 1253.0 457.0C1273.0 458.7 1293.0 461.3 1313.0 462.0C1333.0 462.7 1353.0 462.0 1373.0 461.0C1393.0 460.0 1416.3 457.5 1433.0 456.0C1449.7 454.5 1466.3 452.7 1473.0 452.0" stroke="#e22a84" stroke-width="2.500" opacity=".92"/>
<path d="M700 355.0H1280" stroke="#cf2278" stroke-width="3.2" opacity=".95"/>
<path d="M700 451.5H1280" stroke="#e52a88" stroke-width="3.6" opacity=".95"/>
<path d="M700 457H1280" stroke="#c01e70" stroke-width="2.4" opacity=".95"/>
<path d="M24.0 455.0C30.7 454.3 50.7 453.5 64.0 451.0C77.3 448.5 91.5 445.0 104.0 440.0C116.5 435.0 130.2 427.0 139.0 421.0C147.8 415.0 151.1 411.1 157.0 404.0C162.9 396.9 168.6 387.1 174.6 378.6C180.6 370.1 187.8 358.8 193.0 353.0C198.2 347.2 201.2 346.0 206.0 344.0C210.8 342.0 211.2 341.7 221.5 341.0C231.8 340.3 255.9 339.5 268.0 340.0C280.1 340.5 286.2 342.2 294.0 344.0C301.8 345.8 307.8 347.5 315.0 350.5C322.2 353.5 329.3 358.8 337.0 362.0C344.7 365.2 353.2 369.2 361.0 370.0C368.8 370.8 376.8 369.3 384.0 367.0C391.2 364.7 398.0 358.8 404.0 356.0C410.0 353.2 414.7 350.8 420.0 350.5C425.3 350.2 430.3 350.6 436.0 354.0C441.7 357.4 447.8 365.3 454.0 371.0C460.2 376.7 467.0 382.5 473.0 388.0C479.0 393.5 482.7 398.0 490.0 404.0C497.3 410.0 508.8 418.3 517.0 424.0C525.2 429.7 532.8 434.2 539.0 438.0C545.2 441.8 549.0 444.3 554.5 446.5C560.0 448.7 563.2 450.1 572.0 451.0C580.8 451.9 601.2 451.8 607.0 452.0" stroke="#fa7cba" stroke-width="1" opacity=".32"/>
<path d="M34.0 458.0C42.3 457.0 70.3 454.3 84.0 452.0C97.7 449.7 105.6 448.8 116.0 444.0C126.4 439.2 139.7 429.5 146.5 423.0C153.3 416.5 152.1 412.0 157.0 405.0C161.9 398.0 169.5 389.0 176.0 381.0C182.5 373.0 189.7 362.5 196.0 357.0C202.3 351.5 206.0 349.8 214.0 348.0C222.0 346.2 233.2 345.8 244.0 346.0C254.8 346.2 269.2 347.8 279.0 349.0C288.8 350.2 293.8 352.0 303.0 353.0C312.2 354.0 328.8 354.7 334.0 355.0" stroke="#fa7cba" stroke-width="1" opacity=".32"/>
<path d="M94.0 452.0C100.7 448.8 123.5 440.9 134.0 433.0C144.5 425.1 149.3 414.3 157.0 404.5C164.7 394.7 172.8 382.1 180.0 374.0C187.2 365.9 193.5 359.8 200.0 356.0C206.5 352.2 210.0 352.2 219.0 351.5C228.0 350.8 241.5 351.5 254.0 352.0C266.5 352.5 287.3 354.1 294.0 354.5" stroke="#fa7cba" stroke-width="1" opacity=".32"/>
<path d="M274.0 352.0C280.7 353.3 302.3 356.8 314.0 360.0C325.7 363.2 336.2 368.5 344.0 371.0C351.8 373.5 355.2 374.7 361.0 375.0C366.8 375.3 373.2 374.8 379.0 373.0C384.8 371.2 390.8 366.7 396.0 364.0C401.2 361.3 405.7 358.7 410.0 357.0C414.3 355.3 417.0 353.7 422.0 354.0C427.0 354.3 433.8 355.7 440.0 359.0C446.2 362.3 450.7 366.3 459.0 374.0C467.3 381.7 479.5 396.0 490.0 405.0C500.5 414.0 512.5 421.7 522.0 428.0C531.5 434.3 539.5 439.2 547.0 443.0C554.5 446.8 558.7 449.0 567.0 450.5C575.3 452.0 592.0 451.8 597.0 452.0" stroke="#fa7cba" stroke-width="1" opacity=".32"/>
<path d="M249.0 451.0C253.2 450.2 265.7 448.0 274.0 446.0C282.3 444.0 291.5 440.8 299.0 439.0C306.5 437.2 312.7 436.2 319.0 435.5C325.3 434.8 331.2 434.5 337.0 435.0C342.8 435.5 348.7 436.7 354.0 438.5C359.3 440.3 364.3 443.9 369.0 446.0C373.7 448.1 377.0 450.0 382.0 451.0C387.0 452.0 396.2 451.8 399.0 452.0" stroke="#fa7cba" stroke-width="1" opacity=".32"/>
<path d="M34.0 452.0C40.7 452.8 58.3 455.6 74.0 457.0C89.7 458.4 109.7 460.3 128.0 460.6C146.3 460.9 166.3 460.1 184.0 459.0C201.7 457.9 217.3 455.2 234.0 454.0C250.7 452.8 275.7 452.3 284.0 452.0" stroke="#fa7cba" stroke-width="1" opacity=".32"/>
<path d="M194.0 452.0C204.0 452.8 234.0 455.3 254.0 457.0C274.0 458.7 294.0 461.3 314.0 462.0C334.0 462.7 354.0 462.0 374.0 461.0C394.0 460.0 417.3 457.5 434.0 456.0C450.7 454.5 467.3 452.7 474.0 452.0" stroke="#fa7cba" stroke-width="1" opacity=".32"/>
<path d="M357.0 455.0C363.7 454.3 383.7 453.5 397.0 451.0C410.3 448.5 424.5 445.0 437.0 440.0C449.5 435.0 463.2 427.0 472.0 421.0C480.8 415.0 484.1 411.1 490.0 404.0C495.9 396.9 501.6 387.1 507.6 378.6C513.6 370.1 520.8 358.8 526.0 353.0C531.2 347.2 534.2 346.0 539.0 344.0C543.8 342.0 544.2 341.7 554.5 341.0C564.8 340.3 588.9 339.5 601.0 340.0C613.1 340.5 619.2 342.2 627.0 344.0C634.8 345.8 640.8 347.5 648.0 350.5C655.2 353.5 662.3 358.8 670.0 362.0C677.7 365.2 686.2 369.2 694.0 370.0C701.8 370.8 709.8 369.3 717.0 367.0C724.2 364.7 731.0 358.8 737.0 356.0C743.0 353.2 747.7 350.8 753.0 350.5C758.3 350.2 763.3 350.6 769.0 354.0C774.7 357.4 780.8 365.3 787.0 371.0C793.2 376.7 800.0 382.5 806.0 388.0C812.0 393.5 815.7 398.0 823.0 404.0C830.3 410.0 841.8 418.3 850.0 424.0C858.2 429.7 865.8 434.2 872.0 438.0C878.2 441.8 882.0 444.3 887.5 446.5C893.0 448.7 896.2 450.1 905.0 451.0C913.8 451.9 934.2 451.8 940.0 452.0" stroke="#fa7cba" stroke-width="1" opacity=".32"/>
<path d="M367.0 458.0C375.3 457.0 403.3 454.3 417.0 452.0C430.7 449.7 438.6 448.8 449.0 444.0C459.4 439.2 472.7 429.5 479.5 423.0C486.3 416.5 485.1 412.0 490.0 405.0C494.9 398.0 502.5 389.0 509.0 381.0C515.5 373.0 522.7 362.5 529.0 357.0C535.3 351.5 539.0 349.8 547.0 348.0C555.0 346.2 566.2 345.8 577.0 346.0C587.8 346.2 602.2 347.8 612.0 349.0C621.8 350.2 626.8 352.0 636.0 353.0C645.2 354.0 661.8 354.7 667.0 355.0" stroke="#fa7cba" stroke-width="1" opacity=".32"/>
<path d="M427.0 452.0C433.7 448.8 456.5 440.9 467.0 433.0C477.5 425.1 482.3 414.3 490.0 404.5C497.7 394.7 505.8 382.1 513.0 374.0C520.2 365.9 526.5 359.8 533.0 356.0C539.5 352.2 543.0 352.2 552.0 351.5C561.0 350.8 574.5 351.5 587.0 352.0C599.5 352.5 620.3 354.1 627.0 354.5" stroke="#fa7cba" stroke-width="1" opacity=".32"/>
<path d="M607.0 352.0C613.7 353.3 635.3 356.8 647.0 360.0C658.7 363.2 669.2 368.5 677.0 371.0C684.8 373.5 688.2 374.7 694.0 375.0C699.8 375.3 706.2 374.8 712.0 373.0C717.8 371.2 723.8 366.7 729.0 364.0C734.2 361.3 738.7 358.7 743.0 357.0C747.3 355.3 750.0 353.7 755.0 354.0C760.0 354.3 766.8 355.7 773.0 359.0C779.2 362.3 783.7 366.3 792.0 374.0C800.3 381.7 812.5 396.0 823.0 405.0C833.5 414.0 845.5 421.7 855.0 428.0C864.5 434.3 872.5 439.2 880.0 443.0C887.5 446.8 891.7 449.0 900.0 450.5C908.3 452.0 925.0 451.8 930.0 452.0" stroke="#fa7cba" stroke-width="1" opacity=".32"/>
<path d="M582.0 451.0C586.2 450.2 598.7 448.0 607.0 446.0C615.3 444.0 624.5 440.8 632.0 439.0C639.5 437.2 645.7 436.2 652.0 435.5C658.3 434.8 664.2 434.5 670.0 435.0C675.8 435.5 681.7 436.7 687.0 438.5C692.3 440.3 697.3 443.9 702.0 446.0C706.7 448.1 710.0 450.0 715.0 451.0C720.0 452.0 729.2 451.8 732.0 452.0" stroke="#fa7cba" stroke-width="1" opacity=".32"/>
<path d="M367.0 452.0C373.7 452.8 391.3 455.6 407.0 457.0C422.7 458.4 442.7 460.3 461.0 460.6C479.3 460.9 499.3 460.1 517.0 459.0C534.7 457.9 550.3 455.2 567.0 454.0C583.7 452.8 608.7 452.3 617.0 452.0" stroke="#fa7cba" stroke-width="1" opacity=".32"/>
<path d="M527.0 452.0C537.0 452.8 567.0 455.3 587.0 457.0C607.0 458.7 627.0 461.3 647.0 462.0C667.0 462.7 687.0 462.0 707.0 461.0C727.0 460.0 750.3 457.5 767.0 456.0C783.7 454.5 800.3 452.7 807.0 452.0" stroke="#fa7cba" stroke-width="1" opacity=".32"/>
<path d="M690.0 455.0C696.7 454.3 716.7 453.5 730.0 451.0C743.3 448.5 757.5 445.0 770.0 440.0C782.5 435.0 796.2 427.0 805.0 421.0C813.8 415.0 817.1 411.1 823.0 404.0C828.9 396.9 834.6 387.1 840.6 378.6C846.6 370.1 853.8 358.8 859.0 353.0C864.2 347.2 867.2 346.0 872.0 344.0C876.8 342.0 877.2 341.7 887.5 341.0C897.8 340.3 921.9 339.5 934.0 340.0C946.1 340.5 952.2 342.2 960.0 344.0C967.8 345.8 973.8 347.5 981.0 350.5C988.2 353.5 995.3 358.8 1003.0 362.0C1010.7 365.2 1019.2 369.2 1027.0 370.0C1034.8 370.8 1042.8 369.3 1050.0 367.0C1057.2 364.7 1064.0 358.8 1070.0 356.0C1076.0 353.2 1080.7 350.8 1086.0 350.5C1091.3 350.2 1096.3 350.6 1102.0 354.0C1107.7 357.4 1113.8 365.3 1120.0 371.0C1126.2 376.7 1133.0 382.5 1139.0 388.0C1145.0 393.5 1148.7 398.0 1156.0 404.0C1163.3 410.0 1174.8 418.3 1183.0 424.0C1191.2 429.7 1198.8 434.2 1205.0 438.0C1211.2 441.8 1215.0 444.3 1220.5 446.5C1226.0 448.7 1229.2 450.1 1238.0 451.0C1246.8 451.9 1267.2 451.8 1273.0 452.0" stroke="#fa7cba" stroke-width="1" opacity=".32"/>
<path d="M700.0 458.0C708.3 457.0 736.3 454.3 750.0 452.0C763.7 449.7 771.6 448.8 782.0 444.0C792.4 439.2 805.7 429.5 812.5 423.0C819.3 416.5 818.1 412.0 823.0 405.0C827.9 398.0 835.5 389.0 842.0 381.0C848.5 373.0 855.7 362.5 862.0 357.0C868.3 351.5 872.0 349.8 880.0 348.0C888.0 346.2 899.2 345.8 910.0 346.0C920.8 346.2 935.2 347.8 945.0 349.0C954.8 350.2 959.8 352.0 969.0 353.0C978.2 354.0 994.8 354.7 1000.0 355.0" stroke="#fa7cba" stroke-width="1" opacity=".32"/>
<path d="M760.0 452.0C766.7 448.8 789.5 440.9 800.0 433.0C810.5 425.1 815.3 414.3 823.0 404.5C830.7 394.7 838.8 382.1 846.0 374.0C853.2 365.9 859.5 359.8 866.0 356.0C872.5 352.2 876.0 352.2 885.0 351.5C894.0 350.8 907.5 351.5 920.0 352.0C932.5 352.5 953.3 354.1 960.0 354.5" stroke="#fa7cba" stroke-width="1" opacity=".32"/>
<path d="M940.0 352.0C946.7 353.3 968.3 356.8 980.0 360.0C991.7 363.2 1002.2 368.5 1010.0 371.0C1017.8 373.5 1021.2 374.7 1027.0 375.0C1032.8 375.3 1039.2 374.8 1045.0 373.0C1050.8 371.2 1056.8 366.7 1062.0 364.0C1067.2 361.3 1071.7 358.7 1076.0 357.0C1080.3 355.3 1083.0 353.7 1088.0 354.0C1093.0 354.3 1099.8 355.7 1106.0 359.0C1112.2 362.3 1116.7 366.3 1125.0 374.0C1133.3 381.7 1145.5 396.0 1156.0 405.0C1166.5 414.0 1178.5 421.7 1188.0 428.0C1197.5 434.3 1205.5 439.2 1213.0 443.0C1220.5 446.8 1224.7 449.0 1233.0 450.5C1241.3 452.0 1258.0 451.8 1263.0 452.0" stroke="#fa7cba" stroke-width="1" opacity=".32"/>
<path d="M915.0 451.0C919.2 450.2 931.7 448.0 940.0 446.0C948.3 444.0 957.5 440.8 965.0 439.0C972.5 437.2 978.7 436.2 985.0 435.5C991.3 434.8 997.2 434.5 1003.0 435.0C1008.8 435.5 1014.7 436.7 1020.0 438.5C1025.3 440.3 1030.3 443.9 1035.0 446.0C1039.7 448.1 1043.0 450.0 1048.0 451.0C1053.0 452.0 1062.2 451.8 1065.0 452.0" stroke="#fa7cba" stroke-width="1" opacity=".32"/>
<path d="M700.0 452.0C706.7 452.8 724.3 455.6 740.0 457.0C755.7 458.4 775.7 460.3 794.0 460.6C812.3 460.9 832.3 460.1 850.0 459.0C867.7 457.9 883.3 455.2 900.0 454.0C916.7 452.8 941.7 452.3 950.0 452.0" stroke="#fa7cba" stroke-width="1" opacity=".32"/>
<path d="M860.0 452.0C870.0 452.8 900.0 455.3 920.0 457.0C940.0 458.7 960.0 461.3 980.0 462.0C1000.0 462.7 1020.0 462.0 1040.0 461.0C1060.0 460.0 1083.3 457.5 1100.0 456.0C1116.7 454.5 1133.3 452.7 1140.0 452.0" stroke="#fa7cba" stroke-width="1" opacity=".32"/>
<path d="M1023.0 455.0C1029.7 454.3 1049.7 453.5 1063.0 451.0C1076.3 448.5 1090.5 445.0 1103.0 440.0C1115.5 435.0 1129.2 427.0 1138.0 421.0C1146.8 415.0 1150.1 411.1 1156.0 404.0C1161.9 396.9 1167.6 387.1 1173.6 378.6C1179.6 370.1 1186.8 358.8 1192.0 353.0C1197.2 347.2 1200.2 346.0 1205.0 344.0C1209.8 342.0 1210.2 341.7 1220.5 341.0C1230.8 340.3 1254.9 339.5 1267.0 340.0C1279.1 340.5 1285.2 342.2 1293.0 344.0C1300.8 345.8 1306.8 347.5 1314.0 350.5C1321.2 353.5 1328.3 358.8 1336.0 362.0C1343.7 365.2 1352.2 369.2 1360.0 370.0C1367.8 370.8 1375.8 369.3 1383.0 367.0C1390.2 364.7 1397.0 358.8 1403.0 356.0C1409.0 353.2 1413.7 350.8 1419.0 350.5C1424.3 350.2 1429.3 350.6 1435.0 354.0C1440.7 357.4 1446.8 365.3 1453.0 371.0C1459.2 376.7 1466.0 382.5 1472.0 388.0C1478.0 393.5 1481.7 398.0 1489.0 404.0C1496.3 410.0 1507.8 418.3 1516.0 424.0C1524.2 429.7 1531.8 434.2 1538.0 438.0C1544.2 441.8 1548.0 444.3 1553.5 446.5C1559.0 448.7 1562.2 450.1 1571.0 451.0C1579.8 451.9 1600.2 451.8 1606.0 452.0" stroke="#fa7cba" stroke-width="1" opacity=".32"/>
<path d="M1033.0 458.0C1041.3 457.0 1069.3 454.3 1083.0 452.0C1096.7 449.7 1104.6 448.8 1115.0 444.0C1125.4 439.2 1138.7 429.5 1145.5 423.0C1152.3 416.5 1151.1 412.0 1156.0 405.0C1160.9 398.0 1168.5 389.0 1175.0 381.0C1181.5 373.0 1188.7 362.5 1195.0 357.0C1201.3 351.5 1205.0 349.8 1213.0 348.0C1221.0 346.2 1232.2 345.8 1243.0 346.0C1253.8 346.2 1268.2 347.8 1278.0 349.0C1287.8 350.2 1292.8 352.0 1302.0 353.0C1311.2 354.0 1327.8 354.7 1333.0 355.0" stroke="#fa7cba" stroke-width="1" opacity=".32"/>
<path d="M1093.0 452.0C1099.7 448.8 1122.5 440.9 1133.0 433.0C1143.5 425.1 1148.3 414.3 1156.0 404.5C1163.7 394.7 1171.8 382.1 1179.0 374.0C1186.2 365.9 1192.5 359.8 1199.0 356.0C1205.5 352.2 1209.0 352.2 1218.0 351.5C1227.0 350.8 1240.5 351.5 1253.0 352.0C1265.5 352.5 1286.3 354.1 1293.0 354.5" stroke="#fa7cba" stroke-width="1" opacity=".32"/>
<path d="M1273.0 352.0C1279.7 353.3 1301.3 356.8 1313.0 360.0C1324.7 363.2 1335.2 368.5 1343.0 371.0C1350.8 373.5 1354.2 374.7 1360.0 375.0C1365.8 375.3 1372.2 374.8 1378.0 373.0C1383.8 371.2 1389.8 366.7 1395.0 364.0C1400.2 361.3 1404.7 358.7 1409.0 357.0C1413.3 355.3 1416.0 353.7 1421.0 354.0C1426.0 354.3 1432.8 355.7 1439.0 359.0C1445.2 362.3 1449.7 366.3 1458.0 374.0C1466.3 381.7 1478.5 396.0 1489.0 405.0C1499.5 414.0 1511.5 421.7 1521.0 428.0C1530.5 434.3 1538.5 439.2 1546.0 443.0C1553.5 446.8 1557.7 449.0 1566.0 450.5C1574.3 452.0 1591.0 451.8 1596.0 452.0" stroke="#fa7cba" stroke-width="1" opacity=".32"/>
<path d="M1248.0 451.0C1252.2 450.2 1264.7 448.0 1273.0 446.0C1281.3 444.0 1290.5 440.8 1298.0 439.0C1305.5 437.2 1311.7 436.2 1318.0 435.5C1324.3 434.8 1330.2 434.5 1336.0 435.0C1341.8 435.5 1347.7 436.7 1353.0 438.5C1358.3 440.3 1363.3 443.9 1368.0 446.0C1372.7 448.1 1376.0 450.0 1381.0 451.0C1386.0 452.0 1395.2 451.8 1398.0 452.0" stroke="#fa7cba" stroke-width="1" opacity=".32"/>
<path d="M1033.0 452.0C1039.7 452.8 1057.3 455.6 1073.0 457.0C1088.7 458.4 1108.7 460.3 1127.0 460.6C1145.3 460.9 1165.3 460.1 1183.0 459.0C1200.7 457.9 1216.3 455.2 1233.0 454.0C1249.7 452.8 1274.7 452.3 1283.0 452.0" stroke="#fa7cba" stroke-width="1" opacity=".32"/>
<path d="M1193.0 452.0C1203.0 452.8 1233.0 455.3 1253.0 457.0C1273.0 458.7 1293.0 461.3 1313.0 462.0C1333.0 462.7 1353.0 462.0 1373.0 461.0C1393.0 460.0 1416.3 457.5 1433.0 456.0C1449.7 454.5 1466.3 452.7 1473.0 452.0" stroke="#fa7cba" stroke-width="1" opacity=".32"/>
</g><g filter="url(#bl2)">
<path d="M711 452.5H742" stroke="#ffd6ec" stroke-width="2.400" opacity=".75"/>
<path d="M880 451.5H950" stroke="#ffd6ec" stroke-width="2.400" opacity=".75"/>
<path d="M1025 451.5H1080" stroke="#ffd6ec" stroke-width="2.400" opacity=".75"/>
<path d="M1222 452H1270" stroke="#ffd6ec" stroke-width="2.400" opacity=".75"/>
<circle cx="823" cy="404" r="2.500" fill="#ffb4da" stroke="none" opacity=".32"/>
<circle cx="1156" cy="404" r="2.500" fill="#ffb4da" stroke="none" opacity=".32"/>
<circle cx="753" cy="351" r="2.500" fill="#ffb4da" stroke="none" opacity=".32"/>
<circle cx="1086" cy="351" r="2.500" fill="#ffb4da" stroke="none" opacity=".32"/>
</g>
</g>
<text x="694.500" y="349.500" font-size="9" fill="#f6e4ee">CA.</text><path d="M700.500 353h10" stroke="#f8c8dc" stroke-width="1.600"/>
<path d="M822.300 506.500l-2.700 8h5.400z" fill="#fbd8e6"/>
</svg>
<div id="tbl">
<div class="row hdr" style="top:0">
<span style="left:1px;width:78px">Index</span>
<span style="left:81px;width:78px">Time</span>
<span style="left:161px;width:78px">Protocol</span>
<span style="left:241px;width:158px">Message</span>
<span style="left:401px;width:632px">Data</span>
<span style="left:1035px;width:78px;font-weight:normal;font-size:13.5px">CRC</span>
<span style="left:1115px;width:124px">Status</span>
</div>
<div class="row" style="top:16px;background:transparent">
<svg style="position:absolute;left:6px;top:3px" width="8" height="10" viewBox="0 0 8 10"><path d="M1.500 1.500l4 3.500l-4 3.500z" fill="none" stroke="#d8d8e8" stroke-width="1.200"/></svg>
<span style="left:16px;width:62px;color:#fff">1</span>
<span style="left:81px;width:78px;color:#fff">-4.9960 ms</span>
<span class="pk" style="left:161px;width:79px;padding-left:0px">CAN FD</span>
<span style="left:241px;width:157px;color:#fff">FD 0x401</span>
<span style="left:401px;width:613px;color:#fff">2a 2a 2a 2a 2a 2a 2a 2a 2a 2a 2a 2a 2a 2a 2a 2a 2a 2a 2a 2a 2a 2a 2a 2a 2a 2a 2a 2a 2a 2a 2a 2a 2a...</span>
<svg style="position:absolute;left:1019px;top:5px" width="8" height="8" viewBox="0 0 8 8"><path d="M7.500 .500v7h-7z" fill="#fff"/></svg>
<span style="left:1035px;width:78px;color:#fff">0x18d897</span>
</div>
<div class="row" style="top:32px;background:transparent">
<svg style="position:absolute;left:6px;top:3px" width="8" height="10" viewBox="0 0 8 10"><path d="M1.500 1.500l4 3.500l-4 3.500z" fill="none" stroke="#d8d8e8" stroke-width="1.200"/></svg>
<span style="left:16px;width:62px;color:#fff">2</span>
<span style="left:81px;width:78px;color:#fff">-4.8894 ms</span>
<span class="yl" style="left:161px;width:79px;padding-left:0px">CAN FD</span>
<span style="left:241px;width:157px;color:#fff">FD Ext 0x009</span>
<span style="left:401px;width:631px;color:#fff">SteerData&nbsp; (0x9)</span>
<span style="left:1035px;width:78px;color:#fff">0x1c9c3</span>
</div>
<div class="row" style="top:48px;background:transparent">
<svg style="position:absolute;left:6px;top:3px" width="8" height="10" viewBox="0 0 8 10"><path d="M1.500 1.500l4 3.500l-4 3.500z" fill="none" stroke="#d8d8e8" stroke-width="1.200"/></svg>
<span style="left:16px;width:62px;color:#fff">3</span>
<span style="left:81px;width:78px;color:#fff">-4.8727 ms</span>
<span class="pk" style="left:161px;width:79px;padding-left:0px">CAN FD</span>
<span style="left:241px;width:157px;color:#fff">FD Ext 0x009</span>
<span style="left:401px;width:631px;color:#fff">48 4d 53 5f 72 75 6c 65 7a 21 dd ee ff 00 00 00</span>
<span style="left:1035px;width:78px;color:#fff">0x1c9c3</span>
</div>
<div class="row" style="top:64px;background:linear-gradient(#7c1246,#a3195a 55%,#7c1246)">
<svg style="position:absolute;left:6px;top:3px" width="8" height="10" viewBox="0 0 8 10"><path d="M1.500 1.500l4 3.500l-4 3.500z" fill="none" stroke="#d8d8e8" stroke-width="1.200"/></svg>
<span style="left:16px;width:62px;color:#fff">4</span>
<span style="left:81px;width:78px;color:#fff">-4.7431 ms</span>
<span class="pk" style="left:161px;width:79px;padding-left:0px">CAN FD</span>
<span style="left:241px;width:157px;color:#fff">FD Ext 0x319</span>
<span style="left:401px;width:631px;color:#fff">48 69 5f 49 6e 74 72 65 70 69 64 00</span>
<span style="left:1035px;width:78px;color:#fff">0x13659</span>
</div>
<div class="row" style="top:80px;background:#b7b52f">
<svg style="position:absolute;left:6px;top:3px" width="8" height="10" viewBox="0 0 8 10"><path d="M1.500 1.500l4 3.500l-4 3.500z" fill="none" stroke="#f4ec6a" stroke-width="1.200"/></svg>
<span style="left:16px;width:62px;color:#f4ec6a">5</span>
<span style="left:81px;width:78px;color:#f4ec6a">-4.7011 ms</span>
<span class="yl" style="left:161px;width:79px;padding-left:0px">CAN FD</span>
<span style="left:241px;width:157px;color:#f4ec6a">FD 0x002</span>
<span style="left:401px;width:631px;color:#f4ec6a">Engine&nbsp; (0x2)</span>
<span style="left:1035px;width:78px;color:#f4ec6a">0x84be</span>
</div>
<div class="row" style="top:96px;background:linear-gradient(#c4246c,#dc2a78 50%,#b81f62)">
<svg style="position:absolute;left:6px;top:3px" width="8" height="10" viewBox="0 0 8 10"><path d="M1.500 1.500l4 3.500l-4 3.500z" fill="none" stroke="#f0a060" stroke-width="1.200"/></svg>
<span style="left:16px;width:62px;color:#fff">6</span>
<span style="left:81px;width:78px;color:#fff">-4.6211 ms</span>
<span class="pk" style="left:161px;width:79px;padding-left:0px">CAN FD</span>
<span style="left:241px;width:157px;color:#fff">FD 0x201</span>
<span style="left:401px;width:631px;color:#fff">22 22 22 22 22 22 22 22 22 22 22 22 22 22 22 22 22 22 22 22 22 22 22 22</span>
<span style="left:1035px;width:78px;color:#fff">0x188c52</span>
</div>
<div class="row" style="top:112px;background:linear-gradient(#30101f,#3a1526)">
<svg style="position:absolute;left:6px;top:3px" width="8" height="10" viewBox="0 0 8 10"><path d="M1.500 1.500l4 3.500l-4 3.500z" fill="none" stroke="#d8d8e8" stroke-width="1.200"/></svg>
<span style="left:16px;width:62px;color:#fff">7</span>
<span style="left:81px;width:78px;color:#fff">-4.5270 ms</span>
<span class="pk" style="left:161px;width:79px;padding-left:0px">CAN FD</span>
<span style="left:241px;width:157px;color:#fff">FD 0x401</span>
<span style="left:401px;width:613px;color:#fff">2a 2a 2a 2a 2a 2a 2a 2a 2a 2a 2a 2a 2a 2a 2a 2a 2a 2a 2a 2a 2a 2a 2a 2a 2a 2a 2a 2a 2a 2a 2a 2a 2a...</span>
<svg style="position:absolute;left:1019px;top:5px" width="8" height="8" viewBox="0 0 8 8"><path d="M7.500 .500v7h-7z" fill="#fff"/></svg>
<span style="left:1035px;width:78px;color:#fff">0x18d897</span>
</div>
<div class="row" style="top:128px;background:transparent">
<svg style="position:absolute;left:6px;top:3px" width="8" height="10" viewBox="0 0 8 10"><path d="M1.500 1.500l4 3.500l-4 3.500z" fill="none" stroke="#d8d8e8" stroke-width="1.200"/></svg>
<span style="left:16px;width:62px;color:#fff">8</span>
<span style="left:81px;width:78px;color:#fff">-4.5070 ms</span>
<span class="yl" style="left:161px;width:79px;padding-left:0px">CAN FD</span>
<span style="left:241px;width:157px;color:#fff">FD 0x002</span>
<span style="left:401px;width:631px;color:#fff">Engine&nbsp; (0x2)</span>
<span style="left:1035px;width:78px;color:#fff">0x84be</span>
</div>
<div class="row" style="top:144px;background:transparent">
<svg style="position:absolute;left:6px;top:3px" width="8" height="10" viewBox="0 0 8 10"><path d="M1.500 1.500l4 3.500l-4 3.500z" fill="none" stroke="#d8d8e8" stroke-width="1.200"/></svg>
<span style="left:16px;width:62px;color:#fff">9</span>
<span style="left:81px;width:78px;color:#fff">-4.4037 ms</span>
<span class="pk" style="left:161px;width:79px;padding-left:0px">CAN FD</span>
<span style="left:241px;width:157px;color:#fff">FD 0x002</span>
<span style="left:401px;width:631px;color:#fff">12 34 56 78 aa aa aa aa 55 55 55 55 55 55 55 55</span>
<span style="left:1035px;width:78px;color:#fff">0xecb0</span>
</div>
<div class="row" style="top:160px;background:transparent">
<svg style="position:absolute;left:6px;top:3px" width="8" height="10" viewBox="0 0 8 10"><path d="M1.500 1.500l4 3.500l-4 3.500z" fill="none" stroke="#d8d8e8" stroke-width="1.200"/></svg>
<span style="left:16px;width:62px;color:#fff">10</span>
<span style="left:81px;width:78px;color:#fff">-4.3126 ms</span>
<span class="yl" style="left:161px;width:79px;padding-left:0px">CAN FD</span>
<span style="left:241px;width:157px;color:#fff">FD 0x501</span>
<span style="left:401px;width:631px;color:#fff">WheelData&nbsp; (0x501)</span>
<span style="left:1035px;width:78px;color:#fff">0x151b6f</span>
</div>
<div class="vl" style="left:80px"></div>
<div class="vl" style="left:160px"></div>
<div class="vl" style="left:240px"></div>
<div class="vl" style="left:400px"></div>
<div class="vl" style="left:1034px"></div>
<div class="vl" style="left:1114px"></div>
<div class="hl" style="top:15px"></div>
<div class="hl" style="top:31px"></div>
<div class="hl" style="top:47px"></div>
<div class="hl" style="top:63px"></div>
<div class="hl" style="top:79px"></div>
<div class="hl" style="top:95px"></div>
<div class="hl" style="top:111px"></div>
<div class="hl" style="top:127px"></div>
<div class="hl" style="top:143px"></div>
<div class="hl" style="top:159px"></div>
<div class="hl" style="top:175px"></div>
</div>
<div id="sb"><div class="btn" style="top:0;height:31px"><svg width="30" height="29" viewBox="0 0 30 29"><path d="M3 23.500L16 10l13 13.500z" fill="#000" stroke="#fff" stroke-width="1.300"/></svg></div>
<div class="thumb"></div>
<div class="btn" style="top:147px;height:30px"><svg width="30" height="28" viewBox="0 0 30 28"><path d="M3 11.500L16 25l13 -13.500z" fill="#000" stroke="#fff" stroke-width="1.300"/></svg></div></div>
<div class="box" style="left:4px;width:97px;background:#474747;"><div class="h" style="background:#f5ec3a;color:#1a1a1a"><i>Z1</i><b>zoom(C1)</b></div><div class="l" style="top:18.0px">900 mV/div</div><div class="l" style="top:32.5px">20.3 &micro;s/div</div></div>
<div class="box" style="left:103px;width:99px;background:#2b4f74;"><div class="h" style="background:#ee1c7c;color:#5a0a2c"><i>Z2</i><b>zoom(C2)</b></div><div class="l" style="top:18.0px">620 mV/div</div><div class="l" style="top:32.5px">20.3 &micro;s/div</div><div style="position:absolute;left:0;top:0;right:0;bottom:0;border:2px solid #2f80d8;border-top-width:1px"></div></div>
<div class="box" style="left:204px;width:97px;background:#474747;"><div class="h" style="background:#f8f2a4;color:#1a1a1a"><i>CANFD Eye1</i><b></b></div><div class="l" style="top:18.0px">900 mV/div</div><div class="l" style="top:32.5px">83 ns/div</div><div class="l" style="top:47.0px">144 #</div></div>
<div class="box" style="left:304px;width:98px;background:#474747;"><div class="h" style="background:#f4a6cc;color:#1a1a1a"><i>CANFD Eye2</i><b></b></div><div class="l" style="top:18.0px">620 mV/div</div><div class="l" style="top:32.5px">25.0 ns/div</div><div class="l" style="top:47.0px">10.983 k#</div></div>
<div style="position:absolute;left:404px;top:717px;width:97px;height:64px;border:1px dashed #e8e8e8;background:#000"><svg width="95" height="62" viewBox="0 0 95 62"><path d="M46.500 24.500v14M39.500 31.500h14" stroke="#fff" stroke-width="2"/></svg></div>
<div class="box" style="left:1064px;width:110px;height:49px;background:#474747;font-size:12.6px"><div class="h" style="background:#fff;height:14px;line-height:16px;font-size:12.6px"><i>Tbase</i><b>-1.64 ms</b></div><div class="l" style="top:18px">1.00 ms/div</div><div class="l" style="top:33px;left:2px;right:auto">2.50 MS&nbsp;&nbsp;&nbsp;250 M...</div></div>
<div class="box" style="left:1178px;width:97px;height:49px;background:#474747;font-size:12.6px"><div class="h" style="background:#fff;height:14px;line-height:16px;font-size:12.6px"><i>Trigger</i></div>
<div style="position:absolute;left:52px;top:1px;width:18px;height:12px;background:#000;border-radius:2px;color:#fff;font-size:11px;line-height:11px;text-align:center;overflow:hidden;font-weight:bold">C1</div>
<div style="position:absolute;left:73px;top:1px;width:21px;height:12px;background:#000;border-radius:2px;color:#fff;font-size:11px;line-height:11px;text-align:center;overflow:hidden;font-weight:bold">DC</div>
<div class="l" style="top:18px;left:3px;right:auto">Stop</div><div class="l" style="top:18px">-890 mV</div><div class="l" style="top:33px;left:3px;right:auto">CAN FD</div></div>
<div id="footer"><svg width="200" height="17" viewBox="0 0 200 17" font-family='"Liberation Sans", Arial, sans-serif' font-size="14"><text x="7" y="14" font-weight="bold" fill="#fff" textLength="68" lengthAdjust="spacingAndGlyphs">TELEDYNE</text><text x="79" y="14" fill="#c4c4c4" textLength="44" lengthAdjust="spacingAndGlyphs">LECROY</text></svg></div>
</body></html>
